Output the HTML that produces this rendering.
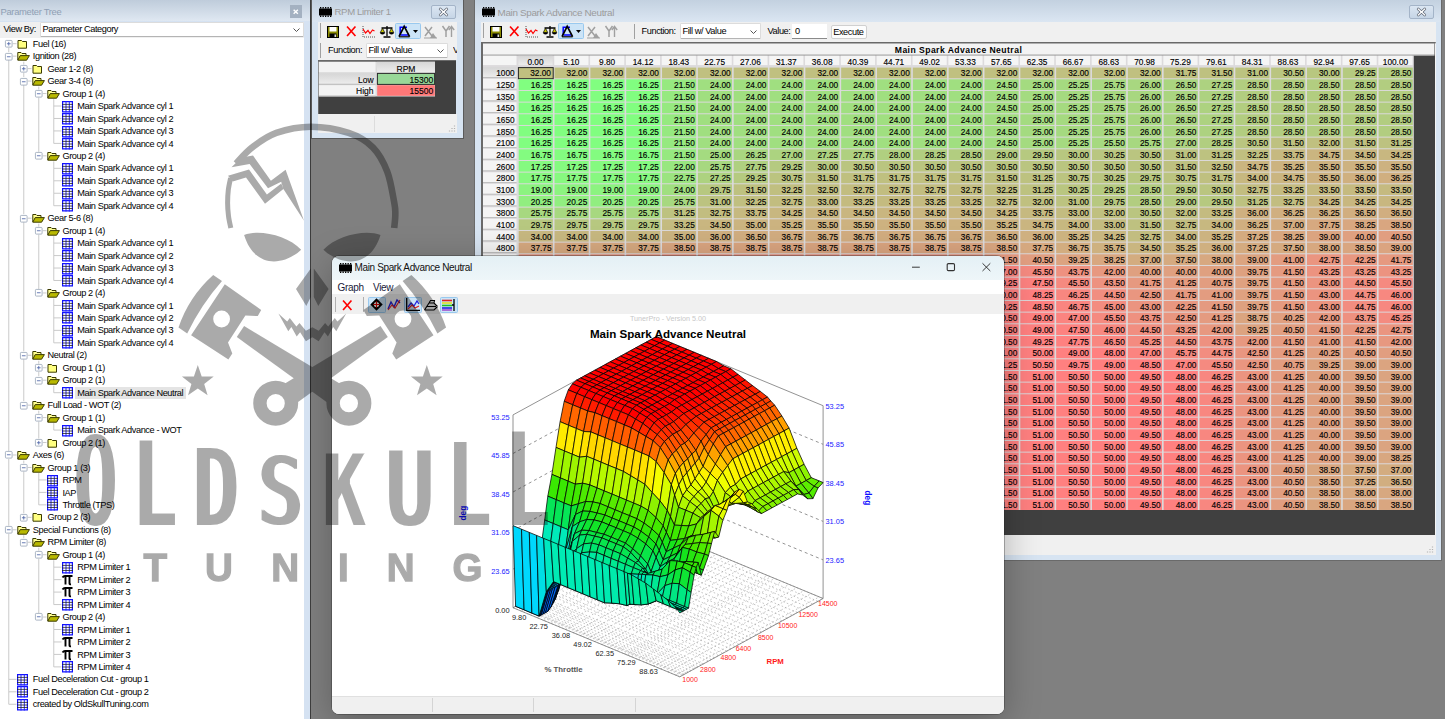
<!DOCTYPE html><html><head><meta charset="utf-8"><title>Main Spark Advance Neutral</title><style>
*{box-sizing:border-box;margin:0;padding:0}
html,body{width:1445px;height:719px;overflow:hidden}
body{position:relative;background:#808080;font-family:"Liberation Sans",sans-serif;font-size:9.2px;color:#000}
.abs,.abs *{position:absolute}
div{position:absolute;white-space:nowrap}
svg{position:absolute;overflow:visible}
.t{font-size:9.2px;letter-spacing:-0.4px;line-height:12.5px;height:12.5px;color:#000}
.g{font-size:8.4px;line-height:10px;text-align:right;color:#000}
.frame{background:#d7e4f2;border:1px solid #5a5a5a}
.tb{background:#f0f0f0}
</style></head><body>
<div id="left" style="left:0;top:0;width:310px;height:719px;background:#d5e2f2"></div>
<div style="left:310px;top:0;width:1px;height:719px;background:#3c3c3c"></div>
<div style="left:0;top:0;width:310px;height:21px;background:linear-gradient(#bfccdb,#dfe8f2)"></div>
<div class="t" style="left:0.5px;top:6px;color:#8f9fb4;font-size:9.4px;letter-spacing:-0.3px">Parameter Tree</div>
<div style="left:289.5px;top:5px;width:12.5px;height:13px;background:#a4b1c1"></div>
<svg style="left:293px;top:9px" width="5.5" height="5.5" viewBox="0 0 6 6"><path d="M0.7 0.7L5.3 5.3M5.3 0.7L0.7 5.3" stroke="#fff" stroke-width="1.5"/></svg>
<div style="left:0;top:21.5px;width:304px;height:16px;background:#f0f0f0"></div>
<div class="t" style="left:3.5px;top:23px">View By:</div>
<div style="left:40px;top:21.5px;width:263.5px;height:15px;background:#fff;border:1px solid #dcdcdc;border-bottom-color:#b4b4b4;border-radius:1.5px"></div><div class="t" style="left:42.5px;top:23.05px">Parameter Category</div><svg style="left:292.5px;top:27.5px" width="7" height="4" viewBox="0 0 7 4"><path d="M0.5 0.5L3.5 3.5L6.5 0.5" stroke="#555" stroke-width="1" fill="none"/></svg>
<div id="tree" style="left:0;top:37.5px;width:304px;height:682px;background:#fff"></div>
<svg style="left:0;top:0" width="304" height="719"><path d="M12.75 43.682H16.5M8.75 47.682V52.146M12.75 56.146H16.5M8.75 60.146V450.994M23.75 61.646V64.61M27.75 68.61H31.5M23.75 72.61V77.074M27.75 81.074H31.5M23.75 85.074V214.178M38.75 86.574V89.538M42.75 93.538H46.5M38.75 97.538V151.858M53.75 99.038V106.002M53.75 106.002H61.5M53.75 106.002V118.466M53.75 118.466H61.5M53.75 118.466V130.93M53.75 130.93H61.5M53.75 130.93V143.394M53.75 143.394H61.5M42.75 155.858H46.5M53.75 161.358V168.322M53.75 168.322H61.5M53.75 168.322V180.786M53.75 180.786H61.5M53.75 180.786V193.25M53.75 193.25H61.5M53.75 193.25V205.714M53.75 205.714H61.5M27.75 218.178H31.5M23.75 222.178V351.282M38.75 223.678V226.642M42.75 230.642H46.5M38.75 234.642V288.962M53.75 236.142V243.106M53.75 243.106H61.5M53.75 243.106V255.57M53.75 255.57H61.5M53.75 255.57V268.034M53.75 268.034H61.5M53.75 268.034V280.498M53.75 280.498H61.5M42.75 292.962H46.5M53.75 298.462V305.426M53.75 305.426H61.5M53.75 305.426V317.89M53.75 317.89H61.5M53.75 317.89V330.354M53.75 330.354H61.5M53.75 330.354V342.818M53.75 342.818H61.5M27.75 355.282H31.5M23.75 359.282V401.138M38.75 360.782V363.746M42.75 367.746H46.5M38.75 371.746V376.21M42.75 380.21H46.5M53.75 385.71V392.674M53.75 392.674H61.5M27.75 405.138H31.5M38.75 410.638V413.602M42.75 417.602H46.5M38.75 421.602V438.53M53.75 423.102V430.066M53.75 430.066H61.5M42.75 442.53H46.5M12.75 454.994H16.5M8.75 458.994V525.778M23.75 460.494V463.458M27.75 467.458H31.5M23.75 471.458V513.314M38.75 472.958V479.922M38.75 479.922H46.5M38.75 479.922V492.386M38.75 492.386H46.5M38.75 492.386V504.85M38.75 504.85H46.5M27.75 517.314H31.5M12.75 529.778H16.5M8.75 533.778V679.346M23.75 535.278V538.242M27.75 542.242H31.5M38.75 547.742V550.706M42.75 554.706H46.5M38.75 558.706V613.026M53.75 560.206V567.17M53.75 567.17H61.5M53.75 567.17V579.634M53.75 579.634H61.5M53.75 579.634V592.098M53.75 592.098H61.5M53.75 592.098V604.562M53.75 604.562H61.5M42.75 617.026H46.5M53.75 622.526V629.49M53.75 629.49H61.5M53.75 629.49V641.954M53.75 641.954H61.5M53.75 641.954V654.418M53.75 654.418H61.5M53.75 654.418V666.882M53.75 666.882H61.5M8.75 679.346H16.5M8.75 679.346V691.81M8.75 691.81H16.5M8.75 691.81V704.274M8.75 704.274H16.5" stroke="#c4c4c4" stroke-width="0.9" fill="none"/></svg>
<svg style="left:5px;top:40.132px" width="7.5" height="7.5" viewBox="0 0 9 9"><rect x="0.5" y="0.5" width="8" height="8" fill="#fff" stroke="#9aa7b8" rx="1"/><path d="M2.3 4.5H6.7M4.5 2.3V6.7" stroke="#4b63a7" stroke-width="1"/></svg>
<svg style="left:16.7px;top:38.782px" width="11" height="10" viewBox="0 0 11 10"><path d="M1 1.5H4.5L5.5 2.5H9.5V9.2H1z" fill="#ffff80" stroke="#3a3a00" stroke-width="1"/></svg>
<div class="t" style="left:32.8px;top:37.8px">Fuel (16)</div>
<svg style="left:5px;top:52.596px" width="7.5" height="7.5" viewBox="0 0 9 9"><rect x="0.5" y="0.5" width="8" height="8" fill="#fff" stroke="#9aa7b8" rx="1"/><path d="M2.3 4.5H6.7" stroke="#4b63a7" stroke-width="1"/></svg>
<svg style="left:16.7px;top:51.246px" width="13" height="10" viewBox="0 0 13 10"><path d="M0.8 9V1.5H4L5 2.5H9V4.5" fill="#ffff90" stroke="#3a3a00" stroke-width="1"/><path d="M0.8 9.2L3.2 4.6H12.4L9.6 9.2z" fill="#b8b800" stroke="#3a3a00" stroke-width="1"/></svg>
<div class="t" style="left:32.8px;top:50.264px">Ignition (28)</div>
<svg style="left:20px;top:65.06px" width="7.5" height="7.5" viewBox="0 0 9 9"><rect x="0.5" y="0.5" width="8" height="8" fill="#fff" stroke="#9aa7b8" rx="1"/><path d="M2.3 4.5H6.7M4.5 2.3V6.7" stroke="#4b63a7" stroke-width="1"/></svg>
<svg style="left:31.7px;top:63.71px" width="11" height="10" viewBox="0 0 11 10"><path d="M1 1.5H4.5L5.5 2.5H9.5V9.2H1z" fill="#ffff80" stroke="#3a3a00" stroke-width="1"/></svg>
<div class="t" style="left:47.6px;top:62.728px">Gear 1-2 (8)</div>
<svg style="left:20px;top:77.524px" width="7.5" height="7.5" viewBox="0 0 9 9"><rect x="0.5" y="0.5" width="8" height="8" fill="#fff" stroke="#9aa7b8" rx="1"/><path d="M2.3 4.5H6.7" stroke="#4b63a7" stroke-width="1"/></svg>
<svg style="left:31.7px;top:76.174px" width="13" height="10" viewBox="0 0 13 10"><path d="M0.8 9V1.5H4L5 2.5H9V4.5" fill="#ffff90" stroke="#3a3a00" stroke-width="1"/><path d="M0.8 9.2L3.2 4.6H12.4L9.6 9.2z" fill="#b8b800" stroke="#3a3a00" stroke-width="1"/></svg>
<div class="t" style="left:47.6px;top:75.192px">Gear 3-4 (8)</div>
<svg style="left:35px;top:89.988px" width="7.5" height="7.5" viewBox="0 0 9 9"><rect x="0.5" y="0.5" width="8" height="8" fill="#fff" stroke="#9aa7b8" rx="1"/><path d="M2.3 4.5H6.7" stroke="#4b63a7" stroke-width="1"/></svg>
<svg style="left:46.7px;top:88.638px" width="13" height="10" viewBox="0 0 13 10"><path d="M0.8 9V1.5H4L5 2.5H9V4.5" fill="#ffff90" stroke="#3a3a00" stroke-width="1"/><path d="M0.8 9.2L3.2 4.6H12.4L9.6 9.2z" fill="#b8b800" stroke="#3a3a00" stroke-width="1"/></svg>
<div class="t" style="left:62.4px;top:87.656px">Group 1 (4)</div>
<svg style="left:62.2px;top:100.602px" width="11" height="11.5" viewBox="0 0 11 11.5"><rect x="0" y="0" width="11" height="11.5" fill="#fff"/><path d="M0.6 0V11.5M10.4 0V11.5M0 0.6H11M0 10.9H11" stroke="#1010ff" stroke-width="1.2"/><path d="M4 0V11.5M7.3 0V11.5" stroke="#2020ff" stroke-width="1"/><path d="M0 3.4H11M0 6H11M0 8.5H11" stroke="#222" stroke-width="0.8"/></svg>
<div class="t" style="left:77.2px;top:100.12px">Main Spark Advance cyl 1</div>
<svg style="left:62.2px;top:113.066px" width="11" height="11.5" viewBox="0 0 11 11.5"><rect x="0" y="0" width="11" height="11.5" fill="#fff"/><path d="M0.6 0V11.5M10.4 0V11.5M0 0.6H11M0 10.9H11" stroke="#1010ff" stroke-width="1.2"/><path d="M4 0V11.5M7.3 0V11.5" stroke="#2020ff" stroke-width="1"/><path d="M0 3.4H11M0 6H11M0 8.5H11" stroke="#222" stroke-width="0.8"/></svg>
<div class="t" style="left:77.2px;top:112.584px">Main Spark Advance cyl 2</div>
<svg style="left:62.2px;top:125.53px" width="11" height="11.5" viewBox="0 0 11 11.5"><rect x="0" y="0" width="11" height="11.5" fill="#fff"/><path d="M0.6 0V11.5M10.4 0V11.5M0 0.6H11M0 10.9H11" stroke="#1010ff" stroke-width="1.2"/><path d="M4 0V11.5M7.3 0V11.5" stroke="#2020ff" stroke-width="1"/><path d="M0 3.4H11M0 6H11M0 8.5H11" stroke="#222" stroke-width="0.8"/></svg>
<div class="t" style="left:77.2px;top:125.048px">Main Spark Advance cyl 3</div>
<svg style="left:62.2px;top:137.994px" width="11" height="11.5" viewBox="0 0 11 11.5"><rect x="0" y="0" width="11" height="11.5" fill="#fff"/><path d="M0.6 0V11.5M10.4 0V11.5M0 0.6H11M0 10.9H11" stroke="#1010ff" stroke-width="1.2"/><path d="M4 0V11.5M7.3 0V11.5" stroke="#2020ff" stroke-width="1"/><path d="M0 3.4H11M0 6H11M0 8.5H11" stroke="#222" stroke-width="0.8"/></svg>
<div class="t" style="left:77.2px;top:137.512px">Main Spark Advance cyl 4</div>
<svg style="left:35px;top:152.308px" width="7.5" height="7.5" viewBox="0 0 9 9"><rect x="0.5" y="0.5" width="8" height="8" fill="#fff" stroke="#9aa7b8" rx="1"/><path d="M2.3 4.5H6.7" stroke="#4b63a7" stroke-width="1"/></svg>
<svg style="left:46.7px;top:150.958px" width="13" height="10" viewBox="0 0 13 10"><path d="M0.8 9V1.5H4L5 2.5H9V4.5" fill="#ffff90" stroke="#3a3a00" stroke-width="1"/><path d="M0.8 9.2L3.2 4.6H12.4L9.6 9.2z" fill="#b8b800" stroke="#3a3a00" stroke-width="1"/></svg>
<div class="t" style="left:62.4px;top:149.976px">Group 2 (4)</div>
<svg style="left:62.2px;top:162.922px" width="11" height="11.5" viewBox="0 0 11 11.5"><rect x="0" y="0" width="11" height="11.5" fill="#fff"/><path d="M0.6 0V11.5M10.4 0V11.5M0 0.6H11M0 10.9H11" stroke="#1010ff" stroke-width="1.2"/><path d="M4 0V11.5M7.3 0V11.5" stroke="#2020ff" stroke-width="1"/><path d="M0 3.4H11M0 6H11M0 8.5H11" stroke="#222" stroke-width="0.8"/></svg>
<div class="t" style="left:77.2px;top:162.44px">Main Spark Advance cyl 1</div>
<svg style="left:62.2px;top:175.386px" width="11" height="11.5" viewBox="0 0 11 11.5"><rect x="0" y="0" width="11" height="11.5" fill="#fff"/><path d="M0.6 0V11.5M10.4 0V11.5M0 0.6H11M0 10.9H11" stroke="#1010ff" stroke-width="1.2"/><path d="M4 0V11.5M7.3 0V11.5" stroke="#2020ff" stroke-width="1"/><path d="M0 3.4H11M0 6H11M0 8.5H11" stroke="#222" stroke-width="0.8"/></svg>
<div class="t" style="left:77.2px;top:174.904px">Main Spark Advance cyl 2</div>
<svg style="left:62.2px;top:187.85px" width="11" height="11.5" viewBox="0 0 11 11.5"><rect x="0" y="0" width="11" height="11.5" fill="#fff"/><path d="M0.6 0V11.5M10.4 0V11.5M0 0.6H11M0 10.9H11" stroke="#1010ff" stroke-width="1.2"/><path d="M4 0V11.5M7.3 0V11.5" stroke="#2020ff" stroke-width="1"/><path d="M0 3.4H11M0 6H11M0 8.5H11" stroke="#222" stroke-width="0.8"/></svg>
<div class="t" style="left:77.2px;top:187.368px">Main Spark Advance cyl 3</div>
<svg style="left:62.2px;top:200.314px" width="11" height="11.5" viewBox="0 0 11 11.5"><rect x="0" y="0" width="11" height="11.5" fill="#fff"/><path d="M0.6 0V11.5M10.4 0V11.5M0 0.6H11M0 10.9H11" stroke="#1010ff" stroke-width="1.2"/><path d="M4 0V11.5M7.3 0V11.5" stroke="#2020ff" stroke-width="1"/><path d="M0 3.4H11M0 6H11M0 8.5H11" stroke="#222" stroke-width="0.8"/></svg>
<div class="t" style="left:77.2px;top:199.832px">Main Spark Advance cyl 4</div>
<svg style="left:20px;top:214.628px" width="7.5" height="7.5" viewBox="0 0 9 9"><rect x="0.5" y="0.5" width="8" height="8" fill="#fff" stroke="#9aa7b8" rx="1"/><path d="M2.3 4.5H6.7" stroke="#4b63a7" stroke-width="1"/></svg>
<svg style="left:31.7px;top:213.278px" width="13" height="10" viewBox="0 0 13 10"><path d="M0.8 9V1.5H4L5 2.5H9V4.5" fill="#ffff90" stroke="#3a3a00" stroke-width="1"/><path d="M0.8 9.2L3.2 4.6H12.4L9.6 9.2z" fill="#b8b800" stroke="#3a3a00" stroke-width="1"/></svg>
<div class="t" style="left:47.6px;top:212.296px">Gear 5-6 (8)</div>
<svg style="left:35px;top:227.092px" width="7.5" height="7.5" viewBox="0 0 9 9"><rect x="0.5" y="0.5" width="8" height="8" fill="#fff" stroke="#9aa7b8" rx="1"/><path d="M2.3 4.5H6.7" stroke="#4b63a7" stroke-width="1"/></svg>
<svg style="left:46.7px;top:225.742px" width="13" height="10" viewBox="0 0 13 10"><path d="M0.8 9V1.5H4L5 2.5H9V4.5" fill="#ffff90" stroke="#3a3a00" stroke-width="1"/><path d="M0.8 9.2L3.2 4.6H12.4L9.6 9.2z" fill="#b8b800" stroke="#3a3a00" stroke-width="1"/></svg>
<div class="t" style="left:62.4px;top:224.76px">Group 1 (4)</div>
<svg style="left:62.2px;top:237.706px" width="11" height="11.5" viewBox="0 0 11 11.5"><rect x="0" y="0" width="11" height="11.5" fill="#fff"/><path d="M0.6 0V11.5M10.4 0V11.5M0 0.6H11M0 10.9H11" stroke="#1010ff" stroke-width="1.2"/><path d="M4 0V11.5M7.3 0V11.5" stroke="#2020ff" stroke-width="1"/><path d="M0 3.4H11M0 6H11M0 8.5H11" stroke="#222" stroke-width="0.8"/></svg>
<div class="t" style="left:77.2px;top:237.224px">Main Spark Advance cyl 1</div>
<svg style="left:62.2px;top:250.17px" width="11" height="11.5" viewBox="0 0 11 11.5"><rect x="0" y="0" width="11" height="11.5" fill="#fff"/><path d="M0.6 0V11.5M10.4 0V11.5M0 0.6H11M0 10.9H11" stroke="#1010ff" stroke-width="1.2"/><path d="M4 0V11.5M7.3 0V11.5" stroke="#2020ff" stroke-width="1"/><path d="M0 3.4H11M0 6H11M0 8.5H11" stroke="#222" stroke-width="0.8"/></svg>
<div class="t" style="left:77.2px;top:249.688px">Main Spark Advance cyl 2</div>
<svg style="left:62.2px;top:262.634px" width="11" height="11.5" viewBox="0 0 11 11.5"><rect x="0" y="0" width="11" height="11.5" fill="#fff"/><path d="M0.6 0V11.5M10.4 0V11.5M0 0.6H11M0 10.9H11" stroke="#1010ff" stroke-width="1.2"/><path d="M4 0V11.5M7.3 0V11.5" stroke="#2020ff" stroke-width="1"/><path d="M0 3.4H11M0 6H11M0 8.5H11" stroke="#222" stroke-width="0.8"/></svg>
<div class="t" style="left:77.2px;top:262.152px">Main Spark Advance cyl 3</div>
<svg style="left:62.2px;top:275.098px" width="11" height="11.5" viewBox="0 0 11 11.5"><rect x="0" y="0" width="11" height="11.5" fill="#fff"/><path d="M0.6 0V11.5M10.4 0V11.5M0 0.6H11M0 10.9H11" stroke="#1010ff" stroke-width="1.2"/><path d="M4 0V11.5M7.3 0V11.5" stroke="#2020ff" stroke-width="1"/><path d="M0 3.4H11M0 6H11M0 8.5H11" stroke="#222" stroke-width="0.8"/></svg>
<div class="t" style="left:77.2px;top:274.616px">Main Spark Advance cyl 4</div>
<svg style="left:35px;top:289.412px" width="7.5" height="7.5" viewBox="0 0 9 9"><rect x="0.5" y="0.5" width="8" height="8" fill="#fff" stroke="#9aa7b8" rx="1"/><path d="M2.3 4.5H6.7" stroke="#4b63a7" stroke-width="1"/></svg>
<svg style="left:46.7px;top:288.062px" width="13" height="10" viewBox="0 0 13 10"><path d="M0.8 9V1.5H4L5 2.5H9V4.5" fill="#ffff90" stroke="#3a3a00" stroke-width="1"/><path d="M0.8 9.2L3.2 4.6H12.4L9.6 9.2z" fill="#b8b800" stroke="#3a3a00" stroke-width="1"/></svg>
<div class="t" style="left:62.4px;top:287.08px">Group 2 (4)</div>
<svg style="left:62.2px;top:300.026px" width="11" height="11.5" viewBox="0 0 11 11.5"><rect x="0" y="0" width="11" height="11.5" fill="#fff"/><path d="M0.6 0V11.5M10.4 0V11.5M0 0.6H11M0 10.9H11" stroke="#1010ff" stroke-width="1.2"/><path d="M4 0V11.5M7.3 0V11.5" stroke="#2020ff" stroke-width="1"/><path d="M0 3.4H11M0 6H11M0 8.5H11" stroke="#222" stroke-width="0.8"/></svg>
<div class="t" style="left:77.2px;top:299.544px">Main Spark Advance cyl 1</div>
<svg style="left:62.2px;top:312.49px" width="11" height="11.5" viewBox="0 0 11 11.5"><rect x="0" y="0" width="11" height="11.5" fill="#fff"/><path d="M0.6 0V11.5M10.4 0V11.5M0 0.6H11M0 10.9H11" stroke="#1010ff" stroke-width="1.2"/><path d="M4 0V11.5M7.3 0V11.5" stroke="#2020ff" stroke-width="1"/><path d="M0 3.4H11M0 6H11M0 8.5H11" stroke="#222" stroke-width="0.8"/></svg>
<div class="t" style="left:77.2px;top:312.008px">Main Spark Advance cyl 2</div>
<svg style="left:62.2px;top:324.954px" width="11" height="11.5" viewBox="0 0 11 11.5"><rect x="0" y="0" width="11" height="11.5" fill="#fff"/><path d="M0.6 0V11.5M10.4 0V11.5M0 0.6H11M0 10.9H11" stroke="#1010ff" stroke-width="1.2"/><path d="M4 0V11.5M7.3 0V11.5" stroke="#2020ff" stroke-width="1"/><path d="M0 3.4H11M0 6H11M0 8.5H11" stroke="#222" stroke-width="0.8"/></svg>
<div class="t" style="left:77.2px;top:324.472px">Main Spark Advance cyl 3</div>
<svg style="left:62.2px;top:337.418px" width="11" height="11.5" viewBox="0 0 11 11.5"><rect x="0" y="0" width="11" height="11.5" fill="#fff"/><path d="M0.6 0V11.5M10.4 0V11.5M0 0.6H11M0 10.9H11" stroke="#1010ff" stroke-width="1.2"/><path d="M4 0V11.5M7.3 0V11.5" stroke="#2020ff" stroke-width="1"/><path d="M0 3.4H11M0 6H11M0 8.5H11" stroke="#222" stroke-width="0.8"/></svg>
<div class="t" style="left:77.2px;top:336.936px">Main Spark Advance cyl 4</div>
<svg style="left:20px;top:351.732px" width="7.5" height="7.5" viewBox="0 0 9 9"><rect x="0.5" y="0.5" width="8" height="8" fill="#fff" stroke="#9aa7b8" rx="1"/><path d="M2.3 4.5H6.7" stroke="#4b63a7" stroke-width="1"/></svg>
<svg style="left:31.7px;top:350.382px" width="13" height="10" viewBox="0 0 13 10"><path d="M0.8 9V1.5H4L5 2.5H9V4.5" fill="#ffff90" stroke="#3a3a00" stroke-width="1"/><path d="M0.8 9.2L3.2 4.6H12.4L9.6 9.2z" fill="#b8b800" stroke="#3a3a00" stroke-width="1"/></svg>
<div class="t" style="left:47.6px;top:349.4px">Neutral (2)</div>
<svg style="left:35px;top:364.196px" width="7.5" height="7.5" viewBox="0 0 9 9"><rect x="0.5" y="0.5" width="8" height="8" fill="#fff" stroke="#9aa7b8" rx="1"/><path d="M2.3 4.5H6.7M4.5 2.3V6.7" stroke="#4b63a7" stroke-width="1"/></svg>
<svg style="left:46.7px;top:362.846px" width="11" height="10" viewBox="0 0 11 10"><path d="M1 1.5H4.5L5.5 2.5H9.5V9.2H1z" fill="#ffff80" stroke="#3a3a00" stroke-width="1"/></svg>
<div class="t" style="left:62.4px;top:361.864px">Group 1 (1)</div>
<svg style="left:35px;top:376.66px" width="7.5" height="7.5" viewBox="0 0 9 9"><rect x="0.5" y="0.5" width="8" height="8" fill="#fff" stroke="#9aa7b8" rx="1"/><path d="M2.3 4.5H6.7" stroke="#4b63a7" stroke-width="1"/></svg>
<svg style="left:46.7px;top:375.31px" width="13" height="10" viewBox="0 0 13 10"><path d="M0.8 9V1.5H4L5 2.5H9V4.5" fill="#ffff90" stroke="#3a3a00" stroke-width="1"/><path d="M0.8 9.2L3.2 4.6H12.4L9.6 9.2z" fill="#b8b800" stroke="#3a3a00" stroke-width="1"/></svg>
<div class="t" style="left:62.4px;top:374.328px">Group 2 (1)</div>
<svg style="left:62.2px;top:387.274px" width="11" height="11.5" viewBox="0 0 11 11.5"><rect x="0" y="0" width="11" height="11.5" fill="#fff"/><path d="M0.6 0V11.5M10.4 0V11.5M0 0.6H11M0 10.9H11" stroke="#1010ff" stroke-width="1.2"/><path d="M4 0V11.5M7.3 0V11.5" stroke="#2020ff" stroke-width="1"/><path d="M0 3.4H11M0 6H11M0 8.5H11" stroke="#222" stroke-width="0.8"/></svg>
<div style="left:75.2px;top:386.742px;width:111px;height:12px;background:#e4e4e4"></div>
<div class="t" style="left:77.2px;top:386.792px">Main Spark Advance Neutral</div>
<svg style="left:20px;top:401.588px" width="7.5" height="7.5" viewBox="0 0 9 9"><rect x="0.5" y="0.5" width="8" height="8" fill="#fff" stroke="#9aa7b8" rx="1"/><path d="M2.3 4.5H6.7" stroke="#4b63a7" stroke-width="1"/></svg>
<svg style="left:31.7px;top:400.238px" width="13" height="10" viewBox="0 0 13 10"><path d="M0.8 9V1.5H4L5 2.5H9V4.5" fill="#ffff90" stroke="#3a3a00" stroke-width="1"/><path d="M0.8 9.2L3.2 4.6H12.4L9.6 9.2z" fill="#b8b800" stroke="#3a3a00" stroke-width="1"/></svg>
<div class="t" style="left:47.6px;top:399.256px">Full Load - WOT (2)</div>
<svg style="left:35px;top:414.052px" width="7.5" height="7.5" viewBox="0 0 9 9"><rect x="0.5" y="0.5" width="8" height="8" fill="#fff" stroke="#9aa7b8" rx="1"/><path d="M2.3 4.5H6.7" stroke="#4b63a7" stroke-width="1"/></svg>
<svg style="left:46.7px;top:412.702px" width="13" height="10" viewBox="0 0 13 10"><path d="M0.8 9V1.5H4L5 2.5H9V4.5" fill="#ffff90" stroke="#3a3a00" stroke-width="1"/><path d="M0.8 9.2L3.2 4.6H12.4L9.6 9.2z" fill="#b8b800" stroke="#3a3a00" stroke-width="1"/></svg>
<div class="t" style="left:62.4px;top:411.72px">Group 1 (1)</div>
<svg style="left:62.2px;top:424.666px" width="11" height="11.5" viewBox="0 0 11 11.5"><rect x="0" y="0" width="11" height="11.5" fill="#fff"/><path d="M0.6 0V11.5M10.4 0V11.5M0 0.6H11M0 10.9H11" stroke="#1010ff" stroke-width="1.2"/><path d="M4 0V11.5M7.3 0V11.5" stroke="#2020ff" stroke-width="1"/><path d="M0 3.4H11M0 6H11M0 8.5H11" stroke="#222" stroke-width="0.8"/></svg>
<div class="t" style="left:77.2px;top:424.184px">Main Spark Advance - WOT</div>
<svg style="left:35px;top:438.98px" width="7.5" height="7.5" viewBox="0 0 9 9"><rect x="0.5" y="0.5" width="8" height="8" fill="#fff" stroke="#9aa7b8" rx="1"/><path d="M2.3 4.5H6.7M4.5 2.3V6.7" stroke="#4b63a7" stroke-width="1"/></svg>
<svg style="left:46.7px;top:437.63px" width="11" height="10" viewBox="0 0 11 10"><path d="M1 1.5H4.5L5.5 2.5H9.5V9.2H1z" fill="#ffff80" stroke="#3a3a00" stroke-width="1"/></svg>
<div class="t" style="left:62.4px;top:436.648px">Group 2 (1)</div>
<svg style="left:5px;top:451.444px" width="7.5" height="7.5" viewBox="0 0 9 9"><rect x="0.5" y="0.5" width="8" height="8" fill="#fff" stroke="#9aa7b8" rx="1"/><path d="M2.3 4.5H6.7" stroke="#4b63a7" stroke-width="1"/></svg>
<svg style="left:16.7px;top:450.094px" width="13" height="10" viewBox="0 0 13 10"><path d="M0.8 9V1.5H4L5 2.5H9V4.5" fill="#ffff90" stroke="#3a3a00" stroke-width="1"/><path d="M0.8 9.2L3.2 4.6H12.4L9.6 9.2z" fill="#b8b800" stroke="#3a3a00" stroke-width="1"/></svg>
<div class="t" style="left:32.8px;top:449.112px">Axes (6)</div>
<svg style="left:20px;top:463.908px" width="7.5" height="7.5" viewBox="0 0 9 9"><rect x="0.5" y="0.5" width="8" height="8" fill="#fff" stroke="#9aa7b8" rx="1"/><path d="M2.3 4.5H6.7" stroke="#4b63a7" stroke-width="1"/></svg>
<svg style="left:31.7px;top:462.558px" width="13" height="10" viewBox="0 0 13 10"><path d="M0.8 9V1.5H4L5 2.5H9V4.5" fill="#ffff90" stroke="#3a3a00" stroke-width="1"/><path d="M0.8 9.2L3.2 4.6H12.4L9.6 9.2z" fill="#b8b800" stroke="#3a3a00" stroke-width="1"/></svg>
<div class="t" style="left:47.6px;top:461.576px">Group 1 (3)</div>
<svg style="left:47.2px;top:474.522px" width="11" height="11.5" viewBox="0 0 11 11.5"><rect x="0" y="0" width="11" height="11.5" fill="#fff"/><path d="M0.6 0V11.5M10.4 0V11.5M0 0.6H11M0 10.9H11" stroke="#1010ff" stroke-width="1.2"/><path d="M4 0V11.5M7.3 0V11.5" stroke="#2020ff" stroke-width="1"/><path d="M0 3.4H11M0 6H11M0 8.5H11" stroke="#222" stroke-width="0.8"/></svg>
<div class="t" style="left:62.4px;top:474.04px">RPM</div>
<svg style="left:47.2px;top:486.986px" width="11" height="11.5" viewBox="0 0 11 11.5"><rect x="0" y="0" width="11" height="11.5" fill="#fff"/><path d="M0.6 0V11.5M10.4 0V11.5M0 0.6H11M0 10.9H11" stroke="#1010ff" stroke-width="1.2"/><path d="M4 0V11.5M7.3 0V11.5" stroke="#2020ff" stroke-width="1"/><path d="M0 3.4H11M0 6H11M0 8.5H11" stroke="#222" stroke-width="0.8"/></svg>
<div class="t" style="left:62.4px;top:486.504px">IAP</div>
<svg style="left:47.2px;top:499.45px" width="11" height="11.5" viewBox="0 0 11 11.5"><rect x="0" y="0" width="11" height="11.5" fill="#fff"/><path d="M0.6 0V11.5M10.4 0V11.5M0 0.6H11M0 10.9H11" stroke="#1010ff" stroke-width="1.2"/><path d="M4 0V11.5M7.3 0V11.5" stroke="#2020ff" stroke-width="1"/><path d="M0 3.4H11M0 6H11M0 8.5H11" stroke="#222" stroke-width="0.8"/></svg>
<div class="t" style="left:62.4px;top:498.968px">Throttle (TPS)</div>
<svg style="left:20px;top:513.764px" width="7.5" height="7.5" viewBox="0 0 9 9"><rect x="0.5" y="0.5" width="8" height="8" fill="#fff" stroke="#9aa7b8" rx="1"/><path d="M2.3 4.5H6.7M4.5 2.3V6.7" stroke="#4b63a7" stroke-width="1"/></svg>
<svg style="left:31.7px;top:512.414px" width="11" height="10" viewBox="0 0 11 10"><path d="M1 1.5H4.5L5.5 2.5H9.5V9.2H1z" fill="#ffff80" stroke="#3a3a00" stroke-width="1"/></svg>
<div class="t" style="left:47.6px;top:511.432px">Group 2 (3)</div>
<svg style="left:5px;top:526.228px" width="7.5" height="7.5" viewBox="0 0 9 9"><rect x="0.5" y="0.5" width="8" height="8" fill="#fff" stroke="#9aa7b8" rx="1"/><path d="M2.3 4.5H6.7" stroke="#4b63a7" stroke-width="1"/></svg>
<svg style="left:16.7px;top:524.878px" width="13" height="10" viewBox="0 0 13 10"><path d="M0.8 9V1.5H4L5 2.5H9V4.5" fill="#ffff90" stroke="#3a3a00" stroke-width="1"/><path d="M0.8 9.2L3.2 4.6H12.4L9.6 9.2z" fill="#b8b800" stroke="#3a3a00" stroke-width="1"/></svg>
<div class="t" style="left:32.8px;top:523.896px">Special Functions (8)</div>
<svg style="left:20px;top:538.692px" width="7.5" height="7.5" viewBox="0 0 9 9"><rect x="0.5" y="0.5" width="8" height="8" fill="#fff" stroke="#9aa7b8" rx="1"/><path d="M2.3 4.5H6.7" stroke="#4b63a7" stroke-width="1"/></svg>
<svg style="left:31.7px;top:537.342px" width="13" height="10" viewBox="0 0 13 10"><path d="M0.8 9V1.5H4L5 2.5H9V4.5" fill="#ffff90" stroke="#3a3a00" stroke-width="1"/><path d="M0.8 9.2L3.2 4.6H12.4L9.6 9.2z" fill="#b8b800" stroke="#3a3a00" stroke-width="1"/></svg>
<div class="t" style="left:47.6px;top:536.36px">RPM Limiter (8)</div>
<svg style="left:35px;top:551.156px" width="7.5" height="7.5" viewBox="0 0 9 9"><rect x="0.5" y="0.5" width="8" height="8" fill="#fff" stroke="#9aa7b8" rx="1"/><path d="M2.3 4.5H6.7" stroke="#4b63a7" stroke-width="1"/></svg>
<svg style="left:46.7px;top:549.806px" width="13" height="10" viewBox="0 0 13 10"><path d="M0.8 9V1.5H4L5 2.5H9V4.5" fill="#ffff90" stroke="#3a3a00" stroke-width="1"/><path d="M0.8 9.2L3.2 4.6H12.4L9.6 9.2z" fill="#b8b800" stroke="#3a3a00" stroke-width="1"/></svg>
<div class="t" style="left:62.4px;top:548.824px">Group 1 (4)</div>
<svg style="left:62.2px;top:561.77px" width="11" height="11.5" viewBox="0 0 11 11.5"><rect x="0" y="0" width="11" height="11.5" fill="#fff"/><path d="M0.6 0V11.5M10.4 0V11.5M0 0.6H11M0 10.9H11" stroke="#1010ff" stroke-width="1.2"/><path d="M4 0V11.5M7.3 0V11.5" stroke="#2020ff" stroke-width="1"/><path d="M0 3.4H11M0 6H11M0 8.5H11" stroke="#222" stroke-width="0.8"/></svg>
<div class="t" style="left:77.2px;top:561.288px">RPM Limiter 1</div>
<svg style="left:62.2px;top:575.034px" width="11" height="10" viewBox="0 0 11 10"><path d="M0.5 2.5C1.5 1 2 1 3 1H10.5M3.5 1.2V9.5M7.5 1.2V8.5Q7.5 9.5 9 9.3" stroke="#000" stroke-width="1.9" fill="none"/></svg>
<div class="t" style="left:77.2px;top:573.752px">RPM Limiter 2</div>
<svg style="left:62.2px;top:587.498px" width="11" height="10" viewBox="0 0 11 10"><path d="M0.5 2.5C1.5 1 2 1 3 1H10.5M3.5 1.2V9.5M7.5 1.2V8.5Q7.5 9.5 9 9.3" stroke="#000" stroke-width="1.9" fill="none"/></svg>
<div class="t" style="left:77.2px;top:586.216px">RPM Limiter 3</div>
<svg style="left:62.2px;top:599.162px" width="11" height="11.5" viewBox="0 0 11 11.5"><rect x="0" y="0" width="11" height="11.5" fill="#fff"/><path d="M0.6 0V11.5M10.4 0V11.5M0 0.6H11M0 10.9H11" stroke="#1010ff" stroke-width="1.2"/><path d="M4 0V11.5M7.3 0V11.5" stroke="#2020ff" stroke-width="1"/><path d="M0 3.4H11M0 6H11M0 8.5H11" stroke="#222" stroke-width="0.8"/></svg>
<div class="t" style="left:77.2px;top:598.68px">RPM Limiter 4</div>
<svg style="left:35px;top:613.476px" width="7.5" height="7.5" viewBox="0 0 9 9"><rect x="0.5" y="0.5" width="8" height="8" fill="#fff" stroke="#9aa7b8" rx="1"/><path d="M2.3 4.5H6.7" stroke="#4b63a7" stroke-width="1"/></svg>
<svg style="left:46.7px;top:612.126px" width="13" height="10" viewBox="0 0 13 10"><path d="M0.8 9V1.5H4L5 2.5H9V4.5" fill="#ffff90" stroke="#3a3a00" stroke-width="1"/><path d="M0.8 9.2L3.2 4.6H12.4L9.6 9.2z" fill="#b8b800" stroke="#3a3a00" stroke-width="1"/></svg>
<div class="t" style="left:62.4px;top:611.144px">Group 2 (4)</div>
<svg style="left:62.2px;top:624.09px" width="11" height="11.5" viewBox="0 0 11 11.5"><rect x="0" y="0" width="11" height="11.5" fill="#fff"/><path d="M0.6 0V11.5M10.4 0V11.5M0 0.6H11M0 10.9H11" stroke="#1010ff" stroke-width="1.2"/><path d="M4 0V11.5M7.3 0V11.5" stroke="#2020ff" stroke-width="1"/><path d="M0 3.4H11M0 6H11M0 8.5H11" stroke="#222" stroke-width="0.8"/></svg>
<div class="t" style="left:77.2px;top:623.608px">RPM Limiter 1</div>
<svg style="left:62.2px;top:637.354px" width="11" height="10" viewBox="0 0 11 10"><path d="M0.5 2.5C1.5 1 2 1 3 1H10.5M3.5 1.2V9.5M7.5 1.2V8.5Q7.5 9.5 9 9.3" stroke="#000" stroke-width="1.9" fill="none"/></svg>
<div class="t" style="left:77.2px;top:636.072px">RPM Limiter 2</div>
<svg style="left:62.2px;top:649.818px" width="11" height="10" viewBox="0 0 11 10"><path d="M0.5 2.5C1.5 1 2 1 3 1H10.5M3.5 1.2V9.5M7.5 1.2V8.5Q7.5 9.5 9 9.3" stroke="#000" stroke-width="1.9" fill="none"/></svg>
<div class="t" style="left:77.2px;top:648.536px">RPM Limiter 3</div>
<svg style="left:62.2px;top:661.482px" width="11" height="11.5" viewBox="0 0 11 11.5"><rect x="0" y="0" width="11" height="11.5" fill="#fff"/><path d="M0.6 0V11.5M10.4 0V11.5M0 0.6H11M0 10.9H11" stroke="#1010ff" stroke-width="1.2"/><path d="M4 0V11.5M7.3 0V11.5" stroke="#2020ff" stroke-width="1"/><path d="M0 3.4H11M0 6H11M0 8.5H11" stroke="#222" stroke-width="0.8"/></svg>
<div class="t" style="left:77.2px;top:661px">RPM Limiter 4</div>
<svg style="left:17.2px;top:673.946px" width="11" height="11.5" viewBox="0 0 11 11.5"><rect x="0" y="0" width="11" height="11.5" fill="#fff"/><path d="M0.6 0V11.5M10.4 0V11.5M0 0.6H11M0 10.9H11" stroke="#1010ff" stroke-width="1.2"/><path d="M4 0V11.5M7.3 0V11.5" stroke="#2020ff" stroke-width="1"/><path d="M0 3.4H11M0 6H11M0 8.5H11" stroke="#222" stroke-width="0.8"/></svg>
<div class="t" style="left:32.8px;top:673.464px">Fuel Deceleration Cut - group 1</div>
<svg style="left:17.2px;top:686.41px" width="11" height="11.5" viewBox="0 0 11 11.5"><rect x="0" y="0" width="11" height="11.5" fill="#fff"/><path d="M0.6 0V11.5M10.4 0V11.5M0 0.6H11M0 10.9H11" stroke="#1010ff" stroke-width="1.2"/><path d="M4 0V11.5M7.3 0V11.5" stroke="#2020ff" stroke-width="1"/><path d="M0 3.4H11M0 6H11M0 8.5H11" stroke="#222" stroke-width="0.8"/></svg>
<div class="t" style="left:32.8px;top:685.928px">Fuel Deceleration Cut - group 2</div>
<svg style="left:17.2px;top:698.874px" width="11" height="11.5" viewBox="0 0 11 11.5"><rect x="0" y="0" width="11" height="11.5" fill="#fff"/><path d="M0.6 0V11.5M10.4 0V11.5M0 0.6H11M0 10.9H11" stroke="#1010ff" stroke-width="1.2"/><path d="M4 0V11.5M7.3 0V11.5" stroke="#2020ff" stroke-width="1"/><path d="M0 3.4H11M0 6H11M0 8.5H11" stroke="#222" stroke-width="0.8"/></svg>
<div class="t" style="left:32.8px;top:698.392px">created by OldSkullTuning.com</div>
<div class="frame" style="left:310.5px;top:-1px;width:153px;height:140px;background:#d7e4f2"></div>
<div style="left:311.5px;top:0;width:151px;height:21.5px;background:linear-gradient(#c3d1e0,#dbe6f2)"></div>
<svg style="left:318.5px;top:6.5px" width="13" height="10" viewBox="0 0 13 10"><rect x="0" y="1.5" width="13" height="7" fill="#000"/><rect x="1" y="0" width="1.3" height="1.5" fill="#000"/><rect x="1" y="8.5" width="1.3" height="1.5" fill="#000"/><rect x="3.5" y="0" width="1.3" height="1.5" fill="#000"/><rect x="3.5" y="8.5" width="1.3" height="1.5" fill="#000"/><rect x="6" y="0" width="1.3" height="1.5" fill="#000"/><rect x="6" y="8.5" width="1.3" height="1.5" fill="#000"/><rect x="8.5" y="0" width="1.3" height="1.5" fill="#000"/><rect x="8.5" y="8.5" width="1.3" height="1.5" fill="#000"/><rect x="11" y="0" width="1.3" height="1.5" fill="#000"/><rect x="11" y="8.5" width="1.3" height="1.5" fill="#000"/></svg>
<div class="t" style="left:334.5px;top:5.8px;color:#9b9b9b;font-size:9.6px;letter-spacing:-0.35px">RPM Limiter 1</div>
<div style="left:431px;top:4.7px;width:24.5px;height:14px;border:1px solid #a4b4c8;border-radius:2px;background:linear-gradient(#dbe6f2,#c6d5e6)"></div><svg style="left:438.8px;top:7.7px" width="9" height="8" viewBox="0 0 9 8"><path d="M1.2 1L7.8 7M7.8 1L1.2 7" stroke="#5a6270" stroke-width="2.6" stroke-linecap="round"/><path d="M1.2 1L7.8 7M7.8 1L1.2 7" stroke="#fff" stroke-width="1.3" stroke-linecap="round"/></svg>
<div class="tb" style="left:317.5px;top:21.5px;width:139.5px;height:38.5px"></div>
<div style="left:320px;top:23px;width:1px;height:15px;background:#a0a0a0"></div><svg style="left:327px;top:25.5px" width="12" height="12" viewBox="0 0 12 12"><rect x="0.5" y="0.5" width="11" height="11" fill="#8a8a00" stroke="#000"/><rect x="2.5" y="1" width="7" height="4.5" fill="#fff"/><rect x="2.5" y="7.5" width="7" height="4" fill="#000"/><rect x="7.5" y="8.5" width="1.5" height="2.5" fill="#ddd"/></svg><svg style="left:345.5px;top:26px" width="10.5" height="10.5" viewBox="0 0 10 10"><path d="M1 0.5L9 9.5M9 0.5L1 9.5" stroke="#f00" stroke-width="1.6" fill="none"/></svg><svg style="left:362px;top:25.5px" width="13" height="12" viewBox="0 0 13 12"><path d="M1 0V11H13" stroke="#555" stroke-width="1" fill="none" stroke-dasharray="1 1"/><path d="M1 3L3.5 7L6 4.5L8 7.5L10.5 4L12.5 5" stroke="#f00" stroke-width="1.2" fill="none"/></svg><svg style="left:380px;top:25px" width="14" height="13" viewBox="0 0 14 13"><path d="M7 1V11M3.5 12H10.5M1.5 3H12.5" stroke="#000" stroke-width="1.3" fill="none"/><path d="M0.3 7.5L2.5 3.2L4.7 7.5zM9.3 7.5L11.5 3.2L13.7 7.5z" fill="#c8c800" stroke="#000" stroke-width="0.7"/><path d="M0 7.5H5a2.5 2 0 0 1-5 0zM9 7.5H14a2.5 2 0 0 1-5 0z" fill="#000"/></svg><div style="left:395.2px;top:22.5px;width:25.5px;height:16.5px;background:#cce4f7;border:1px solid #99c9ef;border-radius:1.5px"></div><svg style="left:398px;top:25px" width="13" height="13" viewBox="0 0 13 13"><path d="M2.2 10V2.2H9M2.5 10H10" stroke="#0000ff" stroke-width="1.5" fill="none"/><path d="M1 11.6L6.2 1.3L11.6 11.6" stroke="#000" stroke-width="1.7" fill="none"/><path d="M1 11.8H11.6" stroke="#000" stroke-width="1.2"/></svg><svg style="left:413px;top:30px" width="5" height="3" viewBox="0 0 5 3"><path d="M0 0H5L2.5 3z" fill="#000"/></svg><svg style="left:424px;top:25.5px" width="13" height="13" viewBox="0 0 13 13"><path d="M1 1L8 10M8 1L1 10" stroke="#a0a0a0" stroke-width="1.5" fill="none"/><path d="M6 12L9 7L12.5 12z" fill="#a0a0a0"/><path d="M0 12H13" stroke="#a0a0a0"/></svg><svg style="left:442px;top:25px" width="13" height="13" viewBox="0 0 13 13"><path d="M0.5 1L4 6V12M7.5 1L4 6" stroke="#a0a0a0" stroke-width="1.5" fill="none"/><path d="M9.5 12V2M6.8 5L9.5 1.5L12.2 5" stroke="#a0a0a0" stroke-width="1.4" fill="none"/></svg>
<div style="left:320px;top:42.5px;width:1px;height:15px;background:#a0a0a0"></div>
<div class="t" style="left:328px;top:44.3px">Function:</div>
<div style="left:366px;top:43px;width:81.5px;height:14.8px;background:#fff;border:1px solid #dcdcdc;border-bottom-color:#b4b4b4;border-radius:1.5px"></div><div class="t" style="left:368.5px;top:44.45px">Fill w/ Value</div><svg style="left:436.5px;top:48.9px" width="7" height="4" viewBox="0 0 7 4"><path d="M0.5 0.5L3.5 3.5L6.5 0.5" stroke="#555" stroke-width="1" fill="none"/></svg>
<div class="t" style="left:453px;top:44.3px;width:4px;overflow:hidden">Value:</div>
<div style="left:317.5px;top:60px;width:138.6px;height:54px;background:#404040;border-top:1.5px solid #696969;border-left:1.2px solid #696969"></div>
<svg style="left:0;top:0" width="470" height="120" viewBox="0 0 470 120" font-family="'Liberation Sans',sans-serif" font-size="9.5"><rect x="318.7" y="61.6" width="116.3" height="34.9" fill="#dcdcdc"/><rect x="318.9" y="61.9" width="56.6" height="10.2" fill="#f3f3f3"/><rect x="377" y="61.9" width="57.8" height="10.2" fill="url(#hs2)"/><rect x="318.9" y="73.4" width="56.6" height="10.4" fill="url(#hs2)"/><rect x="318.9" y="85.2" width="56.6" height="10.4" fill="#f3f3f3"/><rect x="318.9" y="83.8" width="56.6" height="0.9" fill="#b8b8b8"/><rect x="318.9" y="95.6" width="56.6" height="0.9" fill="#b8b8b8"/><rect x="377.4" y="73.4" width="57.2" height="11" fill="#98d898" stroke="#2a2a2a" stroke-width="1"/><rect x="377.2" y="85.2" width="57.6" height="10.6" fill="#ff7878"/><defs><linearGradient id="hs2" x1="0" y1="0" x2="0" y2="1"><stop offset="0" stop-color="#d6d6d6"/><stop offset="1" stop-color="#ececec"/></linearGradient></defs><g transform="scale(0.9 1)" stroke="#000" stroke-width="0.12"><text x="451.1" y="72" text-anchor="middle">RPM</text><g text-anchor="end"><text x="415.1" y="82.7">Low</text><text x="415.1" y="94.3">High</text><text x="481.3" y="82.7">15300</text><text x="481.3" y="94.3">15500</text></g></g></svg>
<div style="left:317.5px;top:114.2px;width:139.5px;height:19px;background:#f0f0f0"></div>
<div style="left:374.3px;top:116px;width:1px;height:16px;background:#dcdcdc"></div>
<svg style="left:449px;top:125px" width="7" height="7" viewBox="0 0 7 7"><path d="M5.5 0.5v1M5.5 3v1M3 3v1M5.5 5.5v1M3 5.5v1M0.5 5.5v1" stroke="#b0b0b0" stroke-width="1.2"/></svg>
<div class="frame" style="left:474px;top:-1px;width:968px;height:561.5px;border-color:#6a6a6a"></div>
<div style="left:475px;top:0;width:966px;height:21.5px;background:linear-gradient(#c3d1e0,#dbe6f2)"></div>
<svg style="left:481.5px;top:6.5px" width="13" height="10" viewBox="0 0 13 10"><rect x="0" y="1.5" width="13" height="7" fill="#000"/><rect x="1" y="0" width="1.3" height="1.5" fill="#000"/><rect x="1" y="8.5" width="1.3" height="1.5" fill="#000"/><rect x="3.5" y="0" width="1.3" height="1.5" fill="#000"/><rect x="3.5" y="8.5" width="1.3" height="1.5" fill="#000"/><rect x="6" y="0" width="1.3" height="1.5" fill="#000"/><rect x="6" y="8.5" width="1.3" height="1.5" fill="#000"/><rect x="8.5" y="0" width="1.3" height="1.5" fill="#000"/><rect x="8.5" y="8.5" width="1.3" height="1.5" fill="#000"/><rect x="11" y="0" width="1.3" height="1.5" fill="#000"/><rect x="11" y="8.5" width="1.3" height="1.5" fill="#000"/></svg>
<div class="t" style="left:497.5px;top:6.5px;color:#9b9b9b;font-size:9.9px;letter-spacing:-0.33px">Main Spark Advance Neutral</div>
<div style="left:1409.3px;top:5.2px;width:24.5px;height:14px;border:1px solid #a4b4c8;border-radius:2px;background:linear-gradient(#dbe6f2,#c6d5e6)"></div><svg style="left:1417.1px;top:8.2px" width="9" height="8" viewBox="0 0 9 8"><path d="M1.2 1L7.8 7M7.8 1L1.2 7" stroke="#5a6270" stroke-width="2.6" stroke-linecap="round"/><path d="M1.2 1L7.8 7M7.8 1L1.2 7" stroke="#fff" stroke-width="1.3" stroke-linecap="round"/></svg>
<div class="tb" style="left:481px;top:21.5px;width:955px;height:21px"></div>
<div style="left:483px;top:23px;width:1px;height:15px;background:#a0a0a0"></div><svg style="left:490px;top:25.5px" width="12" height="12" viewBox="0 0 12 12"><rect x="0.5" y="0.5" width="11" height="11" fill="#8a8a00" stroke="#000"/><rect x="2.5" y="1" width="7" height="4.5" fill="#fff"/><rect x="2.5" y="7.5" width="7" height="4" fill="#000"/><rect x="7.5" y="8.5" width="1.5" height="2.5" fill="#ddd"/></svg><svg style="left:508.5px;top:26px" width="10.5" height="10.5" viewBox="0 0 10 10"><path d="M1 0.5L9 9.5M9 0.5L1 9.5" stroke="#f00" stroke-width="1.6" fill="none"/></svg><svg style="left:525px;top:25.5px" width="13" height="12" viewBox="0 0 13 12"><path d="M1 0V11H13" stroke="#555" stroke-width="1" fill="none" stroke-dasharray="1 1"/><path d="M1 3L3.5 7L6 4.5L8 7.5L10.5 4L12.5 5" stroke="#f00" stroke-width="1.2" fill="none"/></svg><svg style="left:543px;top:25px" width="14" height="13" viewBox="0 0 14 13"><path d="M7 1V11M3.5 12H10.5M1.5 3H12.5" stroke="#000" stroke-width="1.3" fill="none"/><path d="M0.3 7.5L2.5 3.2L4.7 7.5zM9.3 7.5L11.5 3.2L13.7 7.5z" fill="#c8c800" stroke="#000" stroke-width="0.7"/><path d="M0 7.5H5a2.5 2 0 0 1-5 0zM9 7.5H14a2.5 2 0 0 1-5 0z" fill="#000"/></svg><div style="left:558.2px;top:22.5px;width:25.5px;height:16.5px;background:#cce4f7;border:1px solid #99c9ef;border-radius:1.5px"></div><svg style="left:561px;top:25px" width="13" height="13" viewBox="0 0 13 13"><path d="M2.2 10V2.2H9M2.5 10H10" stroke="#0000ff" stroke-width="1.5" fill="none"/><path d="M1 11.6L6.2 1.3L11.6 11.6" stroke="#000" stroke-width="1.7" fill="none"/><path d="M1 11.8H11.6" stroke="#000" stroke-width="1.2"/></svg><svg style="left:576px;top:30px" width="5" height="3" viewBox="0 0 5 3"><path d="M0 0H5L2.5 3z" fill="#000"/></svg><svg style="left:587px;top:25.5px" width="13" height="13" viewBox="0 0 13 13"><path d="M1 1L8 10M8 1L1 10" stroke="#a0a0a0" stroke-width="1.5" fill="none"/><path d="M6 12L9 7L12.5 12z" fill="#a0a0a0"/><path d="M0 12H13" stroke="#a0a0a0"/></svg><svg style="left:605px;top:25px" width="13" height="13" viewBox="0 0 13 13"><path d="M0.5 1L4 6V12M7.5 1L4 6" stroke="#a0a0a0" stroke-width="1.5" fill="none"/><path d="M9.5 12V2M6.8 5L9.5 1.5L12.2 5" stroke="#a0a0a0" stroke-width="1.4" fill="none"/></svg>
<div style="left:633.5px;top:23.5px;width:1px;height:15px;background:#a0a0a0"></div>
<div class="t" style="left:641.5px;top:25.3px">Function:</div>
<div style="left:680px;top:23.4px;width:80.5px;height:16px;background:#fff;border:1px solid #dcdcdc;border-bottom-color:#b4b4b4;border-radius:1.5px"></div><div class="t" style="left:682.5px;top:25.45px">Fill w/ Value</div><svg style="left:749.5px;top:29.9px" width="7" height="4" viewBox="0 0 7 4"><path d="M0.5 0.5L3.5 3.5L6.5 0.5" stroke="#555" stroke-width="1" fill="none"/></svg>
<div class="t" style="left:767.5px;top:25.3px">Value:</div>
<div style="left:791.8px;top:23.8px;width:35.6px;height:15.4px;background:#fff;border-bottom:1px solid #8a8a8a"></div>
<div class="t" style="left:795px;top:25.3px">0</div>
<div style="left:830.5px;top:24.6px;width:36.5px;height:14.2px;background:#fdfdfd;border:1px solid #d0d0d0;border-radius:2px"></div>
<div class="t" style="left:833.2px;top:25.6px">Execute</div>
<div style="left:481px;top:41.5px;width:955px;height:493.5px;background:#404040;border-top:2px solid #696969;border-left:2px solid #696969;border-right:1.5px solid #f4f4f4"></div>
<svg style="left:0;top:0" width="1445" height="560" viewBox="0 0 1445 560" font-family="'Liberation Sans',sans-serif" font-size="9.3">
<rect x="483" y="43.5" width="951.5" height="10.6" fill="#f3f3f3"/>
<rect x="483" y="54.1" width="951.5" height="1.5" fill="#dadada"/>
<rect x="483" y="55.6" width="930.8" height="454.4" fill="#dcdadc"/>
<text x="958.5" y="52.6" font-weight="bold" font-size="8.6" letter-spacing="0.45" text-anchor="middle">Main Spark Advance Neutral</text>
<rect x="483" y="55.8" width="33.5" height="9.3" fill="#f5f5f5"/>
<rect x="518.40" y="55.8" width="34.2" height="9.3" fill="url(#hs)"/>
<rect x="554.23" y="55.8" width="34.2" height="9.3" fill="#f5f5f5"/>
<rect x="590.06" y="55.8" width="34.2" height="9.3" fill="#f5f5f5"/>
<rect x="625.89" y="55.8" width="34.2" height="9.3" fill="#f5f5f5"/>
<rect x="661.72" y="55.8" width="34.2" height="9.3" fill="#f5f5f5"/>
<rect x="697.55" y="55.8" width="34.2" height="9.3" fill="#f5f5f5"/>
<rect x="733.38" y="55.8" width="34.2" height="9.3" fill="#f5f5f5"/>
<rect x="769.21" y="55.8" width="34.2" height="9.3" fill="#f5f5f5"/>
<rect x="805.04" y="55.8" width="34.2" height="9.3" fill="#f5f5f5"/>
<rect x="840.87" y="55.8" width="34.2" height="9.3" fill="#f5f5f5"/>
<rect x="876.70" y="55.8" width="34.2" height="9.3" fill="#f5f5f5"/>
<rect x="912.53" y="55.8" width="34.2" height="9.3" fill="#f5f5f5"/>
<rect x="948.36" y="55.8" width="34.2" height="9.3" fill="#f5f5f5"/>
<rect x="984.19" y="55.8" width="34.2" height="9.3" fill="#f5f5f5"/>
<rect x="1020.02" y="55.8" width="34.2" height="9.3" fill="#f5f5f5"/>
<rect x="1055.85" y="55.8" width="34.2" height="9.3" fill="#f5f5f5"/>
<rect x="1091.68" y="55.8" width="34.2" height="9.3" fill="#f5f5f5"/>
<rect x="1127.51" y="55.8" width="34.2" height="9.3" fill="#f5f5f5"/>
<rect x="1163.34" y="55.8" width="34.2" height="9.3" fill="#f5f5f5"/>
<rect x="1199.17" y="55.8" width="34.2" height="9.3" fill="#f5f5f5"/>
<rect x="1235.00" y="55.8" width="34.2" height="9.3" fill="#f5f5f5"/>
<rect x="1270.83" y="55.8" width="34.2" height="9.3" fill="#f5f5f5"/>
<rect x="1306.66" y="55.8" width="34.2" height="9.3" fill="#f5f5f5"/>
<rect x="1342.49" y="55.8" width="34.2" height="9.3" fill="#f5f5f5"/>
<rect x="1378.32" y="55.8" width="34.2" height="9.3" fill="#f5f5f5"/>
<defs><linearGradient id="hs" x1="0" y1="0" x2="0" y2="1"><stop offset="0" stop-color="#d6d6d6"/><stop offset="1" stop-color="#ececec"/></linearGradient></defs>
<g text-anchor="middle" transform="scale(0.89 1)" stroke="#000" stroke-width="0.15">
<text x="601.7" y="64.9">0.00</text>
<text x="641.9" y="64.9">5.10</text>
<text x="682.2" y="64.9">9.80</text>
<text x="722.5" y="64.9">14.12</text>
<text x="762.7" y="64.9">18.43</text>
<text x="803.0" y="64.9">22.75</text>
<text x="843.2" y="64.9">27.06</text>
<text x="883.5" y="64.9">31.37</text>
<text x="923.8" y="64.9">36.08</text>
<text x="964.0" y="64.9">40.39</text>
<text x="1004.3" y="64.9">44.71</text>
<text x="1044.5" y="64.9">49.02</text>
<text x="1084.8" y="64.9">53.33</text>
<text x="1125.0" y="64.9">57.65</text>
<text x="1165.3" y="64.9">62.35</text>
<text x="1205.6" y="64.9">66.67</text>
<text x="1245.8" y="64.9">68.63</text>
<text x="1286.1" y="64.9">70.98</text>
<text x="1326.3" y="64.9">75.29</text>
<text x="1366.6" y="64.9">79.61</text>
<text x="1406.9" y="64.9">84.31</text>
<text x="1447.1" y="64.9">88.63</text>
<text x="1487.4" y="64.9">92.94</text>
<text x="1527.6" y="64.9">97.65</text>
<text x="1567.9" y="64.9">100.00</text>
</g>
<rect x="483" y="67.30" width="33.5" height="9.8" fill="url(#hs)"/>
<rect x="483" y="77.10" width="33.5" height="0.9" fill="#bcbcbc"/>
<rect x="483" y="78.97" width="33.5" height="9.8" fill="#f4f4f4"/>
<rect x="483" y="88.77" width="33.5" height="0.9" fill="#bcbcbc"/>
<rect x="483" y="90.63" width="33.5" height="9.8" fill="#f4f4f4"/>
<rect x="483" y="100.43" width="33.5" height="0.9" fill="#bcbcbc"/>
<rect x="483" y="102.30" width="33.5" height="9.8" fill="#f4f4f4"/>
<rect x="483" y="112.10" width="33.5" height="0.9" fill="#bcbcbc"/>
<rect x="483" y="113.97" width="33.5" height="9.8" fill="#f4f4f4"/>
<rect x="483" y="123.77" width="33.5" height="0.9" fill="#bcbcbc"/>
<rect x="483" y="125.63" width="33.5" height="9.8" fill="#f4f4f4"/>
<rect x="483" y="135.43" width="33.5" height="0.9" fill="#bcbcbc"/>
<rect x="483" y="137.30" width="33.5" height="9.8" fill="#f4f4f4"/>
<rect x="483" y="147.10" width="33.5" height="0.9" fill="#bcbcbc"/>
<rect x="483" y="148.97" width="33.5" height="9.8" fill="#f4f4f4"/>
<rect x="483" y="158.77" width="33.5" height="0.9" fill="#bcbcbc"/>
<rect x="483" y="160.64" width="33.5" height="9.8" fill="#f4f4f4"/>
<rect x="483" y="170.44" width="33.5" height="0.9" fill="#bcbcbc"/>
<rect x="483" y="172.30" width="33.5" height="9.8" fill="#f4f4f4"/>
<rect x="483" y="182.10" width="33.5" height="0.9" fill="#bcbcbc"/>
<rect x="483" y="183.97" width="33.5" height="9.8" fill="#f4f4f4"/>
<rect x="483" y="193.77" width="33.5" height="0.9" fill="#bcbcbc"/>
<rect x="483" y="195.64" width="33.5" height="9.8" fill="#f4f4f4"/>
<rect x="483" y="205.44" width="33.5" height="0.9" fill="#bcbcbc"/>
<rect x="483" y="207.30" width="33.5" height="9.8" fill="#f4f4f4"/>
<rect x="483" y="217.10" width="33.5" height="0.9" fill="#bcbcbc"/>
<rect x="483" y="218.97" width="33.5" height="9.8" fill="#f4f4f4"/>
<rect x="483" y="228.77" width="33.5" height="0.9" fill="#bcbcbc"/>
<rect x="483" y="230.64" width="33.5" height="9.8" fill="#f4f4f4"/>
<rect x="483" y="240.44" width="33.5" height="0.9" fill="#bcbcbc"/>
<rect x="483" y="242.31" width="33.5" height="9.8" fill="#f4f4f4"/>
<rect x="483" y="252.10" width="33.5" height="0.9" fill="#bcbcbc"/>
<rect x="483" y="253.97" width="33.5" height="9.8" fill="#f4f4f4"/>
<rect x="483" y="263.77" width="33.5" height="0.9" fill="#bcbcbc"/>
<rect x="483" y="265.64" width="33.5" height="9.8" fill="#f4f4f4"/>
<rect x="483" y="275.44" width="33.5" height="0.9" fill="#bcbcbc"/>
<rect x="483" y="277.31" width="33.5" height="9.8" fill="#f4f4f4"/>
<rect x="483" y="287.11" width="33.5" height="0.9" fill="#bcbcbc"/>
<rect x="483" y="288.97" width="33.5" height="9.8" fill="#f4f4f4"/>
<rect x="483" y="298.77" width="33.5" height="0.9" fill="#bcbcbc"/>
<rect x="483" y="300.64" width="33.5" height="9.8" fill="#f4f4f4"/>
<rect x="483" y="310.44" width="33.5" height="0.9" fill="#bcbcbc"/>
<rect x="483" y="312.31" width="33.5" height="9.8" fill="#f4f4f4"/>
<rect x="483" y="322.11" width="33.5" height="0.9" fill="#bcbcbc"/>
<rect x="483" y="323.97" width="33.5" height="9.8" fill="#f4f4f4"/>
<rect x="483" y="333.77" width="33.5" height="0.9" fill="#bcbcbc"/>
<rect x="483" y="335.64" width="33.5" height="9.8" fill="#f4f4f4"/>
<rect x="483" y="345.44" width="33.5" height="0.9" fill="#bcbcbc"/>
<rect x="483" y="347.31" width="33.5" height="9.8" fill="#f4f4f4"/>
<rect x="483" y="357.11" width="33.5" height="0.9" fill="#bcbcbc"/>
<rect x="483" y="358.98" width="33.5" height="9.8" fill="#f4f4f4"/>
<rect x="483" y="368.78" width="33.5" height="0.9" fill="#bcbcbc"/>
<rect x="483" y="370.64" width="33.5" height="9.8" fill="#f4f4f4"/>
<rect x="483" y="380.44" width="33.5" height="0.9" fill="#bcbcbc"/>
<rect x="483" y="382.31" width="33.5" height="9.8" fill="#f4f4f4"/>
<rect x="483" y="392.11" width="33.5" height="0.9" fill="#bcbcbc"/>
<rect x="483" y="393.98" width="33.5" height="9.8" fill="#f4f4f4"/>
<rect x="483" y="403.78" width="33.5" height="0.9" fill="#bcbcbc"/>
<rect x="483" y="405.64" width="33.5" height="9.8" fill="#f4f4f4"/>
<rect x="483" y="415.44" width="33.5" height="0.9" fill="#bcbcbc"/>
<rect x="483" y="417.31" width="33.5" height="9.8" fill="#f4f4f4"/>
<rect x="483" y="427.11" width="33.5" height="0.9" fill="#bcbcbc"/>
<rect x="483" y="428.98" width="33.5" height="9.8" fill="#f4f4f4"/>
<rect x="483" y="438.78" width="33.5" height="0.9" fill="#bcbcbc"/>
<rect x="483" y="440.64" width="33.5" height="9.8" fill="#f4f4f4"/>
<rect x="483" y="450.44" width="33.5" height="0.9" fill="#bcbcbc"/>
<rect x="483" y="452.31" width="33.5" height="9.8" fill="#f4f4f4"/>
<rect x="483" y="462.11" width="33.5" height="0.9" fill="#bcbcbc"/>
<rect x="483" y="463.98" width="33.5" height="9.8" fill="#f4f4f4"/>
<rect x="483" y="473.78" width="33.5" height="0.9" fill="#bcbcbc"/>
<rect x="483" y="475.64" width="33.5" height="9.8" fill="#f4f4f4"/>
<rect x="483" y="485.44" width="33.5" height="0.9" fill="#bcbcbc"/>
<rect x="483" y="487.31" width="33.5" height="9.8" fill="#f4f4f4"/>
<rect x="483" y="497.11" width="33.5" height="0.9" fill="#bcbcbc"/>
<rect x="483" y="498.98" width="33.5" height="9.8" fill="#f4f4f4"/>
<rect x="483" y="508.78" width="33.5" height="0.9" fill="#bcbcbc"/>
<g text-anchor="end" transform="scale(0.89 1)" stroke="#000" stroke-width="0.15">
<text x="578.2" y="76.30">1000</text>
<text x="578.2" y="87.97">1250</text>
<text x="578.2" y="99.63">1350</text>
<text x="578.2" y="111.30">1450</text>
<text x="578.2" y="122.97">1650</text>
<text x="578.2" y="134.63">1850</text>
<text x="578.2" y="146.30">2100</text>
<text x="578.2" y="157.97">2400</text>
<text x="578.2" y="169.64">2600</text>
<text x="578.2" y="181.30">2800</text>
<text x="578.2" y="192.97">3100</text>
<text x="578.2" y="204.64">3300</text>
<text x="578.2" y="216.30">3800</text>
<text x="578.2" y="227.97">4100</text>
<text x="578.2" y="239.64">4400</text>
<text x="578.2" y="251.31">4800</text>
<text x="578.2" y="262.97">5200</text>
<text x="578.2" y="274.64">5600</text>
<text x="578.2" y="286.31">6000</text>
<text x="578.2" y="297.97">6400</text>
<text x="578.2" y="309.64">6800</text>
<text x="578.2" y="321.31">7200</text>
<text x="578.2" y="332.97">7600</text>
<text x="578.2" y="344.64">8000</text>
<text x="578.2" y="356.31">8500</text>
<text x="578.2" y="367.98">9000</text>
<text x="578.2" y="379.64">9500</text>
<text x="578.2" y="391.31">10000</text>
<text x="578.2" y="402.98">10500</text>
<text x="578.2" y="414.64">11000</text>
<text x="578.2" y="426.31">11500</text>
<text x="578.2" y="437.98">12000</text>
<text x="578.2" y="449.64">12500</text>
<text x="578.2" y="461.31">13000</text>
<text x="578.2" y="472.98">13500</text>
<text x="578.2" y="484.64">14000</text>
<text x="578.2" y="496.31">14500</text>
<text x="578.2" y="507.98">15000</text>
</g>
<rect x="518.40" y="67.60" width="34.8" height="11.1" fill="#c0c080" stroke="#262626" stroke-width="1"/><rect x="554.53" y="67.60" width="34.2" height="10.7" fill="#c0c080"/><rect x="590.36" y="67.60" width="34.2" height="10.7" fill="#c0c080"/><rect x="626.19" y="67.60" width="34.2" height="10.7" fill="#c0c080"/><rect x="662.02" y="67.60" width="34.2" height="10.7" fill="#c0c080"/><rect x="697.85" y="67.60" width="34.2" height="10.7" fill="#c0c080"/><rect x="733.68" y="67.60" width="34.2" height="10.7" fill="#c0c080"/><rect x="769.51" y="67.60" width="34.2" height="10.7" fill="#c0c080"/><rect x="805.34" y="67.60" width="34.2" height="10.7" fill="#c0c080"/><rect x="841.17" y="67.60" width="34.2" height="10.7" fill="#c0c080"/><rect x="877.00" y="67.60" width="34.2" height="10.7" fill="#c0c080"/><rect x="912.83" y="67.60" width="34.2" height="10.7" fill="#c0c080"/><rect x="948.66" y="67.60" width="34.2" height="10.7" fill="#c0c080"/><rect x="984.49" y="67.60" width="34.2" height="10.7" fill="#c0c080"/><rect x="1020.32" y="67.60" width="34.2" height="10.7" fill="#c0c080"/><rect x="1056.15" y="67.60" width="34.2" height="10.7" fill="#c0c080"/><rect x="1091.98" y="67.60" width="34.2" height="10.7" fill="#c0c080"/><rect x="1127.81" y="67.60" width="34.2" height="10.7" fill="#c0c080"/><rect x="1163.64" y="67.60" width="34.2" height="10.7" fill="#bfc080"/><rect x="1199.47" y="67.60" width="34.2" height="10.7" fill="#bec180"/><rect x="1235.30" y="67.60" width="34.2" height="10.7" fill="#bcc380"/><rect x="1271.13" y="67.60" width="34.2" height="10.7" fill="#bac580"/><rect x="1306.96" y="67.60" width="34.2" height="10.7" fill="#b8c780"/><rect x="1342.79" y="67.60" width="34.2" height="10.7" fill="#b5ca80"/><rect x="1378.62" y="67.60" width="34.2" height="10.7" fill="#b2cd80"/>
<rect x="518.70" y="79.27" width="34.2" height="10.7" fill="#81fe80"/><rect x="554.53" y="79.27" width="34.2" height="10.7" fill="#81fe80"/><rect x="590.36" y="79.27" width="34.2" height="10.7" fill="#81fe80"/><rect x="626.19" y="79.27" width="34.2" height="10.7" fill="#81fe80"/><rect x="662.02" y="79.27" width="34.2" height="10.7" fill="#96e980"/><rect x="697.85" y="79.27" width="34.2" height="10.7" fill="#a0df80"/><rect x="733.68" y="79.27" width="34.2" height="10.7" fill="#a0df80"/><rect x="769.51" y="79.27" width="34.2" height="10.7" fill="#a0df80"/><rect x="805.34" y="79.27" width="34.2" height="10.7" fill="#a0df80"/><rect x="841.17" y="79.27" width="34.2" height="10.7" fill="#a0df80"/><rect x="877.00" y="79.27" width="34.2" height="10.7" fill="#a0df80"/><rect x="912.83" y="79.27" width="34.2" height="10.7" fill="#a0df80"/><rect x="948.66" y="79.27" width="34.2" height="10.7" fill="#a0df80"/><rect x="984.49" y="79.27" width="34.2" height="10.7" fill="#a2dd80"/><rect x="1020.32" y="79.27" width="34.2" height="10.7" fill="#a4db80"/><rect x="1056.15" y="79.27" width="34.2" height="10.7" fill="#a5da80"/><rect x="1091.98" y="79.27" width="34.2" height="10.7" fill="#a7d880"/><rect x="1127.81" y="79.27" width="34.2" height="10.7" fill="#a8d780"/><rect x="1163.64" y="79.27" width="34.2" height="10.7" fill="#aad580"/><rect x="1199.47" y="79.27" width="34.2" height="10.7" fill="#add280"/><rect x="1235.30" y="79.27" width="34.2" height="10.7" fill="#b2cd80"/><rect x="1271.13" y="79.27" width="34.2" height="10.7" fill="#b2cd80"/><rect x="1306.96" y="79.27" width="34.2" height="10.7" fill="#b2cd80"/><rect x="1342.79" y="79.27" width="34.2" height="10.7" fill="#b2cd80"/><rect x="1378.62" y="79.27" width="34.2" height="10.7" fill="#b2cd80"/>
<rect x="518.70" y="90.93" width="34.2" height="10.7" fill="#81fe80"/><rect x="554.53" y="90.93" width="34.2" height="10.7" fill="#81fe80"/><rect x="590.36" y="90.93" width="34.2" height="10.7" fill="#81fe80"/><rect x="626.19" y="90.93" width="34.2" height="10.7" fill="#81fe80"/><rect x="662.02" y="90.93" width="34.2" height="10.7" fill="#96e980"/><rect x="697.85" y="90.93" width="34.2" height="10.7" fill="#a0df80"/><rect x="733.68" y="90.93" width="34.2" height="10.7" fill="#a0df80"/><rect x="769.51" y="90.93" width="34.2" height="10.7" fill="#a0df80"/><rect x="805.34" y="90.93" width="34.2" height="10.7" fill="#a0df80"/><rect x="841.17" y="90.93" width="34.2" height="10.7" fill="#a0df80"/><rect x="877.00" y="90.93" width="34.2" height="10.7" fill="#a0df80"/><rect x="912.83" y="90.93" width="34.2" height="10.7" fill="#a0df80"/><rect x="948.66" y="90.93" width="34.2" height="10.7" fill="#a0df80"/><rect x="984.49" y="90.93" width="34.2" height="10.7" fill="#a2dd80"/><rect x="1020.32" y="90.93" width="34.2" height="10.7" fill="#a4db80"/><rect x="1056.15" y="90.93" width="34.2" height="10.7" fill="#a5da80"/><rect x="1091.98" y="90.93" width="34.2" height="10.7" fill="#a7d880"/><rect x="1127.81" y="90.93" width="34.2" height="10.7" fill="#a8d780"/><rect x="1163.64" y="90.93" width="34.2" height="10.7" fill="#aad580"/><rect x="1199.47" y="90.93" width="34.2" height="10.7" fill="#add280"/><rect x="1235.30" y="90.93" width="34.2" height="10.7" fill="#b2cd80"/><rect x="1271.13" y="90.93" width="34.2" height="10.7" fill="#b2cd80"/><rect x="1306.96" y="90.93" width="34.2" height="10.7" fill="#b2cd80"/><rect x="1342.79" y="90.93" width="34.2" height="10.7" fill="#b2cd80"/><rect x="1378.62" y="90.93" width="34.2" height="10.7" fill="#b2cd80"/>
<rect x="518.70" y="102.60" width="34.2" height="10.7" fill="#81fe80"/><rect x="554.53" y="102.60" width="34.2" height="10.7" fill="#81fe80"/><rect x="590.36" y="102.60" width="34.2" height="10.7" fill="#81fe80"/><rect x="626.19" y="102.60" width="34.2" height="10.7" fill="#81fe80"/><rect x="662.02" y="102.60" width="34.2" height="10.7" fill="#96e980"/><rect x="697.85" y="102.60" width="34.2" height="10.7" fill="#a0df80"/><rect x="733.68" y="102.60" width="34.2" height="10.7" fill="#a0df80"/><rect x="769.51" y="102.60" width="34.2" height="10.7" fill="#a0df80"/><rect x="805.34" y="102.60" width="34.2" height="10.7" fill="#a0df80"/><rect x="841.17" y="102.60" width="34.2" height="10.7" fill="#a0df80"/><rect x="877.00" y="102.60" width="34.2" height="10.7" fill="#a0df80"/><rect x="912.83" y="102.60" width="34.2" height="10.7" fill="#a0df80"/><rect x="948.66" y="102.60" width="34.2" height="10.7" fill="#a0df80"/><rect x="984.49" y="102.60" width="34.2" height="10.7" fill="#a2dd80"/><rect x="1020.32" y="102.60" width="34.2" height="10.7" fill="#a4db80"/><rect x="1056.15" y="102.60" width="34.2" height="10.7" fill="#a5da80"/><rect x="1091.98" y="102.60" width="34.2" height="10.7" fill="#a7d880"/><rect x="1127.81" y="102.60" width="34.2" height="10.7" fill="#a8d780"/><rect x="1163.64" y="102.60" width="34.2" height="10.7" fill="#aad580"/><rect x="1199.47" y="102.60" width="34.2" height="10.7" fill="#add280"/><rect x="1235.30" y="102.60" width="34.2" height="10.7" fill="#b2cd80"/><rect x="1271.13" y="102.60" width="34.2" height="10.7" fill="#b2cd80"/><rect x="1306.96" y="102.60" width="34.2" height="10.7" fill="#b2cd80"/><rect x="1342.79" y="102.60" width="34.2" height="10.7" fill="#b2cd80"/><rect x="1378.62" y="102.60" width="34.2" height="10.7" fill="#b2cd80"/>
<rect x="518.70" y="114.27" width="34.2" height="10.7" fill="#81fe80"/><rect x="554.53" y="114.27" width="34.2" height="10.7" fill="#81fe80"/><rect x="590.36" y="114.27" width="34.2" height="10.7" fill="#81fe80"/><rect x="626.19" y="114.27" width="34.2" height="10.7" fill="#81fe80"/><rect x="662.02" y="114.27" width="34.2" height="10.7" fill="#96e980"/><rect x="697.85" y="114.27" width="34.2" height="10.7" fill="#a0df80"/><rect x="733.68" y="114.27" width="34.2" height="10.7" fill="#a0df80"/><rect x="769.51" y="114.27" width="34.2" height="10.7" fill="#a0df80"/><rect x="805.34" y="114.27" width="34.2" height="10.7" fill="#a0df80"/><rect x="841.17" y="114.27" width="34.2" height="10.7" fill="#a0df80"/><rect x="877.00" y="114.27" width="34.2" height="10.7" fill="#a0df80"/><rect x="912.83" y="114.27" width="34.2" height="10.7" fill="#a0df80"/><rect x="948.66" y="114.27" width="34.2" height="10.7" fill="#a0df80"/><rect x="984.49" y="114.27" width="34.2" height="10.7" fill="#a2dd80"/><rect x="1020.32" y="114.27" width="34.2" height="10.7" fill="#a4db80"/><rect x="1056.15" y="114.27" width="34.2" height="10.7" fill="#a5da80"/><rect x="1091.98" y="114.27" width="34.2" height="10.7" fill="#a7d880"/><rect x="1127.81" y="114.27" width="34.2" height="10.7" fill="#a8d780"/><rect x="1163.64" y="114.27" width="34.2" height="10.7" fill="#aad580"/><rect x="1199.47" y="114.27" width="34.2" height="10.7" fill="#add280"/><rect x="1235.30" y="114.27" width="34.2" height="10.7" fill="#b2cd80"/><rect x="1271.13" y="114.27" width="34.2" height="10.7" fill="#b2cd80"/><rect x="1306.96" y="114.27" width="34.2" height="10.7" fill="#b2cd80"/><rect x="1342.79" y="114.27" width="34.2" height="10.7" fill="#b2cd80"/><rect x="1378.62" y="114.27" width="34.2" height="10.7" fill="#b2cd80"/>
<rect x="518.70" y="125.93" width="34.2" height="10.7" fill="#81fe80"/><rect x="554.53" y="125.93" width="34.2" height="10.7" fill="#81fe80"/><rect x="590.36" y="125.93" width="34.2" height="10.7" fill="#81fe80"/><rect x="626.19" y="125.93" width="34.2" height="10.7" fill="#81fe80"/><rect x="662.02" y="125.93" width="34.2" height="10.7" fill="#96e980"/><rect x="697.85" y="125.93" width="34.2" height="10.7" fill="#a0df80"/><rect x="733.68" y="125.93" width="34.2" height="10.7" fill="#a0df80"/><rect x="769.51" y="125.93" width="34.2" height="10.7" fill="#a0df80"/><rect x="805.34" y="125.93" width="34.2" height="10.7" fill="#a0df80"/><rect x="841.17" y="125.93" width="34.2" height="10.7" fill="#a0df80"/><rect x="877.00" y="125.93" width="34.2" height="10.7" fill="#a0df80"/><rect x="912.83" y="125.93" width="34.2" height="10.7" fill="#a0df80"/><rect x="948.66" y="125.93" width="34.2" height="10.7" fill="#a0df80"/><rect x="984.49" y="125.93" width="34.2" height="10.7" fill="#a2dd80"/><rect x="1020.32" y="125.93" width="34.2" height="10.7" fill="#a4db80"/><rect x="1056.15" y="125.93" width="34.2" height="10.7" fill="#a5da80"/><rect x="1091.98" y="125.93" width="34.2" height="10.7" fill="#a7d880"/><rect x="1127.81" y="125.93" width="34.2" height="10.7" fill="#a8d780"/><rect x="1163.64" y="125.93" width="34.2" height="10.7" fill="#aad580"/><rect x="1199.47" y="125.93" width="34.2" height="10.7" fill="#add280"/><rect x="1235.30" y="125.93" width="34.2" height="10.7" fill="#b2cd80"/><rect x="1271.13" y="125.93" width="34.2" height="10.7" fill="#b2cd80"/><rect x="1306.96" y="125.93" width="34.2" height="10.7" fill="#b2cd80"/><rect x="1342.79" y="125.93" width="34.2" height="10.7" fill="#b2cd80"/><rect x="1378.62" y="125.93" width="34.2" height="10.7" fill="#b2cd80"/>
<rect x="518.70" y="137.60" width="34.2" height="10.7" fill="#81fe80"/><rect x="554.53" y="137.60" width="34.2" height="10.7" fill="#81fe80"/><rect x="590.36" y="137.60" width="34.2" height="10.7" fill="#81fe80"/><rect x="626.19" y="137.60" width="34.2" height="10.7" fill="#81fe80"/><rect x="662.02" y="137.60" width="34.2" height="10.7" fill="#96e980"/><rect x="697.85" y="137.60" width="34.2" height="10.7" fill="#a0df80"/><rect x="733.68" y="137.60" width="34.2" height="10.7" fill="#a0df80"/><rect x="769.51" y="137.60" width="34.2" height="10.7" fill="#a0df80"/><rect x="805.34" y="137.60" width="34.2" height="10.7" fill="#a0df80"/><rect x="841.17" y="137.60" width="34.2" height="10.7" fill="#a0df80"/><rect x="877.00" y="137.60" width="34.2" height="10.7" fill="#a0df80"/><rect x="912.83" y="137.60" width="34.2" height="10.7" fill="#a0df80"/><rect x="948.66" y="137.60" width="34.2" height="10.7" fill="#a0df80"/><rect x="984.49" y="137.60" width="34.2" height="10.7" fill="#a2dd80"/><rect x="1020.32" y="137.60" width="34.2" height="10.7" fill="#a4db80"/><rect x="1056.15" y="137.60" width="34.2" height="10.7" fill="#a5da80"/><rect x="1091.98" y="137.60" width="34.2" height="10.7" fill="#a6d980"/><rect x="1127.81" y="137.60" width="34.2" height="10.7" fill="#a7d880"/><rect x="1163.64" y="137.60" width="34.2" height="10.7" fill="#acd380"/><rect x="1199.47" y="137.60" width="34.2" height="10.7" fill="#b1ce80"/><rect x="1235.30" y="137.60" width="34.2" height="10.7" fill="#bac580"/><rect x="1271.13" y="137.60" width="34.2" height="10.7" fill="#bec180"/><rect x="1306.96" y="137.60" width="34.2" height="10.7" fill="#c0c080"/><rect x="1342.79" y="137.60" width="34.2" height="10.7" fill="#bec180"/><rect x="1378.62" y="137.60" width="34.2" height="10.7" fill="#bdc280"/>
<rect x="518.70" y="149.27" width="34.2" height="10.7" fill="#83fc80"/><rect x="554.53" y="149.27" width="34.2" height="10.7" fill="#83fc80"/><rect x="590.36" y="149.27" width="34.2" height="10.7" fill="#83fc80"/><rect x="626.19" y="149.27" width="34.2" height="10.7" fill="#83fc80"/><rect x="662.02" y="149.27" width="34.2" height="10.7" fill="#96e980"/><rect x="697.85" y="149.27" width="34.2" height="10.7" fill="#a4db80"/><rect x="733.68" y="149.27" width="34.2" height="10.7" fill="#a9d680"/><rect x="769.51" y="149.27" width="34.2" height="10.7" fill="#acd380"/><rect x="805.34" y="149.27" width="34.2" height="10.7" fill="#add280"/><rect x="841.17" y="149.27" width="34.2" height="10.7" fill="#afd080"/><rect x="877.00" y="149.27" width="34.2" height="10.7" fill="#b0cf80"/><rect x="912.83" y="149.27" width="34.2" height="10.7" fill="#b1ce80"/><rect x="948.66" y="149.27" width="34.2" height="10.7" fill="#b2cd80"/><rect x="984.49" y="149.27" width="34.2" height="10.7" fill="#b4cb80"/><rect x="1020.32" y="149.27" width="34.2" height="10.7" fill="#b6c980"/><rect x="1056.15" y="149.27" width="34.2" height="10.7" fill="#b8c780"/><rect x="1091.98" y="149.27" width="34.2" height="10.7" fill="#b9c680"/><rect x="1127.81" y="149.27" width="34.2" height="10.7" fill="#bac580"/><rect x="1163.64" y="149.27" width="34.2" height="10.7" fill="#bcc380"/><rect x="1199.47" y="149.27" width="34.2" height="10.7" fill="#bdc280"/><rect x="1235.30" y="149.27" width="34.2" height="10.7" fill="#c0bf80"/><rect x="1271.13" y="149.27" width="34.2" height="10.7" fill="#c6b980"/><rect x="1306.96" y="149.27" width="34.2" height="10.7" fill="#cab580"/><rect x="1342.79" y="149.27" width="34.2" height="10.7" fill="#c9b680"/><rect x="1378.62" y="149.27" width="34.2" height="10.7" fill="#c8b780"/>
<rect x="518.70" y="160.94" width="34.2" height="10.7" fill="#85fa80"/><rect x="554.53" y="160.94" width="34.2" height="10.7" fill="#85fa80"/><rect x="590.36" y="160.94" width="34.2" height="10.7" fill="#85fa80"/><rect x="626.19" y="160.94" width="34.2" height="10.7" fill="#85fa80"/><rect x="662.02" y="160.94" width="34.2" height="10.7" fill="#98e780"/><rect x="697.85" y="160.94" width="34.2" height="10.7" fill="#a7d880"/><rect x="733.68" y="160.94" width="34.2" height="10.7" fill="#afd080"/><rect x="769.51" y="160.94" width="34.2" height="10.7" fill="#b5ca80"/><rect x="805.34" y="160.94" width="34.2" height="10.7" fill="#b8c780"/><rect x="841.17" y="160.94" width="34.2" height="10.7" fill="#bac580"/><rect x="877.00" y="160.94" width="34.2" height="10.7" fill="#bac580"/><rect x="912.83" y="160.94" width="34.2" height="10.7" fill="#bac580"/><rect x="948.66" y="160.94" width="34.2" height="10.7" fill="#bac580"/><rect x="984.49" y="160.94" width="34.2" height="10.7" fill="#bac580"/><rect x="1020.32" y="160.94" width="34.2" height="10.7" fill="#bac580"/><rect x="1056.15" y="160.94" width="34.2" height="10.7" fill="#bac580"/><rect x="1091.98" y="160.94" width="34.2" height="10.7" fill="#bac580"/><rect x="1127.81" y="160.94" width="34.2" height="10.7" fill="#bac580"/><rect x="1163.64" y="160.94" width="34.2" height="10.7" fill="#bec180"/><rect x="1199.47" y="160.94" width="34.2" height="10.7" fill="#c1be80"/><rect x="1235.30" y="160.94" width="34.2" height="10.7" fill="#cab580"/><rect x="1271.13" y="160.94" width="34.2" height="10.7" fill="#ccb380"/><rect x="1306.96" y="160.94" width="34.2" height="10.7" fill="#cdb280"/><rect x="1342.79" y="160.94" width="34.2" height="10.7" fill="#cdb280"/><rect x="1378.62" y="160.94" width="34.2" height="10.7" fill="#cdb280"/>
<rect x="518.70" y="172.60" width="34.2" height="10.7" fill="#87f880"/><rect x="554.53" y="172.60" width="34.2" height="10.7" fill="#87f880"/><rect x="590.36" y="172.60" width="34.2" height="10.7" fill="#87f880"/><rect x="626.19" y="172.60" width="34.2" height="10.7" fill="#87f880"/><rect x="662.02" y="172.60" width="34.2" height="10.7" fill="#9be480"/><rect x="697.85" y="172.60" width="34.2" height="10.7" fill="#add280"/><rect x="733.68" y="172.60" width="34.2" height="10.7" fill="#b5ca80"/><rect x="769.51" y="172.60" width="34.2" height="10.7" fill="#bbc480"/><rect x="805.34" y="172.60" width="34.2" height="10.7" fill="#bec180"/><rect x="841.17" y="172.60" width="34.2" height="10.7" fill="#bfc080"/><rect x="877.00" y="172.60" width="34.2" height="10.7" fill="#bfc080"/><rect x="912.83" y="172.60" width="34.2" height="10.7" fill="#bfc080"/><rect x="948.66" y="172.60" width="34.2" height="10.7" fill="#bfc080"/><rect x="984.49" y="172.60" width="34.2" height="10.7" fill="#bec180"/><rect x="1020.32" y="172.60" width="34.2" height="10.7" fill="#bdc280"/><rect x="1056.15" y="172.60" width="34.2" height="10.7" fill="#bbc480"/><rect x="1091.98" y="172.60" width="34.2" height="10.7" fill="#b9c680"/><rect x="1127.81" y="172.60" width="34.2" height="10.7" fill="#b7c880"/><rect x="1163.64" y="172.60" width="34.2" height="10.7" fill="#bbc480"/><rect x="1199.47" y="172.60" width="34.2" height="10.7" fill="#bfc080"/><rect x="1235.30" y="172.60" width="34.2" height="10.7" fill="#c7b880"/><rect x="1271.13" y="172.60" width="34.2" height="10.7" fill="#cab580"/><rect x="1306.96" y="172.60" width="34.2" height="10.7" fill="#cdb280"/><rect x="1342.79" y="172.60" width="34.2" height="10.7" fill="#cfb080"/><rect x="1378.62" y="172.60" width="34.2" height="10.7" fill="#d0af80"/>
<rect x="518.70" y="184.27" width="34.2" height="10.7" fill="#8cf380"/><rect x="554.53" y="184.27" width="34.2" height="10.7" fill="#8cf380"/><rect x="590.36" y="184.27" width="34.2" height="10.7" fill="#8cf380"/><rect x="626.19" y="184.27" width="34.2" height="10.7" fill="#8cf380"/><rect x="662.02" y="184.27" width="34.2" height="10.7" fill="#a0df80"/><rect x="697.85" y="184.27" width="34.2" height="10.7" fill="#b7c880"/><rect x="733.68" y="184.27" width="34.2" height="10.7" fill="#bec180"/><rect x="769.51" y="184.27" width="34.2" height="10.7" fill="#c0bf80"/><rect x="805.34" y="184.27" width="34.2" height="10.7" fill="#c1be80"/><rect x="841.17" y="184.27" width="34.2" height="10.7" fill="#c2bd80"/><rect x="877.00" y="184.27" width="34.2" height="10.7" fill="#c2bd80"/><rect x="912.83" y="184.27" width="34.2" height="10.7" fill="#c2bd80"/><rect x="948.66" y="184.27" width="34.2" height="10.7" fill="#c2bd80"/><rect x="984.49" y="184.27" width="34.2" height="10.7" fill="#c0bf80"/><rect x="1020.32" y="184.27" width="34.2" height="10.7" fill="#bdc280"/><rect x="1056.15" y="184.27" width="34.2" height="10.7" fill="#b9c680"/><rect x="1091.98" y="184.27" width="34.2" height="10.7" fill="#b5ca80"/><rect x="1127.81" y="184.27" width="34.2" height="10.7" fill="#b2cd80"/><rect x="1163.64" y="184.27" width="34.2" height="10.7" fill="#b6c980"/><rect x="1199.47" y="184.27" width="34.2" height="10.7" fill="#bac580"/><rect x="1235.30" y="184.27" width="34.2" height="10.7" fill="#c2bd80"/><rect x="1271.13" y="184.27" width="34.2" height="10.7" fill="#c4bb80"/><rect x="1306.96" y="184.27" width="34.2" height="10.7" fill="#c5ba80"/><rect x="1342.79" y="184.27" width="34.2" height="10.7" fill="#c5ba80"/><rect x="1378.62" y="184.27" width="34.2" height="10.7" fill="#c5ba80"/>
<rect x="518.70" y="195.94" width="34.2" height="10.7" fill="#91ee80"/><rect x="554.53" y="195.94" width="34.2" height="10.7" fill="#91ee80"/><rect x="590.36" y="195.94" width="34.2" height="10.7" fill="#91ee80"/><rect x="626.19" y="195.94" width="34.2" height="10.7" fill="#91ee80"/><rect x="662.02" y="195.94" width="34.2" height="10.7" fill="#a7d880"/><rect x="697.85" y="195.94" width="34.2" height="10.7" fill="#bcc380"/><rect x="733.68" y="195.94" width="34.2" height="10.7" fill="#c0bf80"/><rect x="769.51" y="195.94" width="34.2" height="10.7" fill="#c2bd80"/><rect x="805.34" y="195.94" width="34.2" height="10.7" fill="#c3bc80"/><rect x="841.17" y="195.94" width="34.2" height="10.7" fill="#c4bb80"/><rect x="877.00" y="195.94" width="34.2" height="10.7" fill="#c4bb80"/><rect x="912.83" y="195.94" width="34.2" height="10.7" fill="#c4bb80"/><rect x="948.66" y="195.94" width="34.2" height="10.7" fill="#c4bb80"/><rect x="984.49" y="195.94" width="34.2" height="10.7" fill="#c2bd80"/><rect x="1020.32" y="195.94" width="34.2" height="10.7" fill="#c0c080"/><rect x="1056.15" y="195.94" width="34.2" height="10.7" fill="#bcc380"/><rect x="1091.98" y="195.94" width="34.2" height="10.7" fill="#b7c880"/><rect x="1127.81" y="195.94" width="34.2" height="10.7" fill="#b2cd80"/><rect x="1163.64" y="195.94" width="34.2" height="10.7" fill="#b4cb80"/><rect x="1199.47" y="195.94" width="34.2" height="10.7" fill="#b6c980"/><rect x="1235.30" y="195.94" width="34.2" height="10.7" fill="#bdc280"/><rect x="1271.13" y="195.94" width="34.2" height="10.7" fill="#c2bd80"/><rect x="1306.96" y="195.94" width="34.2" height="10.7" fill="#c8b780"/><rect x="1342.79" y="195.94" width="34.2" height="10.7" fill="#c8b780"/><rect x="1378.62" y="195.94" width="34.2" height="10.7" fill="#c8b780"/>
<rect x="518.70" y="207.60" width="34.2" height="10.7" fill="#a7d880"/><rect x="554.53" y="207.60" width="34.2" height="10.7" fill="#a7d880"/><rect x="590.36" y="207.60" width="34.2" height="10.7" fill="#a7d880"/><rect x="626.19" y="207.60" width="34.2" height="10.7" fill="#a7d880"/><rect x="662.02" y="207.60" width="34.2" height="10.7" fill="#bdc280"/><rect x="697.85" y="207.60" width="34.2" height="10.7" fill="#c2bd80"/><rect x="733.68" y="207.60" width="34.2" height="10.7" fill="#c6b980"/><rect x="769.51" y="207.60" width="34.2" height="10.7" fill="#c8b780"/><rect x="805.34" y="207.60" width="34.2" height="10.7" fill="#c9b680"/><rect x="841.17" y="207.60" width="34.2" height="10.7" fill="#c9b680"/><rect x="877.00" y="207.60" width="34.2" height="10.7" fill="#c9b680"/><rect x="912.83" y="207.60" width="34.2" height="10.7" fill="#c9b680"/><rect x="948.66" y="207.60" width="34.2" height="10.7" fill="#c9b680"/><rect x="984.49" y="207.60" width="34.2" height="10.7" fill="#c8b780"/><rect x="1020.32" y="207.60" width="34.2" height="10.7" fill="#c6b980"/><rect x="1056.15" y="207.60" width="34.2" height="10.7" fill="#c3bc80"/><rect x="1091.98" y="207.60" width="34.2" height="10.7" fill="#c0c080"/><rect x="1127.81" y="207.60" width="34.2" height="10.7" fill="#bac580"/><rect x="1163.64" y="207.60" width="34.2" height="10.7" fill="#c0c080"/><rect x="1199.47" y="207.60" width="34.2" height="10.7" fill="#c4bb80"/><rect x="1235.30" y="207.60" width="34.2" height="10.7" fill="#cfb080"/><rect x="1271.13" y="207.60" width="34.2" height="10.7" fill="#d0af80"/><rect x="1306.96" y="207.60" width="34.2" height="10.7" fill="#d0af80"/><rect x="1342.79" y="207.60" width="34.2" height="10.7" fill="#d1ae80"/><rect x="1378.62" y="207.60" width="34.2" height="10.7" fill="#d1ae80"/>
<rect x="518.70" y="219.27" width="34.2" height="10.7" fill="#b7c880"/><rect x="554.53" y="219.27" width="34.2" height="10.7" fill="#b7c880"/><rect x="590.36" y="219.27" width="34.2" height="10.7" fill="#b7c880"/><rect x="626.19" y="219.27" width="34.2" height="10.7" fill="#b7c880"/><rect x="662.02" y="219.27" width="34.2" height="10.7" fill="#c4bb80"/><rect x="697.85" y="219.27" width="34.2" height="10.7" fill="#c9b680"/><rect x="733.68" y="219.27" width="34.2" height="10.7" fill="#cbb480"/><rect x="769.51" y="219.27" width="34.2" height="10.7" fill="#ccb380"/><rect x="805.34" y="219.27" width="34.2" height="10.7" fill="#cdb280"/><rect x="841.17" y="219.27" width="34.2" height="10.7" fill="#cdb280"/><rect x="877.00" y="219.27" width="34.2" height="10.7" fill="#cdb280"/><rect x="912.83" y="219.27" width="34.2" height="10.7" fill="#cdb280"/><rect x="948.66" y="219.27" width="34.2" height="10.7" fill="#cdb280"/><rect x="984.49" y="219.27" width="34.2" height="10.7" fill="#ccb380"/><rect x="1020.32" y="219.27" width="34.2" height="10.7" fill="#cab580"/><rect x="1056.15" y="219.27" width="34.2" height="10.7" fill="#c7b880"/><rect x="1091.98" y="219.27" width="34.2" height="10.7" fill="#c3bc80"/><rect x="1127.81" y="219.27" width="34.2" height="10.7" fill="#bec180"/><rect x="1163.64" y="219.27" width="34.2" height="10.7" fill="#c2bd80"/><rect x="1199.47" y="219.27" width="34.2" height="10.7" fill="#c7b880"/><rect x="1235.30" y="219.27" width="34.2" height="10.7" fill="#d0af80"/><rect x="1271.13" y="219.27" width="34.2" height="10.7" fill="#d3ac80"/><rect x="1306.96" y="219.27" width="34.2" height="10.7" fill="#d6a980"/><rect x="1342.79" y="219.27" width="34.2" height="10.7" fill="#d8a780"/><rect x="1378.62" y="219.27" width="34.2" height="10.7" fill="#d9a680"/>
<rect x="518.70" y="230.94" width="34.2" height="10.7" fill="#c7b880"/><rect x="554.53" y="230.94" width="34.2" height="10.7" fill="#c7b880"/><rect x="590.36" y="230.94" width="34.2" height="10.7" fill="#c7b880"/><rect x="626.19" y="230.94" width="34.2" height="10.7" fill="#c7b880"/><rect x="662.02" y="230.94" width="34.2" height="10.7" fill="#cbb480"/><rect x="697.85" y="230.94" width="34.2" height="10.7" fill="#cfb080"/><rect x="733.68" y="230.94" width="34.2" height="10.7" fill="#d1ae80"/><rect x="769.51" y="230.94" width="34.2" height="10.7" fill="#d2ad80"/><rect x="805.34" y="230.94" width="34.2" height="10.7" fill="#d2ad80"/><rect x="841.17" y="230.94" width="34.2" height="10.7" fill="#d2ad80"/><rect x="877.00" y="230.94" width="34.2" height="10.7" fill="#d2ad80"/><rect x="912.83" y="230.94" width="34.2" height="10.7" fill="#d2ad80"/><rect x="948.66" y="230.94" width="34.2" height="10.7" fill="#d2ad80"/><rect x="984.49" y="230.94" width="34.2" height="10.7" fill="#d1ae80"/><rect x="1020.32" y="230.94" width="34.2" height="10.7" fill="#cfb080"/><rect x="1056.15" y="230.94" width="34.2" height="10.7" fill="#ccb380"/><rect x="1091.98" y="230.94" width="34.2" height="10.7" fill="#c8b780"/><rect x="1127.81" y="230.94" width="34.2" height="10.7" fill="#c2bd80"/><rect x="1163.64" y="230.94" width="34.2" height="10.7" fill="#c7b880"/><rect x="1199.47" y="230.94" width="34.2" height="10.7" fill="#ccb380"/><rect x="1235.30" y="230.94" width="34.2" height="10.7" fill="#d4ab80"/><rect x="1271.13" y="230.94" width="34.2" height="10.7" fill="#d8a780"/><rect x="1306.96" y="230.94" width="34.2" height="10.7" fill="#dba480"/><rect x="1342.79" y="230.94" width="34.2" height="10.7" fill="#dfa080"/><rect x="1378.62" y="230.94" width="34.2" height="10.7" fill="#e19e80"/>
<rect x="518.70" y="242.61" width="34.2" height="10.7" fill="#d6a980"/><rect x="554.53" y="242.61" width="34.2" height="10.7" fill="#d6a980"/><rect x="590.36" y="242.61" width="34.2" height="10.7" fill="#d6a980"/><rect x="626.19" y="242.61" width="34.2" height="10.7" fill="#d6a980"/><rect x="662.02" y="242.61" width="34.2" height="10.7" fill="#d9a680"/><rect x="697.85" y="242.61" width="34.2" height="10.7" fill="#daa580"/><rect x="733.68" y="242.61" width="34.2" height="10.7" fill="#daa580"/><rect x="769.51" y="242.61" width="34.2" height="10.7" fill="#daa580"/><rect x="805.34" y="242.61" width="34.2" height="10.7" fill="#daa580"/><rect x="841.17" y="242.61" width="34.2" height="10.7" fill="#daa580"/><rect x="877.00" y="242.61" width="34.2" height="10.7" fill="#daa580"/><rect x="912.83" y="242.61" width="34.2" height="10.7" fill="#daa580"/><rect x="948.66" y="242.61" width="34.2" height="10.7" fill="#daa580"/><rect x="984.49" y="242.61" width="34.2" height="10.7" fill="#d9a680"/><rect x="1020.32" y="242.61" width="34.2" height="10.7" fill="#d6a980"/><rect x="1056.15" y="242.61" width="34.2" height="10.7" fill="#d2ad80"/><rect x="1091.98" y="242.61" width="34.2" height="10.7" fill="#ceb180"/><rect x="1127.81" y="242.61" width="34.2" height="10.7" fill="#c9b680"/><rect x="1163.64" y="242.61" width="34.2" height="10.7" fill="#ccb380"/><rect x="1199.47" y="242.61" width="34.2" height="10.7" fill="#cfb080"/><rect x="1235.30" y="242.61" width="34.2" height="10.7" fill="#d4ab80"/><rect x="1271.13" y="242.61" width="34.2" height="10.7" fill="#d5aa80"/><rect x="1306.96" y="242.61" width="34.2" height="10.7" fill="#d7a880"/><rect x="1342.79" y="242.61" width="34.2" height="10.7" fill="#d9a680"/><rect x="1378.62" y="242.61" width="34.2" height="10.7" fill="#dba480"/>
<rect x="518.70" y="254.27" width="34.2" height="10.7" fill="#e99680"/><rect x="554.53" y="254.27" width="34.2" height="10.7" fill="#e99680"/><rect x="590.36" y="254.27" width="34.2" height="10.7" fill="#e99680"/><rect x="626.19" y="254.27" width="34.2" height="10.7" fill="#e99680"/><rect x="662.02" y="254.27" width="34.2" height="10.7" fill="#ec9380"/><rect x="697.85" y="254.27" width="34.2" height="10.7" fill="#ec9380"/><rect x="733.68" y="254.27" width="34.2" height="10.7" fill="#ec9380"/><rect x="769.51" y="254.27" width="34.2" height="10.7" fill="#ec9380"/><rect x="805.34" y="254.27" width="34.2" height="10.7" fill="#ec9380"/><rect x="841.17" y="254.27" width="34.2" height="10.7" fill="#ec9380"/><rect x="877.00" y="254.27" width="34.2" height="10.7" fill="#eb9480"/><rect x="912.83" y="254.27" width="34.2" height="10.7" fill="#ea9580"/><rect x="948.66" y="254.27" width="34.2" height="10.7" fill="#e99680"/><rect x="984.49" y="254.27" width="34.2" height="10.7" fill="#e59a80"/><rect x="1020.32" y="254.27" width="34.2" height="10.7" fill="#e19e80"/><rect x="1056.15" y="254.27" width="34.2" height="10.7" fill="#dca380"/><rect x="1091.98" y="254.27" width="34.2" height="10.7" fill="#d8a780"/><rect x="1127.81" y="254.27" width="34.2" height="10.7" fill="#d3ac80"/><rect x="1163.64" y="254.27" width="34.2" height="10.7" fill="#d5aa80"/><rect x="1199.47" y="254.27" width="34.2" height="10.7" fill="#d7a880"/><rect x="1235.30" y="254.27" width="34.2" height="10.7" fill="#dba480"/><rect x="1271.13" y="254.27" width="34.2" height="10.7" fill="#e39c80"/><rect x="1306.96" y="254.27" width="34.2" height="10.7" fill="#ea9580"/><rect x="1342.79" y="254.27" width="34.2" height="10.7" fill="#e89780"/><rect x="1378.62" y="254.27" width="34.2" height="10.7" fill="#e69980"/>
<rect x="518.70" y="265.94" width="34.2" height="10.7" fill="#fb8480"/><rect x="554.53" y="265.94" width="34.2" height="10.7" fill="#fb8480"/><rect x="590.36" y="265.94" width="34.2" height="10.7" fill="#fb8480"/><rect x="626.19" y="265.94" width="34.2" height="10.7" fill="#fb8480"/><rect x="662.02" y="265.94" width="34.2" height="10.7" fill="#fd8280"/><rect x="697.85" y="265.94" width="34.2" height="10.7" fill="#fd8280"/><rect x="733.68" y="265.94" width="34.2" height="10.7" fill="#fd8280"/><rect x="769.51" y="265.94" width="34.2" height="10.7" fill="#fd8280"/><rect x="805.34" y="265.94" width="34.2" height="10.7" fill="#fd8280"/><rect x="841.17" y="265.94" width="34.2" height="10.7" fill="#fd8280"/><rect x="877.00" y="265.94" width="34.2" height="10.7" fill="#fd8280"/><rect x="912.83" y="265.94" width="34.2" height="10.7" fill="#fd8280"/><rect x="948.66" y="265.94" width="34.2" height="10.7" fill="#fd8280"/><rect x="984.49" y="265.94" width="34.2" height="10.7" fill="#fb8480"/><rect x="1020.32" y="265.94" width="34.2" height="10.7" fill="#f58a80"/><rect x="1056.15" y="265.94" width="34.2" height="10.7" fill="#ee9180"/><rect x="1091.98" y="265.94" width="34.2" height="10.7" fill="#e79880"/><rect x="1127.81" y="265.94" width="34.2" height="10.7" fill="#dfa080"/><rect x="1163.64" y="265.94" width="34.2" height="10.7" fill="#dfa080"/><rect x="1199.47" y="265.94" width="34.2" height="10.7" fill="#dfa080"/><rect x="1235.30" y="265.94" width="34.2" height="10.7" fill="#dea180"/><rect x="1271.13" y="265.94" width="34.2" height="10.7" fill="#e59a80"/><rect x="1306.96" y="265.94" width="34.2" height="10.7" fill="#ec9380"/><rect x="1342.79" y="265.94" width="34.2" height="10.7" fill="#ec9380"/><rect x="1378.62" y="265.94" width="34.2" height="10.7" fill="#ec9380"/>
<rect x="518.70" y="277.61" width="34.2" height="10.7" fill="#ff8080"/><rect x="554.53" y="277.61" width="34.2" height="10.7" fill="#ff8080"/><rect x="590.36" y="277.61" width="34.2" height="10.7" fill="#ff8080"/><rect x="626.19" y="277.61" width="34.2" height="10.7" fill="#ff8080"/><rect x="662.02" y="277.61" width="34.2" height="10.7" fill="#ff8080"/><rect x="697.85" y="277.61" width="34.2" height="10.7" fill="#ff8080"/><rect x="733.68" y="277.61" width="34.2" height="10.7" fill="#ff8080"/><rect x="769.51" y="277.61" width="34.2" height="10.7" fill="#ff8080"/><rect x="805.34" y="277.61" width="34.2" height="10.7" fill="#ff8080"/><rect x="841.17" y="277.61" width="34.2" height="10.7" fill="#ff8080"/><rect x="877.00" y="277.61" width="34.2" height="10.7" fill="#ff8080"/><rect x="912.83" y="277.61" width="34.2" height="10.7" fill="#ff8080"/><rect x="948.66" y="277.61" width="34.2" height="10.7" fill="#ff8080"/><rect x="984.49" y="277.61" width="34.2" height="10.7" fill="#ff8080"/><rect x="1020.32" y="277.61" width="34.2" height="10.7" fill="#fd8280"/><rect x="1056.15" y="277.61" width="34.2" height="10.7" fill="#f58a80"/><rect x="1091.98" y="277.61" width="34.2" height="10.7" fill="#ed9280"/><rect x="1127.81" y="277.61" width="34.2" height="10.7" fill="#e69980"/><rect x="1163.64" y="277.61" width="34.2" height="10.7" fill="#e49b80"/><rect x="1199.47" y="277.61" width="34.2" height="10.7" fill="#e29d80"/><rect x="1235.30" y="277.61" width="34.2" height="10.7" fill="#dea180"/><rect x="1271.13" y="277.61" width="34.2" height="10.7" fill="#e59a80"/><rect x="1306.96" y="277.61" width="34.2" height="10.7" fill="#eb9480"/><rect x="1342.79" y="277.61" width="34.2" height="10.7" fill="#f18e80"/><rect x="1378.62" y="277.61" width="34.2" height="10.7" fill="#f58a80"/>
<rect x="518.70" y="289.27" width="34.2" height="10.7" fill="#ff8080"/><rect x="554.53" y="289.27" width="34.2" height="10.7" fill="#ff8080"/><rect x="590.36" y="289.27" width="34.2" height="10.7" fill="#ff8080"/><rect x="626.19" y="289.27" width="34.2" height="10.7" fill="#ff8080"/><rect x="662.02" y="289.27" width="34.2" height="10.7" fill="#ff8080"/><rect x="697.85" y="289.27" width="34.2" height="10.7" fill="#ff8080"/><rect x="733.68" y="289.27" width="34.2" height="10.7" fill="#ff8080"/><rect x="769.51" y="289.27" width="34.2" height="10.7" fill="#ff8080"/><rect x="805.34" y="289.27" width="34.2" height="10.7" fill="#ff8080"/><rect x="841.17" y="289.27" width="34.2" height="10.7" fill="#ff8080"/><rect x="877.00" y="289.27" width="34.2" height="10.7" fill="#ff8080"/><rect x="912.83" y="289.27" width="34.2" height="10.7" fill="#ff8080"/><rect x="948.66" y="289.27" width="34.2" height="10.7" fill="#ff8080"/><rect x="984.49" y="289.27" width="34.2" height="10.7" fill="#ff8080"/><rect x="1020.32" y="289.27" width="34.2" height="10.7" fill="#ff8080"/><rect x="1056.15" y="289.27" width="34.2" height="10.7" fill="#f88780"/><rect x="1091.98" y="289.27" width="34.2" height="10.7" fill="#f18e80"/><rect x="1127.81" y="289.27" width="34.2" height="10.7" fill="#e99680"/><rect x="1163.64" y="289.27" width="34.2" height="10.7" fill="#e69980"/><rect x="1199.47" y="289.27" width="34.2" height="10.7" fill="#e39c80"/><rect x="1235.30" y="289.27" width="34.2" height="10.7" fill="#dea180"/><rect x="1271.13" y="289.27" width="34.2" height="10.7" fill="#e59a80"/><rect x="1306.96" y="289.27" width="34.2" height="10.7" fill="#eb9480"/><rect x="1342.79" y="289.27" width="34.2" height="10.7" fill="#f28d80"/><rect x="1378.62" y="289.27" width="34.2" height="10.7" fill="#f78880"/>
<rect x="518.70" y="300.94" width="34.2" height="10.7" fill="#ff8080"/><rect x="554.53" y="300.94" width="34.2" height="10.7" fill="#ff8080"/><rect x="590.36" y="300.94" width="34.2" height="10.7" fill="#ff8080"/><rect x="626.19" y="300.94" width="34.2" height="10.7" fill="#ff8080"/><rect x="662.02" y="300.94" width="34.2" height="10.7" fill="#ff8080"/><rect x="697.85" y="300.94" width="34.2" height="10.7" fill="#ff8080"/><rect x="733.68" y="300.94" width="34.2" height="10.7" fill="#ff8080"/><rect x="769.51" y="300.94" width="34.2" height="10.7" fill="#ff8080"/><rect x="805.34" y="300.94" width="34.2" height="10.7" fill="#ff8080"/><rect x="841.17" y="300.94" width="34.2" height="10.7" fill="#ff8080"/><rect x="877.00" y="300.94" width="34.2" height="10.7" fill="#ff8080"/><rect x="912.83" y="300.94" width="34.2" height="10.7" fill="#ff8080"/><rect x="948.66" y="300.94" width="34.2" height="10.7" fill="#ff8080"/><rect x="984.49" y="300.94" width="34.2" height="10.7" fill="#ff8080"/><rect x="1020.32" y="300.94" width="34.2" height="10.7" fill="#ff8080"/><rect x="1056.15" y="300.94" width="34.2" height="10.7" fill="#fa8580"/><rect x="1091.98" y="300.94" width="34.2" height="10.7" fill="#f38c80"/><rect x="1127.81" y="300.94" width="34.2" height="10.7" fill="#eb9480"/><rect x="1163.64" y="300.94" width="34.2" height="10.7" fill="#e89780"/><rect x="1199.47" y="300.94" width="34.2" height="10.7" fill="#e59a80"/><rect x="1235.30" y="300.94" width="34.2" height="10.7" fill="#dea180"/><rect x="1271.13" y="300.94" width="34.2" height="10.7" fill="#e59a80"/><rect x="1306.96" y="300.94" width="34.2" height="10.7" fill="#eb9480"/><rect x="1342.79" y="300.94" width="34.2" height="10.7" fill="#f28d80"/><rect x="1378.62" y="300.94" width="34.2" height="10.7" fill="#f78880"/>
<rect x="518.70" y="312.61" width="34.2" height="10.7" fill="#ff8080"/><rect x="554.53" y="312.61" width="34.2" height="10.7" fill="#ff8080"/><rect x="590.36" y="312.61" width="34.2" height="10.7" fill="#ff8080"/><rect x="626.19" y="312.61" width="34.2" height="10.7" fill="#ff8080"/><rect x="662.02" y="312.61" width="34.2" height="10.7" fill="#ff8080"/><rect x="697.85" y="312.61" width="34.2" height="10.7" fill="#ff8080"/><rect x="733.68" y="312.61" width="34.2" height="10.7" fill="#ff8080"/><rect x="769.51" y="312.61" width="34.2" height="10.7" fill="#ff8080"/><rect x="805.34" y="312.61" width="34.2" height="10.7" fill="#ff8080"/><rect x="841.17" y="312.61" width="34.2" height="10.7" fill="#ff8080"/><rect x="877.00" y="312.61" width="34.2" height="10.7" fill="#ff8080"/><rect x="912.83" y="312.61" width="34.2" height="10.7" fill="#ff8080"/><rect x="948.66" y="312.61" width="34.2" height="10.7" fill="#ff8080"/><rect x="984.49" y="312.61" width="34.2" height="10.7" fill="#ff8080"/><rect x="1020.32" y="312.61" width="34.2" height="10.7" fill="#ff8080"/><rect x="1056.15" y="312.61" width="34.2" height="10.7" fill="#fb8480"/><rect x="1091.98" y="312.61" width="34.2" height="10.7" fill="#f58a80"/><rect x="1127.81" y="312.61" width="34.2" height="10.7" fill="#ee9180"/><rect x="1163.64" y="312.61" width="34.2" height="10.7" fill="#e99680"/><rect x="1199.47" y="312.61" width="34.2" height="10.7" fill="#e49b80"/><rect x="1235.30" y="312.61" width="34.2" height="10.7" fill="#daa580"/><rect x="1271.13" y="312.61" width="34.2" height="10.7" fill="#e09f80"/><rect x="1306.96" y="312.61" width="34.2" height="10.7" fill="#e79880"/><rect x="1342.79" y="312.61" width="34.2" height="10.7" fill="#ee9180"/><rect x="1378.62" y="312.61" width="34.2" height="10.7" fill="#f48b80"/>
<rect x="518.70" y="324.27" width="34.2" height="10.7" fill="#ff8080"/><rect x="554.53" y="324.27" width="34.2" height="10.7" fill="#ff8080"/><rect x="590.36" y="324.27" width="34.2" height="10.7" fill="#ff8080"/><rect x="626.19" y="324.27" width="34.2" height="10.7" fill="#ff8080"/><rect x="662.02" y="324.27" width="34.2" height="10.7" fill="#ff8080"/><rect x="697.85" y="324.27" width="34.2" height="10.7" fill="#ff8080"/><rect x="733.68" y="324.27" width="34.2" height="10.7" fill="#ff8080"/><rect x="769.51" y="324.27" width="34.2" height="10.7" fill="#ff8080"/><rect x="805.34" y="324.27" width="34.2" height="10.7" fill="#ff8080"/><rect x="841.17" y="324.27" width="34.2" height="10.7" fill="#ff8080"/><rect x="877.00" y="324.27" width="34.2" height="10.7" fill="#ff8080"/><rect x="912.83" y="324.27" width="34.2" height="10.7" fill="#ff8080"/><rect x="948.66" y="324.27" width="34.2" height="10.7" fill="#ff8080"/><rect x="984.49" y="324.27" width="34.2" height="10.7" fill="#ff8080"/><rect x="1020.32" y="324.27" width="34.2" height="10.7" fill="#ff8080"/><rect x="1056.15" y="324.27" width="34.2" height="10.7" fill="#fd8280"/><rect x="1091.98" y="324.27" width="34.2" height="10.7" fill="#f78880"/><rect x="1127.81" y="324.27" width="34.2" height="10.7" fill="#f18e80"/><rect x="1163.64" y="324.27" width="34.2" height="10.7" fill="#ec9380"/><rect x="1199.47" y="324.27" width="34.2" height="10.7" fill="#e79880"/><rect x="1235.30" y="324.27" width="34.2" height="10.7" fill="#dca380"/><rect x="1271.13" y="324.27" width="34.2" height="10.7" fill="#e19e80"/><rect x="1306.96" y="324.27" width="34.2" height="10.7" fill="#e59a80"/><rect x="1342.79" y="324.27" width="34.2" height="10.7" fill="#e89780"/><rect x="1378.62" y="324.27" width="34.2" height="10.7" fill="#ea9580"/>
<rect x="518.70" y="335.94" width="34.2" height="10.7" fill="#ff8080"/><rect x="554.53" y="335.94" width="34.2" height="10.7" fill="#ff8080"/><rect x="590.36" y="335.94" width="34.2" height="10.7" fill="#ff8080"/><rect x="626.19" y="335.94" width="34.2" height="10.7" fill="#ff8080"/><rect x="662.02" y="335.94" width="34.2" height="10.7" fill="#ff8080"/><rect x="697.85" y="335.94" width="34.2" height="10.7" fill="#ff8080"/><rect x="733.68" y="335.94" width="34.2" height="10.7" fill="#ff8080"/><rect x="769.51" y="335.94" width="34.2" height="10.7" fill="#ff8080"/><rect x="805.34" y="335.94" width="34.2" height="10.7" fill="#ff8080"/><rect x="841.17" y="335.94" width="34.2" height="10.7" fill="#ff8080"/><rect x="877.00" y="335.94" width="34.2" height="10.7" fill="#ff8080"/><rect x="912.83" y="335.94" width="34.2" height="10.7" fill="#ff8080"/><rect x="948.66" y="335.94" width="34.2" height="10.7" fill="#ff8080"/><rect x="984.49" y="335.94" width="34.2" height="10.7" fill="#ff8080"/><rect x="1020.32" y="335.94" width="34.2" height="10.7" fill="#ff8080"/><rect x="1056.15" y="335.94" width="34.2" height="10.7" fill="#fe8180"/><rect x="1091.98" y="335.94" width="34.2" height="10.7" fill="#f98680"/><rect x="1127.81" y="335.94" width="34.2" height="10.7" fill="#f48b80"/><rect x="1163.64" y="335.94" width="34.2" height="10.7" fill="#f18e80"/><rect x="1199.47" y="335.94" width="34.2" height="10.7" fill="#ee9180"/><rect x="1235.30" y="335.94" width="34.2" height="10.7" fill="#e79880"/><rect x="1271.13" y="335.94" width="34.2" height="10.7" fill="#e59a80"/><rect x="1306.96" y="335.94" width="34.2" height="10.7" fill="#e39c80"/><rect x="1342.79" y="335.94" width="34.2" height="10.7" fill="#e59a80"/><rect x="1378.62" y="335.94" width="34.2" height="10.7" fill="#e79880"/>
<rect x="518.70" y="347.61" width="34.2" height="10.7" fill="#ff8080"/><rect x="554.53" y="347.61" width="34.2" height="10.7" fill="#ff8080"/><rect x="590.36" y="347.61" width="34.2" height="10.7" fill="#ff8080"/><rect x="626.19" y="347.61" width="34.2" height="10.7" fill="#ff8080"/><rect x="662.02" y="347.61" width="34.2" height="10.7" fill="#ff8080"/><rect x="697.85" y="347.61" width="34.2" height="10.7" fill="#ff8080"/><rect x="733.68" y="347.61" width="34.2" height="10.7" fill="#ff8080"/><rect x="769.51" y="347.61" width="34.2" height="10.7" fill="#ff8080"/><rect x="805.34" y="347.61" width="34.2" height="10.7" fill="#ff8080"/><rect x="841.17" y="347.61" width="34.2" height="10.7" fill="#ff8080"/><rect x="877.00" y="347.61" width="34.2" height="10.7" fill="#ff8080"/><rect x="912.83" y="347.61" width="34.2" height="10.7" fill="#ff8080"/><rect x="948.66" y="347.61" width="34.2" height="10.7" fill="#ff8080"/><rect x="984.49" y="347.61" width="34.2" height="10.7" fill="#ff8080"/><rect x="1020.32" y="347.61" width="34.2" height="10.7" fill="#ff8080"/><rect x="1056.15" y="347.61" width="34.2" height="10.7" fill="#ff8080"/><rect x="1091.98" y="347.61" width="34.2" height="10.7" fill="#ff8080"/><rect x="1127.81" y="347.61" width="34.2" height="10.7" fill="#fb8480"/><rect x="1163.64" y="347.61" width="34.2" height="10.7" fill="#f68980"/><rect x="1199.47" y="347.61" width="34.2" height="10.7" fill="#f28d80"/><rect x="1235.30" y="347.61" width="34.2" height="10.7" fill="#e99680"/><rect x="1271.13" y="347.61" width="34.2" height="10.7" fill="#e49b80"/><rect x="1306.96" y="347.61" width="34.2" height="10.7" fill="#e09f80"/><rect x="1342.79" y="347.61" width="34.2" height="10.7" fill="#e19e80"/><rect x="1378.62" y="347.61" width="34.2" height="10.7" fill="#e19e80"/>
<rect x="518.70" y="359.28" width="34.2" height="10.7" fill="#ff8080"/><rect x="554.53" y="359.28" width="34.2" height="10.7" fill="#ff8080"/><rect x="590.36" y="359.28" width="34.2" height="10.7" fill="#ff8080"/><rect x="626.19" y="359.28" width="34.2" height="10.7" fill="#ff8080"/><rect x="662.02" y="359.28" width="34.2" height="10.7" fill="#ff8080"/><rect x="697.85" y="359.28" width="34.2" height="10.7" fill="#ff8080"/><rect x="733.68" y="359.28" width="34.2" height="10.7" fill="#ff8080"/><rect x="769.51" y="359.28" width="34.2" height="10.7" fill="#ff8080"/><rect x="805.34" y="359.28" width="34.2" height="10.7" fill="#ff8080"/><rect x="841.17" y="359.28" width="34.2" height="10.7" fill="#ff8080"/><rect x="877.00" y="359.28" width="34.2" height="10.7" fill="#ff8080"/><rect x="912.83" y="359.28" width="34.2" height="10.7" fill="#ff8080"/><rect x="948.66" y="359.28" width="34.2" height="10.7" fill="#ff8080"/><rect x="984.49" y="359.28" width="34.2" height="10.7" fill="#ff8080"/><rect x="1020.32" y="359.28" width="34.2" height="10.7" fill="#ff8080"/><rect x="1056.15" y="359.28" width="34.2" height="10.7" fill="#ff8080"/><rect x="1091.98" y="359.28" width="34.2" height="10.7" fill="#ff8080"/><rect x="1127.81" y="359.28" width="34.2" height="10.7" fill="#ff8080"/><rect x="1163.64" y="359.28" width="34.2" height="10.7" fill="#fb8480"/><rect x="1199.47" y="359.28" width="34.2" height="10.7" fill="#f58a80"/><rect x="1235.30" y="359.28" width="34.2" height="10.7" fill="#e99680"/><rect x="1271.13" y="359.28" width="34.2" height="10.7" fill="#e29d80"/><rect x="1306.96" y="359.28" width="34.2" height="10.7" fill="#dca380"/><rect x="1342.79" y="359.28" width="34.2" height="10.7" fill="#dba480"/><rect x="1378.62" y="359.28" width="34.2" height="10.7" fill="#dba480"/>
<rect x="518.70" y="370.94" width="34.2" height="10.7" fill="#ff8080"/><rect x="554.53" y="370.94" width="34.2" height="10.7" fill="#ff8080"/><rect x="590.36" y="370.94" width="34.2" height="10.7" fill="#ff8080"/><rect x="626.19" y="370.94" width="34.2" height="10.7" fill="#ff8080"/><rect x="662.02" y="370.94" width="34.2" height="10.7" fill="#ff8080"/><rect x="697.85" y="370.94" width="34.2" height="10.7" fill="#ff8080"/><rect x="733.68" y="370.94" width="34.2" height="10.7" fill="#ff8080"/><rect x="769.51" y="370.94" width="34.2" height="10.7" fill="#ff8080"/><rect x="805.34" y="370.94" width="34.2" height="10.7" fill="#ff8080"/><rect x="841.17" y="370.94" width="34.2" height="10.7" fill="#ff8080"/><rect x="877.00" y="370.94" width="34.2" height="10.7" fill="#ff8080"/><rect x="912.83" y="370.94" width="34.2" height="10.7" fill="#ff8080"/><rect x="948.66" y="370.94" width="34.2" height="10.7" fill="#ff8080"/><rect x="984.49" y="370.94" width="34.2" height="10.7" fill="#ff8080"/><rect x="1020.32" y="370.94" width="34.2" height="10.7" fill="#ff8080"/><rect x="1056.15" y="370.94" width="34.2" height="10.7" fill="#ff8080"/><rect x="1091.98" y="370.94" width="34.2" height="10.7" fill="#ff8080"/><rect x="1127.81" y="370.94" width="34.2" height="10.7" fill="#ff8080"/><rect x="1163.64" y="370.94" width="34.2" height="10.7" fill="#ff8080"/><rect x="1199.47" y="370.94" width="34.2" height="10.7" fill="#f88780"/><rect x="1235.30" y="370.94" width="34.2" height="10.7" fill="#eb9480"/><rect x="1271.13" y="370.94" width="34.2" height="10.7" fill="#e49b80"/><rect x="1306.96" y="370.94" width="34.2" height="10.7" fill="#dfa080"/><rect x="1342.79" y="370.94" width="34.2" height="10.7" fill="#dda280"/><rect x="1378.62" y="370.94" width="34.2" height="10.7" fill="#dba480"/>
<rect x="518.70" y="382.61" width="34.2" height="10.7" fill="#ff8080"/><rect x="554.53" y="382.61" width="34.2" height="10.7" fill="#ff8080"/><rect x="590.36" y="382.61" width="34.2" height="10.7" fill="#ff8080"/><rect x="626.19" y="382.61" width="34.2" height="10.7" fill="#ff8080"/><rect x="662.02" y="382.61" width="34.2" height="10.7" fill="#ff8080"/><rect x="697.85" y="382.61" width="34.2" height="10.7" fill="#ff8080"/><rect x="733.68" y="382.61" width="34.2" height="10.7" fill="#ff8080"/><rect x="769.51" y="382.61" width="34.2" height="10.7" fill="#ff8080"/><rect x="805.34" y="382.61" width="34.2" height="10.7" fill="#ff8080"/><rect x="841.17" y="382.61" width="34.2" height="10.7" fill="#ff8080"/><rect x="877.00" y="382.61" width="34.2" height="10.7" fill="#ff8080"/><rect x="912.83" y="382.61" width="34.2" height="10.7" fill="#ff8080"/><rect x="948.66" y="382.61" width="34.2" height="10.7" fill="#ff8080"/><rect x="984.49" y="382.61" width="34.2" height="10.7" fill="#ff8080"/><rect x="1020.32" y="382.61" width="34.2" height="10.7" fill="#ff8080"/><rect x="1056.15" y="382.61" width="34.2" height="10.7" fill="#ff8080"/><rect x="1091.98" y="382.61" width="34.2" height="10.7" fill="#ff8080"/><rect x="1127.81" y="382.61" width="34.2" height="10.7" fill="#ff8080"/><rect x="1163.64" y="382.61" width="34.2" height="10.7" fill="#ff8080"/><rect x="1199.47" y="382.61" width="34.2" height="10.7" fill="#f88780"/><rect x="1235.30" y="382.61" width="34.2" height="10.7" fill="#eb9480"/><rect x="1271.13" y="382.61" width="34.2" height="10.7" fill="#e49b80"/><rect x="1306.96" y="382.61" width="34.2" height="10.7" fill="#dfa080"/><rect x="1342.79" y="382.61" width="34.2" height="10.7" fill="#dda280"/><rect x="1378.62" y="382.61" width="34.2" height="10.7" fill="#dba480"/>
<rect x="518.70" y="394.28" width="34.2" height="10.7" fill="#ff8080"/><rect x="554.53" y="394.28" width="34.2" height="10.7" fill="#ff8080"/><rect x="590.36" y="394.28" width="34.2" height="10.7" fill="#ff8080"/><rect x="626.19" y="394.28" width="34.2" height="10.7" fill="#ff8080"/><rect x="662.02" y="394.28" width="34.2" height="10.7" fill="#ff8080"/><rect x="697.85" y="394.28" width="34.2" height="10.7" fill="#ff8080"/><rect x="733.68" y="394.28" width="34.2" height="10.7" fill="#ff8080"/><rect x="769.51" y="394.28" width="34.2" height="10.7" fill="#ff8080"/><rect x="805.34" y="394.28" width="34.2" height="10.7" fill="#ff8080"/><rect x="841.17" y="394.28" width="34.2" height="10.7" fill="#ff8080"/><rect x="877.00" y="394.28" width="34.2" height="10.7" fill="#ff8080"/><rect x="912.83" y="394.28" width="34.2" height="10.7" fill="#ff8080"/><rect x="948.66" y="394.28" width="34.2" height="10.7" fill="#ff8080"/><rect x="984.49" y="394.28" width="34.2" height="10.7" fill="#ff8080"/><rect x="1020.32" y="394.28" width="34.2" height="10.7" fill="#ff8080"/><rect x="1056.15" y="394.28" width="34.2" height="10.7" fill="#ff8080"/><rect x="1091.98" y="394.28" width="34.2" height="10.7" fill="#ff8080"/><rect x="1127.81" y="394.28" width="34.2" height="10.7" fill="#ff8080"/><rect x="1163.64" y="394.28" width="34.2" height="10.7" fill="#ff8080"/><rect x="1199.47" y="394.28" width="34.2" height="10.7" fill="#f88780"/><rect x="1235.30" y="394.28" width="34.2" height="10.7" fill="#eb9480"/><rect x="1271.13" y="394.28" width="34.2" height="10.7" fill="#e49b80"/><rect x="1306.96" y="394.28" width="34.2" height="10.7" fill="#dfa080"/><rect x="1342.79" y="394.28" width="34.2" height="10.7" fill="#dda280"/><rect x="1378.62" y="394.28" width="34.2" height="10.7" fill="#dba480"/>
<rect x="518.70" y="405.94" width="34.2" height="10.7" fill="#ff8080"/><rect x="554.53" y="405.94" width="34.2" height="10.7" fill="#ff8080"/><rect x="590.36" y="405.94" width="34.2" height="10.7" fill="#ff8080"/><rect x="626.19" y="405.94" width="34.2" height="10.7" fill="#ff8080"/><rect x="662.02" y="405.94" width="34.2" height="10.7" fill="#ff8080"/><rect x="697.85" y="405.94" width="34.2" height="10.7" fill="#ff8080"/><rect x="733.68" y="405.94" width="34.2" height="10.7" fill="#ff8080"/><rect x="769.51" y="405.94" width="34.2" height="10.7" fill="#ff8080"/><rect x="805.34" y="405.94" width="34.2" height="10.7" fill="#ff8080"/><rect x="841.17" y="405.94" width="34.2" height="10.7" fill="#ff8080"/><rect x="877.00" y="405.94" width="34.2" height="10.7" fill="#ff8080"/><rect x="912.83" y="405.94" width="34.2" height="10.7" fill="#ff8080"/><rect x="948.66" y="405.94" width="34.2" height="10.7" fill="#ff8080"/><rect x="984.49" y="405.94" width="34.2" height="10.7" fill="#ff8080"/><rect x="1020.32" y="405.94" width="34.2" height="10.7" fill="#ff8080"/><rect x="1056.15" y="405.94" width="34.2" height="10.7" fill="#ff8080"/><rect x="1091.98" y="405.94" width="34.2" height="10.7" fill="#ff8080"/><rect x="1127.81" y="405.94" width="34.2" height="10.7" fill="#ff8080"/><rect x="1163.64" y="405.94" width="34.2" height="10.7" fill="#ff8080"/><rect x="1199.47" y="405.94" width="34.2" height="10.7" fill="#f88780"/><rect x="1235.30" y="405.94" width="34.2" height="10.7" fill="#eb9480"/><rect x="1271.13" y="405.94" width="34.2" height="10.7" fill="#e49b80"/><rect x="1306.96" y="405.94" width="34.2" height="10.7" fill="#dfa080"/><rect x="1342.79" y="405.94" width="34.2" height="10.7" fill="#dda280"/><rect x="1378.62" y="405.94" width="34.2" height="10.7" fill="#dba480"/>
<rect x="518.70" y="417.61" width="34.2" height="10.7" fill="#ff8080"/><rect x="554.53" y="417.61" width="34.2" height="10.7" fill="#ff8080"/><rect x="590.36" y="417.61" width="34.2" height="10.7" fill="#ff8080"/><rect x="626.19" y="417.61" width="34.2" height="10.7" fill="#ff8080"/><rect x="662.02" y="417.61" width="34.2" height="10.7" fill="#ff8080"/><rect x="697.85" y="417.61" width="34.2" height="10.7" fill="#ff8080"/><rect x="733.68" y="417.61" width="34.2" height="10.7" fill="#ff8080"/><rect x="769.51" y="417.61" width="34.2" height="10.7" fill="#ff8080"/><rect x="805.34" y="417.61" width="34.2" height="10.7" fill="#ff8080"/><rect x="841.17" y="417.61" width="34.2" height="10.7" fill="#ff8080"/><rect x="877.00" y="417.61" width="34.2" height="10.7" fill="#ff8080"/><rect x="912.83" y="417.61" width="34.2" height="10.7" fill="#ff8080"/><rect x="948.66" y="417.61" width="34.2" height="10.7" fill="#ff8080"/><rect x="984.49" y="417.61" width="34.2" height="10.7" fill="#ff8080"/><rect x="1020.32" y="417.61" width="34.2" height="10.7" fill="#ff8080"/><rect x="1056.15" y="417.61" width="34.2" height="10.7" fill="#ff8080"/><rect x="1091.98" y="417.61" width="34.2" height="10.7" fill="#ff8080"/><rect x="1127.81" y="417.61" width="34.2" height="10.7" fill="#ff8080"/><rect x="1163.64" y="417.61" width="34.2" height="10.7" fill="#ff8080"/><rect x="1199.47" y="417.61" width="34.2" height="10.7" fill="#f88780"/><rect x="1235.30" y="417.61" width="34.2" height="10.7" fill="#eb9480"/><rect x="1271.13" y="417.61" width="34.2" height="10.7" fill="#e49b80"/><rect x="1306.96" y="417.61" width="34.2" height="10.7" fill="#dfa080"/><rect x="1342.79" y="417.61" width="34.2" height="10.7" fill="#dda280"/><rect x="1378.62" y="417.61" width="34.2" height="10.7" fill="#dba480"/>
<rect x="518.70" y="429.28" width="34.2" height="10.7" fill="#ff8080"/><rect x="554.53" y="429.28" width="34.2" height="10.7" fill="#ff8080"/><rect x="590.36" y="429.28" width="34.2" height="10.7" fill="#ff8080"/><rect x="626.19" y="429.28" width="34.2" height="10.7" fill="#ff8080"/><rect x="662.02" y="429.28" width="34.2" height="10.7" fill="#ff8080"/><rect x="697.85" y="429.28" width="34.2" height="10.7" fill="#ff8080"/><rect x="733.68" y="429.28" width="34.2" height="10.7" fill="#ff8080"/><rect x="769.51" y="429.28" width="34.2" height="10.7" fill="#ff8080"/><rect x="805.34" y="429.28" width="34.2" height="10.7" fill="#ff8080"/><rect x="841.17" y="429.28" width="34.2" height="10.7" fill="#ff8080"/><rect x="877.00" y="429.28" width="34.2" height="10.7" fill="#ff8080"/><rect x="912.83" y="429.28" width="34.2" height="10.7" fill="#ff8080"/><rect x="948.66" y="429.28" width="34.2" height="10.7" fill="#ff8080"/><rect x="984.49" y="429.28" width="34.2" height="10.7" fill="#ff8080"/><rect x="1020.32" y="429.28" width="34.2" height="10.7" fill="#ff8080"/><rect x="1056.15" y="429.28" width="34.2" height="10.7" fill="#ff8080"/><rect x="1091.98" y="429.28" width="34.2" height="10.7" fill="#ff8080"/><rect x="1127.81" y="429.28" width="34.2" height="10.7" fill="#ff8080"/><rect x="1163.64" y="429.28" width="34.2" height="10.7" fill="#ff8080"/><rect x="1199.47" y="429.28" width="34.2" height="10.7" fill="#f88780"/><rect x="1235.30" y="429.28" width="34.2" height="10.7" fill="#eb9480"/><rect x="1271.13" y="429.28" width="34.2" height="10.7" fill="#e49b80"/><rect x="1306.96" y="429.28" width="34.2" height="10.7" fill="#dfa080"/><rect x="1342.79" y="429.28" width="34.2" height="10.7" fill="#dda280"/><rect x="1378.62" y="429.28" width="34.2" height="10.7" fill="#dba480"/>
<rect x="518.70" y="440.94" width="34.2" height="10.7" fill="#ff8080"/><rect x="554.53" y="440.94" width="34.2" height="10.7" fill="#ff8080"/><rect x="590.36" y="440.94" width="34.2" height="10.7" fill="#ff8080"/><rect x="626.19" y="440.94" width="34.2" height="10.7" fill="#ff8080"/><rect x="662.02" y="440.94" width="34.2" height="10.7" fill="#ff8080"/><rect x="697.85" y="440.94" width="34.2" height="10.7" fill="#ff8080"/><rect x="733.68" y="440.94" width="34.2" height="10.7" fill="#ff8080"/><rect x="769.51" y="440.94" width="34.2" height="10.7" fill="#ff8080"/><rect x="805.34" y="440.94" width="34.2" height="10.7" fill="#ff8080"/><rect x="841.17" y="440.94" width="34.2" height="10.7" fill="#ff8080"/><rect x="877.00" y="440.94" width="34.2" height="10.7" fill="#ff8080"/><rect x="912.83" y="440.94" width="34.2" height="10.7" fill="#ff8080"/><rect x="948.66" y="440.94" width="34.2" height="10.7" fill="#ff8080"/><rect x="984.49" y="440.94" width="34.2" height="10.7" fill="#ff8080"/><rect x="1020.32" y="440.94" width="34.2" height="10.7" fill="#ff8080"/><rect x="1056.15" y="440.94" width="34.2" height="10.7" fill="#ff8080"/><rect x="1091.98" y="440.94" width="34.2" height="10.7" fill="#ff8080"/><rect x="1127.81" y="440.94" width="34.2" height="10.7" fill="#ff8080"/><rect x="1163.64" y="440.94" width="34.2" height="10.7" fill="#ff8080"/><rect x="1199.47" y="440.94" width="34.2" height="10.7" fill="#f88780"/><rect x="1235.30" y="440.94" width="34.2" height="10.7" fill="#eb9480"/><rect x="1271.13" y="440.94" width="34.2" height="10.7" fill="#e49b80"/><rect x="1306.96" y="440.94" width="34.2" height="10.7" fill="#dfa080"/><rect x="1342.79" y="440.94" width="34.2" height="10.7" fill="#dda280"/><rect x="1378.62" y="440.94" width="34.2" height="10.7" fill="#dba480"/>
<rect x="518.70" y="452.61" width="34.2" height="10.7" fill="#ff8080"/><rect x="554.53" y="452.61" width="34.2" height="10.7" fill="#ff8080"/><rect x="590.36" y="452.61" width="34.2" height="10.7" fill="#ff8080"/><rect x="626.19" y="452.61" width="34.2" height="10.7" fill="#ff8080"/><rect x="662.02" y="452.61" width="34.2" height="10.7" fill="#ff8080"/><rect x="697.85" y="452.61" width="34.2" height="10.7" fill="#ff8080"/><rect x="733.68" y="452.61" width="34.2" height="10.7" fill="#ff8080"/><rect x="769.51" y="452.61" width="34.2" height="10.7" fill="#ff8080"/><rect x="805.34" y="452.61" width="34.2" height="10.7" fill="#ff8080"/><rect x="841.17" y="452.61" width="34.2" height="10.7" fill="#ff8080"/><rect x="877.00" y="452.61" width="34.2" height="10.7" fill="#ff8080"/><rect x="912.83" y="452.61" width="34.2" height="10.7" fill="#ff8080"/><rect x="948.66" y="452.61" width="34.2" height="10.7" fill="#ff8080"/><rect x="984.49" y="452.61" width="34.2" height="10.7" fill="#ff8080"/><rect x="1020.32" y="452.61" width="34.2" height="10.7" fill="#ff8080"/><rect x="1056.15" y="452.61" width="34.2" height="10.7" fill="#ff8080"/><rect x="1091.98" y="452.61" width="34.2" height="10.7" fill="#ff8080"/><rect x="1127.81" y="452.61" width="34.2" height="10.7" fill="#ff8080"/><rect x="1163.64" y="452.61" width="34.2" height="10.7" fill="#ff8080"/><rect x="1199.47" y="452.61" width="34.2" height="10.7" fill="#f88780"/><rect x="1235.30" y="452.61" width="34.2" height="10.7" fill="#eb9480"/><rect x="1271.13" y="452.61" width="34.2" height="10.7" fill="#e49b80"/><rect x="1306.96" y="452.61" width="34.2" height="10.7" fill="#dfa080"/><rect x="1342.79" y="452.61" width="34.2" height="10.7" fill="#dba480"/><rect x="1378.62" y="452.61" width="34.2" height="10.7" fill="#d8a780"/>
<rect x="518.70" y="464.28" width="34.2" height="10.7" fill="#ff8080"/><rect x="554.53" y="464.28" width="34.2" height="10.7" fill="#ff8080"/><rect x="590.36" y="464.28" width="34.2" height="10.7" fill="#ff8080"/><rect x="626.19" y="464.28" width="34.2" height="10.7" fill="#ff8080"/><rect x="662.02" y="464.28" width="34.2" height="10.7" fill="#ff8080"/><rect x="697.85" y="464.28" width="34.2" height="10.7" fill="#ff8080"/><rect x="733.68" y="464.28" width="34.2" height="10.7" fill="#ff8080"/><rect x="769.51" y="464.28" width="34.2" height="10.7" fill="#ff8080"/><rect x="805.34" y="464.28" width="34.2" height="10.7" fill="#ff8080"/><rect x="841.17" y="464.28" width="34.2" height="10.7" fill="#ff8080"/><rect x="877.00" y="464.28" width="34.2" height="10.7" fill="#ff8080"/><rect x="912.83" y="464.28" width="34.2" height="10.7" fill="#ff8080"/><rect x="948.66" y="464.28" width="34.2" height="10.7" fill="#ff8080"/><rect x="984.49" y="464.28" width="34.2" height="10.7" fill="#ff8080"/><rect x="1020.32" y="464.28" width="34.2" height="10.7" fill="#ff8080"/><rect x="1056.15" y="464.28" width="34.2" height="10.7" fill="#ff8080"/><rect x="1091.98" y="464.28" width="34.2" height="10.7" fill="#ff8080"/><rect x="1127.81" y="464.28" width="34.2" height="10.7" fill="#ff8080"/><rect x="1163.64" y="464.28" width="34.2" height="10.7" fill="#ff8080"/><rect x="1199.47" y="464.28" width="34.2" height="10.7" fill="#f88780"/><rect x="1235.30" y="464.28" width="34.2" height="10.7" fill="#eb9480"/><rect x="1271.13" y="464.28" width="34.2" height="10.7" fill="#e19e80"/><rect x="1306.96" y="464.28" width="34.2" height="10.7" fill="#d9a680"/><rect x="1342.79" y="464.28" width="34.2" height="10.7" fill="#d5aa80"/><rect x="1378.62" y="464.28" width="34.2" height="10.7" fill="#d3ac80"/>
<rect x="518.70" y="475.94" width="34.2" height="10.7" fill="#ff8080"/><rect x="554.53" y="475.94" width="34.2" height="10.7" fill="#ff8080"/><rect x="590.36" y="475.94" width="34.2" height="10.7" fill="#ff8080"/><rect x="626.19" y="475.94" width="34.2" height="10.7" fill="#ff8080"/><rect x="662.02" y="475.94" width="34.2" height="10.7" fill="#ff8080"/><rect x="697.85" y="475.94" width="34.2" height="10.7" fill="#ff8080"/><rect x="733.68" y="475.94" width="34.2" height="10.7" fill="#ff8080"/><rect x="769.51" y="475.94" width="34.2" height="10.7" fill="#ff8080"/><rect x="805.34" y="475.94" width="34.2" height="10.7" fill="#ff8080"/><rect x="841.17" y="475.94" width="34.2" height="10.7" fill="#ff8080"/><rect x="877.00" y="475.94" width="34.2" height="10.7" fill="#ff8080"/><rect x="912.83" y="475.94" width="34.2" height="10.7" fill="#ff8080"/><rect x="948.66" y="475.94" width="34.2" height="10.7" fill="#ff8080"/><rect x="984.49" y="475.94" width="34.2" height="10.7" fill="#ff8080"/><rect x="1020.32" y="475.94" width="34.2" height="10.7" fill="#ff8080"/><rect x="1056.15" y="475.94" width="34.2" height="10.7" fill="#ff8080"/><rect x="1091.98" y="475.94" width="34.2" height="10.7" fill="#ff8080"/><rect x="1127.81" y="475.94" width="34.2" height="10.7" fill="#ff8080"/><rect x="1163.64" y="475.94" width="34.2" height="10.7" fill="#ff8080"/><rect x="1199.47" y="475.94" width="34.2" height="10.7" fill="#f88780"/><rect x="1235.30" y="475.94" width="34.2" height="10.7" fill="#eb9480"/><rect x="1271.13" y="475.94" width="34.2" height="10.7" fill="#e19e80"/><rect x="1306.96" y="475.94" width="34.2" height="10.7" fill="#d9a680"/><rect x="1342.79" y="475.94" width="34.2" height="10.7" fill="#d4ab80"/><rect x="1378.62" y="475.94" width="34.2" height="10.7" fill="#d1ae80"/>
<rect x="518.70" y="487.61" width="34.2" height="10.7" fill="#ff8080"/><rect x="554.53" y="487.61" width="34.2" height="10.7" fill="#ff8080"/><rect x="590.36" y="487.61" width="34.2" height="10.7" fill="#ff8080"/><rect x="626.19" y="487.61" width="34.2" height="10.7" fill="#ff8080"/><rect x="662.02" y="487.61" width="34.2" height="10.7" fill="#ff8080"/><rect x="697.85" y="487.61" width="34.2" height="10.7" fill="#ff8080"/><rect x="733.68" y="487.61" width="34.2" height="10.7" fill="#ff8080"/><rect x="769.51" y="487.61" width="34.2" height="10.7" fill="#ff8080"/><rect x="805.34" y="487.61" width="34.2" height="10.7" fill="#ff8080"/><rect x="841.17" y="487.61" width="34.2" height="10.7" fill="#ff8080"/><rect x="877.00" y="487.61" width="34.2" height="10.7" fill="#ff8080"/><rect x="912.83" y="487.61" width="34.2" height="10.7" fill="#ff8080"/><rect x="948.66" y="487.61" width="34.2" height="10.7" fill="#ff8080"/><rect x="984.49" y="487.61" width="34.2" height="10.7" fill="#ff8080"/><rect x="1020.32" y="487.61" width="34.2" height="10.7" fill="#ff8080"/><rect x="1056.15" y="487.61" width="34.2" height="10.7" fill="#ff8080"/><rect x="1091.98" y="487.61" width="34.2" height="10.7" fill="#ff8080"/><rect x="1127.81" y="487.61" width="34.2" height="10.7" fill="#ff8080"/><rect x="1163.64" y="487.61" width="34.2" height="10.7" fill="#ff8080"/><rect x="1199.47" y="487.61" width="34.2" height="10.7" fill="#f88780"/><rect x="1235.30" y="487.61" width="34.2" height="10.7" fill="#eb9480"/><rect x="1271.13" y="487.61" width="34.2" height="10.7" fill="#e19e80"/><rect x="1306.96" y="487.61" width="34.2" height="10.7" fill="#d9a680"/><rect x="1342.79" y="487.61" width="34.2" height="10.7" fill="#d7a880"/><rect x="1378.62" y="487.61" width="34.2" height="10.7" fill="#d7a880"/>
<rect x="518.70" y="499.28" width="34.2" height="10.7" fill="#ff8080"/><rect x="554.53" y="499.28" width="34.2" height="10.7" fill="#ff8080"/><rect x="590.36" y="499.28" width="34.2" height="10.7" fill="#ff8080"/><rect x="626.19" y="499.28" width="34.2" height="10.7" fill="#ff8080"/><rect x="662.02" y="499.28" width="34.2" height="10.7" fill="#ff8080"/><rect x="697.85" y="499.28" width="34.2" height="10.7" fill="#ff8080"/><rect x="733.68" y="499.28" width="34.2" height="10.7" fill="#ff8080"/><rect x="769.51" y="499.28" width="34.2" height="10.7" fill="#ff8080"/><rect x="805.34" y="499.28" width="34.2" height="10.7" fill="#ff8080"/><rect x="841.17" y="499.28" width="34.2" height="10.7" fill="#ff8080"/><rect x="877.00" y="499.28" width="34.2" height="10.7" fill="#ff8080"/><rect x="912.83" y="499.28" width="34.2" height="10.7" fill="#ff8080"/><rect x="948.66" y="499.28" width="34.2" height="10.7" fill="#ff8080"/><rect x="984.49" y="499.28" width="34.2" height="10.7" fill="#ff8080"/><rect x="1020.32" y="499.28" width="34.2" height="10.7" fill="#ff8080"/><rect x="1056.15" y="499.28" width="34.2" height="10.7" fill="#ff8080"/><rect x="1091.98" y="499.28" width="34.2" height="10.7" fill="#ff8080"/><rect x="1127.81" y="499.28" width="34.2" height="10.7" fill="#ff8080"/><rect x="1163.64" y="499.28" width="34.2" height="10.7" fill="#ff8080"/><rect x="1199.47" y="499.28" width="34.2" height="10.7" fill="#f88780"/><rect x="1235.30" y="499.28" width="34.2" height="10.7" fill="#eb9480"/><rect x="1271.13" y="499.28" width="34.2" height="10.7" fill="#e19e80"/><rect x="1306.96" y="499.28" width="34.2" height="10.7" fill="#d9a680"/><rect x="1342.79" y="499.28" width="34.2" height="10.7" fill="#d9a680"/><rect x="1378.62" y="499.28" width="34.2" height="10.7" fill="#d9a680"/>
<g text-anchor="end" transform="scale(0.89 1)" stroke="#000" stroke-width="0.15">
<text x="619.0" y="76.30">32.00</text><text x="659.9" y="76.30">32.00</text><text x="700.2" y="76.30">32.00</text><text x="740.4" y="76.30">32.00</text><text x="780.7" y="76.30">32.00</text><text x="821.0" y="76.30">32.00</text><text x="861.2" y="76.30">32.00</text><text x="901.5" y="76.30">32.00</text><text x="941.7" y="76.30">32.00</text><text x="982.0" y="76.30">32.00</text><text x="1022.2" y="76.30">32.00</text><text x="1062.5" y="76.30">32.00</text><text x="1102.8" y="76.30">32.00</text><text x="1143.0" y="76.30">32.00</text><text x="1183.3" y="76.30">32.00</text><text x="1223.5" y="76.30">32.00</text><text x="1263.8" y="76.30">32.00</text><text x="1304.1" y="76.30">32.00</text><text x="1344.3" y="76.30">31.75</text><text x="1384.6" y="76.30">31.50</text><text x="1424.8" y="76.30">31.00</text><text x="1465.1" y="76.30">30.50</text><text x="1505.3" y="76.30">30.00</text><text x="1545.6" y="76.30">29.25</text><text x="1585.9" y="76.30">28.50</text>
<text x="619.7" y="87.97">16.25</text><text x="659.9" y="87.97">16.25</text><text x="700.2" y="87.97">16.25</text><text x="740.4" y="87.97">16.25</text><text x="780.7" y="87.97">21.50</text><text x="821.0" y="87.97">24.00</text><text x="861.2" y="87.97">24.00</text><text x="901.5" y="87.97">24.00</text><text x="941.7" y="87.97">24.00</text><text x="982.0" y="87.97">24.00</text><text x="1022.2" y="87.97">24.00</text><text x="1062.5" y="87.97">24.00</text><text x="1102.8" y="87.97">24.00</text><text x="1143.0" y="87.97">24.50</text><text x="1183.3" y="87.97">25.00</text><text x="1223.5" y="87.97">25.25</text><text x="1263.8" y="87.97">25.75</text><text x="1304.1" y="87.97">26.00</text><text x="1344.3" y="87.97">26.50</text><text x="1384.6" y="87.97">27.25</text><text x="1424.8" y="87.97">28.50</text><text x="1465.1" y="87.97">28.50</text><text x="1505.3" y="87.97">28.50</text><text x="1545.6" y="87.97">28.50</text><text x="1585.9" y="87.97">28.50</text>
<text x="619.7" y="99.63">16.25</text><text x="659.9" y="99.63">16.25</text><text x="700.2" y="99.63">16.25</text><text x="740.4" y="99.63">16.25</text><text x="780.7" y="99.63">21.50</text><text x="821.0" y="99.63">24.00</text><text x="861.2" y="99.63">24.00</text><text x="901.5" y="99.63">24.00</text><text x="941.7" y="99.63">24.00</text><text x="982.0" y="99.63">24.00</text><text x="1022.2" y="99.63">24.00</text><text x="1062.5" y="99.63">24.00</text><text x="1102.8" y="99.63">24.00</text><text x="1143.0" y="99.63">24.50</text><text x="1183.3" y="99.63">25.00</text><text x="1223.5" y="99.63">25.25</text><text x="1263.8" y="99.63">25.75</text><text x="1304.1" y="99.63">26.00</text><text x="1344.3" y="99.63">26.50</text><text x="1384.6" y="99.63">27.25</text><text x="1424.8" y="99.63">28.50</text><text x="1465.1" y="99.63">28.50</text><text x="1505.3" y="99.63">28.50</text><text x="1545.6" y="99.63">28.50</text><text x="1585.9" y="99.63">28.50</text>
<text x="619.7" y="111.30">16.25</text><text x="659.9" y="111.30">16.25</text><text x="700.2" y="111.30">16.25</text><text x="740.4" y="111.30">16.25</text><text x="780.7" y="111.30">21.50</text><text x="821.0" y="111.30">24.00</text><text x="861.2" y="111.30">24.00</text><text x="901.5" y="111.30">24.00</text><text x="941.7" y="111.30">24.00</text><text x="982.0" y="111.30">24.00</text><text x="1022.2" y="111.30">24.00</text><text x="1062.5" y="111.30">24.00</text><text x="1102.8" y="111.30">24.00</text><text x="1143.0" y="111.30">24.50</text><text x="1183.3" y="111.30">25.00</text><text x="1223.5" y="111.30">25.25</text><text x="1263.8" y="111.30">25.75</text><text x="1304.1" y="111.30">26.00</text><text x="1344.3" y="111.30">26.50</text><text x="1384.6" y="111.30">27.25</text><text x="1424.8" y="111.30">28.50</text><text x="1465.1" y="111.30">28.50</text><text x="1505.3" y="111.30">28.50</text><text x="1545.6" y="111.30">28.50</text><text x="1585.9" y="111.30">28.50</text>
<text x="619.7" y="122.97">16.25</text><text x="659.9" y="122.97">16.25</text><text x="700.2" y="122.97">16.25</text><text x="740.4" y="122.97">16.25</text><text x="780.7" y="122.97">21.50</text><text x="821.0" y="122.97">24.00</text><text x="861.2" y="122.97">24.00</text><text x="901.5" y="122.97">24.00</text><text x="941.7" y="122.97">24.00</text><text x="982.0" y="122.97">24.00</text><text x="1022.2" y="122.97">24.00</text><text x="1062.5" y="122.97">24.00</text><text x="1102.8" y="122.97">24.00</text><text x="1143.0" y="122.97">24.50</text><text x="1183.3" y="122.97">25.00</text><text x="1223.5" y="122.97">25.25</text><text x="1263.8" y="122.97">25.75</text><text x="1304.1" y="122.97">26.00</text><text x="1344.3" y="122.97">26.50</text><text x="1384.6" y="122.97">27.25</text><text x="1424.8" y="122.97">28.50</text><text x="1465.1" y="122.97">28.50</text><text x="1505.3" y="122.97">28.50</text><text x="1545.6" y="122.97">28.50</text><text x="1585.9" y="122.97">28.50</text>
<text x="619.7" y="134.63">16.25</text><text x="659.9" y="134.63">16.25</text><text x="700.2" y="134.63">16.25</text><text x="740.4" y="134.63">16.25</text><text x="780.7" y="134.63">21.50</text><text x="821.0" y="134.63">24.00</text><text x="861.2" y="134.63">24.00</text><text x="901.5" y="134.63">24.00</text><text x="941.7" y="134.63">24.00</text><text x="982.0" y="134.63">24.00</text><text x="1022.2" y="134.63">24.00</text><text x="1062.5" y="134.63">24.00</text><text x="1102.8" y="134.63">24.00</text><text x="1143.0" y="134.63">24.50</text><text x="1183.3" y="134.63">25.00</text><text x="1223.5" y="134.63">25.25</text><text x="1263.8" y="134.63">25.75</text><text x="1304.1" y="134.63">26.00</text><text x="1344.3" y="134.63">26.50</text><text x="1384.6" y="134.63">27.25</text><text x="1424.8" y="134.63">28.50</text><text x="1465.1" y="134.63">28.50</text><text x="1505.3" y="134.63">28.50</text><text x="1545.6" y="134.63">28.50</text><text x="1585.9" y="134.63">28.50</text>
<text x="619.7" y="146.30">16.25</text><text x="659.9" y="146.30">16.25</text><text x="700.2" y="146.30">16.25</text><text x="740.4" y="146.30">16.25</text><text x="780.7" y="146.30">21.50</text><text x="821.0" y="146.30">24.00</text><text x="861.2" y="146.30">24.00</text><text x="901.5" y="146.30">24.00</text><text x="941.7" y="146.30">24.00</text><text x="982.0" y="146.30">24.00</text><text x="1022.2" y="146.30">24.00</text><text x="1062.5" y="146.30">24.00</text><text x="1102.8" y="146.30">24.00</text><text x="1143.0" y="146.30">24.50</text><text x="1183.3" y="146.30">25.00</text><text x="1223.5" y="146.30">25.25</text><text x="1263.8" y="146.30">25.50</text><text x="1304.1" y="146.30">25.75</text><text x="1344.3" y="146.30">27.00</text><text x="1384.6" y="146.30">28.25</text><text x="1424.8" y="146.30">30.50</text><text x="1465.1" y="146.30">31.50</text><text x="1505.3" y="146.30">32.00</text><text x="1545.6" y="146.30">31.50</text><text x="1585.9" y="146.30">31.25</text>
<text x="619.7" y="157.97">16.75</text><text x="659.9" y="157.97">16.75</text><text x="700.2" y="157.97">16.75</text><text x="740.4" y="157.97">16.75</text><text x="780.7" y="157.97">21.50</text><text x="821.0" y="157.97">25.00</text><text x="861.2" y="157.97">26.25</text><text x="901.5" y="157.97">27.00</text><text x="941.7" y="157.97">27.25</text><text x="982.0" y="157.97">27.75</text><text x="1022.2" y="157.97">28.00</text><text x="1062.5" y="157.97">28.25</text><text x="1102.8" y="157.97">28.50</text><text x="1143.0" y="157.97">29.00</text><text x="1183.3" y="157.97">29.50</text><text x="1223.5" y="157.97">30.00</text><text x="1263.8" y="157.97">30.25</text><text x="1304.1" y="157.97">30.50</text><text x="1344.3" y="157.97">31.00</text><text x="1384.6" y="157.97">31.25</text><text x="1424.8" y="157.97">32.25</text><text x="1465.1" y="157.97">33.75</text><text x="1505.3" y="157.97">34.75</text><text x="1545.6" y="157.97">34.50</text><text x="1585.9" y="157.97">34.25</text>
<text x="619.7" y="169.64">17.25</text><text x="659.9" y="169.64">17.25</text><text x="700.2" y="169.64">17.25</text><text x="740.4" y="169.64">17.25</text><text x="780.7" y="169.64">22.00</text><text x="821.0" y="169.64">25.75</text><text x="861.2" y="169.64">27.75</text><text x="901.5" y="169.64">29.25</text><text x="941.7" y="169.64">30.00</text><text x="982.0" y="169.64">30.50</text><text x="1022.2" y="169.64">30.50</text><text x="1062.5" y="169.64">30.50</text><text x="1102.8" y="169.64">30.50</text><text x="1143.0" y="169.64">30.50</text><text x="1183.3" y="169.64">30.50</text><text x="1223.5" y="169.64">30.50</text><text x="1263.8" y="169.64">30.50</text><text x="1304.1" y="169.64">30.50</text><text x="1344.3" y="169.64">31.50</text><text x="1384.6" y="169.64">32.50</text><text x="1424.8" y="169.64">34.75</text><text x="1465.1" y="169.64">35.25</text><text x="1505.3" y="169.64">35.50</text><text x="1545.6" y="169.64">35.50</text><text x="1585.9" y="169.64">35.50</text>
<text x="619.7" y="181.30">17.75</text><text x="659.9" y="181.30">17.75</text><text x="700.2" y="181.30">17.75</text><text x="740.4" y="181.30">17.75</text><text x="780.7" y="181.30">22.75</text><text x="821.0" y="181.30">27.25</text><text x="861.2" y="181.30">29.25</text><text x="901.5" y="181.30">30.75</text><text x="941.7" y="181.30">31.50</text><text x="982.0" y="181.30">31.75</text><text x="1022.2" y="181.30">31.75</text><text x="1062.5" y="181.30">31.75</text><text x="1102.8" y="181.30">31.75</text><text x="1143.0" y="181.30">31.50</text><text x="1183.3" y="181.30">31.25</text><text x="1223.5" y="181.30">30.75</text><text x="1263.8" y="181.30">30.25</text><text x="1304.1" y="181.30">29.75</text><text x="1344.3" y="181.30">30.75</text><text x="1384.6" y="181.30">31.75</text><text x="1424.8" y="181.30">34.00</text><text x="1465.1" y="181.30">34.75</text><text x="1505.3" y="181.30">35.50</text><text x="1545.6" y="181.30">36.00</text><text x="1585.9" y="181.30">36.25</text>
<text x="619.7" y="192.97">19.00</text><text x="659.9" y="192.97">19.00</text><text x="700.2" y="192.97">19.00</text><text x="740.4" y="192.97">19.00</text><text x="780.7" y="192.97">24.00</text><text x="821.0" y="192.97">29.75</text><text x="861.2" y="192.97">31.50</text><text x="901.5" y="192.97">32.25</text><text x="941.7" y="192.97">32.50</text><text x="982.0" y="192.97">32.75</text><text x="1022.2" y="192.97">32.75</text><text x="1062.5" y="192.97">32.75</text><text x="1102.8" y="192.97">32.75</text><text x="1143.0" y="192.97">32.25</text><text x="1183.3" y="192.97">31.25</text><text x="1223.5" y="192.97">30.25</text><text x="1263.8" y="192.97">29.25</text><text x="1304.1" y="192.97">28.50</text><text x="1344.3" y="192.97">29.50</text><text x="1384.6" y="192.97">30.50</text><text x="1424.8" y="192.97">32.75</text><text x="1465.1" y="192.97">33.25</text><text x="1505.3" y="192.97">33.50</text><text x="1545.6" y="192.97">33.50</text><text x="1585.9" y="192.97">33.50</text>
<text x="619.7" y="204.64">20.25</text><text x="659.9" y="204.64">20.25</text><text x="700.2" y="204.64">20.25</text><text x="740.4" y="204.64">20.25</text><text x="780.7" y="204.64">25.75</text><text x="821.0" y="204.64">31.00</text><text x="861.2" y="204.64">32.25</text><text x="901.5" y="204.64">32.75</text><text x="941.7" y="204.64">33.00</text><text x="982.0" y="204.64">33.25</text><text x="1022.2" y="204.64">33.25</text><text x="1062.5" y="204.64">33.25</text><text x="1102.8" y="204.64">33.25</text><text x="1143.0" y="204.64">32.75</text><text x="1183.3" y="204.64">32.00</text><text x="1223.5" y="204.64">31.00</text><text x="1263.8" y="204.64">29.75</text><text x="1304.1" y="204.64">28.50</text><text x="1344.3" y="204.64">29.00</text><text x="1384.6" y="204.64">29.50</text><text x="1424.8" y="204.64">31.25</text><text x="1465.1" y="204.64">32.75</text><text x="1505.3" y="204.64">34.25</text><text x="1545.6" y="204.64">34.25</text><text x="1585.9" y="204.64">34.25</text>
<text x="619.7" y="216.30">25.75</text><text x="659.9" y="216.30">25.75</text><text x="700.2" y="216.30">25.75</text><text x="740.4" y="216.30">25.75</text><text x="780.7" y="216.30">31.25</text><text x="821.0" y="216.30">32.75</text><text x="861.2" y="216.30">33.75</text><text x="901.5" y="216.30">34.25</text><text x="941.7" y="216.30">34.50</text><text x="982.0" y="216.30">34.50</text><text x="1022.2" y="216.30">34.50</text><text x="1062.5" y="216.30">34.50</text><text x="1102.8" y="216.30">34.50</text><text x="1143.0" y="216.30">34.25</text><text x="1183.3" y="216.30">33.75</text><text x="1223.5" y="216.30">33.00</text><text x="1263.8" y="216.30">32.00</text><text x="1304.1" y="216.30">30.50</text><text x="1344.3" y="216.30">32.00</text><text x="1384.6" y="216.30">33.25</text><text x="1424.8" y="216.30">36.00</text><text x="1465.1" y="216.30">36.25</text><text x="1505.3" y="216.30">36.25</text><text x="1545.6" y="216.30">36.50</text><text x="1585.9" y="216.30">36.50</text>
<text x="619.7" y="227.97">29.75</text><text x="659.9" y="227.97">29.75</text><text x="700.2" y="227.97">29.75</text><text x="740.4" y="227.97">29.75</text><text x="780.7" y="227.97">33.25</text><text x="821.0" y="227.97">34.50</text><text x="861.2" y="227.97">35.00</text><text x="901.5" y="227.97">35.25</text><text x="941.7" y="227.97">35.50</text><text x="982.0" y="227.97">35.50</text><text x="1022.2" y="227.97">35.50</text><text x="1062.5" y="227.97">35.50</text><text x="1102.8" y="227.97">35.50</text><text x="1143.0" y="227.97">35.25</text><text x="1183.3" y="227.97">34.75</text><text x="1223.5" y="227.97">34.00</text><text x="1263.8" y="227.97">33.00</text><text x="1304.1" y="227.97">31.50</text><text x="1344.3" y="227.97">32.75</text><text x="1384.6" y="227.97">34.00</text><text x="1424.8" y="227.97">36.25</text><text x="1465.1" y="227.97">37.00</text><text x="1505.3" y="227.97">37.75</text><text x="1545.6" y="227.97">38.25</text><text x="1585.9" y="227.97">38.50</text>
<text x="619.7" y="239.64">34.00</text><text x="659.9" y="239.64">34.00</text><text x="700.2" y="239.64">34.00</text><text x="740.4" y="239.64">34.00</text><text x="780.7" y="239.64">35.00</text><text x="821.0" y="239.64">36.00</text><text x="861.2" y="239.64">36.50</text><text x="901.5" y="239.64">36.75</text><text x="941.7" y="239.64">36.75</text><text x="982.0" y="239.64">36.75</text><text x="1022.2" y="239.64">36.75</text><text x="1062.5" y="239.64">36.75</text><text x="1102.8" y="239.64">36.75</text><text x="1143.0" y="239.64">36.50</text><text x="1183.3" y="239.64">36.00</text><text x="1223.5" y="239.64">35.25</text><text x="1263.8" y="239.64">34.25</text><text x="1304.1" y="239.64">32.75</text><text x="1344.3" y="239.64">34.00</text><text x="1384.6" y="239.64">35.25</text><text x="1424.8" y="239.64">37.25</text><text x="1465.1" y="239.64">38.25</text><text x="1505.3" y="239.64">39.00</text><text x="1545.6" y="239.64">40.00</text><text x="1585.9" y="239.64">40.50</text>
<text x="619.7" y="251.31">37.75</text><text x="659.9" y="251.31">37.75</text><text x="700.2" y="251.31">37.75</text><text x="740.4" y="251.31">37.75</text><text x="780.7" y="251.31">38.50</text><text x="821.0" y="251.31">38.75</text><text x="861.2" y="251.31">38.75</text><text x="901.5" y="251.31">38.75</text><text x="941.7" y="251.31">38.75</text><text x="982.0" y="251.31">38.75</text><text x="1022.2" y="251.31">38.75</text><text x="1062.5" y="251.31">38.75</text><text x="1102.8" y="251.31">38.75</text><text x="1143.0" y="251.31">38.50</text><text x="1183.3" y="251.31">37.75</text><text x="1223.5" y="251.31">36.75</text><text x="1263.8" y="251.31">35.75</text><text x="1304.1" y="251.31">34.50</text><text x="1344.3" y="251.31">35.25</text><text x="1384.6" y="251.31">36.00</text><text x="1424.8" y="251.31">37.25</text><text x="1465.1" y="251.31">37.50</text><text x="1505.3" y="251.31">38.00</text><text x="1545.6" y="251.31">38.50</text><text x="1585.9" y="251.31">39.00</text>
<text x="619.7" y="262.97">42.50</text><text x="659.9" y="262.97">42.50</text><text x="700.2" y="262.97">42.50</text><text x="740.4" y="262.97">42.50</text><text x="780.7" y="262.97">43.25</text><text x="821.0" y="262.97">43.25</text><text x="861.2" y="262.97">43.25</text><text x="901.5" y="262.97">43.25</text><text x="941.7" y="262.97">43.25</text><text x="982.0" y="262.97">43.25</text><text x="1022.2" y="262.97">43.00</text><text x="1062.5" y="262.97">42.75</text><text x="1102.8" y="262.97">42.50</text><text x="1143.0" y="262.97">41.50</text><text x="1183.3" y="262.97">40.50</text><text x="1223.5" y="262.97">39.25</text><text x="1263.8" y="262.97">38.25</text><text x="1304.1" y="262.97">37.00</text><text x="1344.3" y="262.97">37.50</text><text x="1384.6" y="262.97">38.00</text><text x="1424.8" y="262.97">39.00</text><text x="1465.1" y="262.97">41.00</text><text x="1505.3" y="262.97">42.75</text><text x="1545.6" y="262.97">42.25</text><text x="1585.9" y="262.97">41.75</text>
<text x="619.7" y="274.64">47.00</text><text x="659.9" y="274.64">47.00</text><text x="700.2" y="274.64">47.00</text><text x="740.4" y="274.64">47.00</text><text x="780.7" y="274.64">47.50</text><text x="821.0" y="274.64">47.50</text><text x="861.2" y="274.64">47.50</text><text x="901.5" y="274.64">47.50</text><text x="941.7" y="274.64">47.50</text><text x="982.0" y="274.64">47.50</text><text x="1022.2" y="274.64">47.50</text><text x="1062.5" y="274.64">47.50</text><text x="1102.8" y="274.64">47.50</text><text x="1143.0" y="274.64">47.00</text><text x="1183.3" y="274.64">45.50</text><text x="1223.5" y="274.64">43.75</text><text x="1263.8" y="274.64">42.00</text><text x="1304.1" y="274.64">40.00</text><text x="1344.3" y="274.64">40.00</text><text x="1384.6" y="274.64">40.00</text><text x="1424.8" y="274.64">39.75</text><text x="1465.1" y="274.64">41.50</text><text x="1505.3" y="274.64">43.25</text><text x="1545.6" y="274.64">43.25</text><text x="1585.9" y="274.64">43.25</text>
<text x="619.7" y="286.31">50.50</text><text x="659.9" y="286.31">50.50</text><text x="700.2" y="286.31">50.50</text><text x="740.4" y="286.31">50.50</text><text x="780.7" y="286.31">50.75</text><text x="821.0" y="286.31">50.75</text><text x="861.2" y="286.31">50.75</text><text x="901.5" y="286.31">50.75</text><text x="941.7" y="286.31">50.75</text><text x="982.0" y="286.31">50.75</text><text x="1022.2" y="286.31">50.50</text><text x="1062.5" y="286.31">50.25</text><text x="1102.8" y="286.31">50.00</text><text x="1143.0" y="286.31">49.25</text><text x="1183.3" y="286.31">47.50</text><text x="1223.5" y="286.31">45.50</text><text x="1263.8" y="286.31">43.50</text><text x="1304.1" y="286.31">41.75</text><text x="1344.3" y="286.31">41.25</text><text x="1384.6" y="286.31">40.75</text><text x="1424.8" y="286.31">39.75</text><text x="1465.1" y="286.31">41.50</text><text x="1505.3" y="286.31">43.00</text><text x="1545.6" y="286.31">44.50</text><text x="1585.9" y="286.31">45.50</text>
<text x="619.7" y="297.97">52.25</text><text x="659.9" y="297.97">52.25</text><text x="700.2" y="297.97">52.25</text><text x="740.4" y="297.97">52.25</text><text x="780.7" y="297.97">52.25</text><text x="821.0" y="297.97">52.25</text><text x="861.2" y="297.97">52.25</text><text x="901.5" y="297.97">52.25</text><text x="941.7" y="297.97">52.25</text><text x="982.0" y="297.97">52.00</text><text x="1022.2" y="297.97">51.75</text><text x="1062.5" y="297.97">51.25</text><text x="1102.8" y="297.97">50.75</text><text x="1143.0" y="297.97">50.00</text><text x="1183.3" y="297.97">48.25</text><text x="1223.5" y="297.97">46.25</text><text x="1263.8" y="297.97">44.50</text><text x="1304.1" y="297.97">42.50</text><text x="1344.3" y="297.97">41.75</text><text x="1384.6" y="297.97">41.00</text><text x="1424.8" y="297.97">39.75</text><text x="1465.1" y="297.97">41.50</text><text x="1505.3" y="297.97">43.00</text><text x="1545.6" y="297.97">44.75</text><text x="1585.9" y="297.97">46.00</text>
<text x="619.7" y="309.64">53.00</text><text x="659.9" y="309.64">53.00</text><text x="700.2" y="309.64">53.00</text><text x="740.4" y="309.64">53.00</text><text x="780.7" y="309.64">53.00</text><text x="821.0" y="309.64">53.00</text><text x="861.2" y="309.64">53.00</text><text x="901.5" y="309.64">53.00</text><text x="941.7" y="309.64">53.00</text><text x="982.0" y="309.64">52.75</text><text x="1022.2" y="309.64">52.50</text><text x="1062.5" y="309.64">52.00</text><text x="1102.8" y="309.64">51.25</text><text x="1143.0" y="309.64">50.25</text><text x="1183.3" y="309.64">48.50</text><text x="1223.5" y="309.64">46.75</text><text x="1263.8" y="309.64">45.00</text><text x="1304.1" y="309.64">43.00</text><text x="1344.3" y="309.64">42.25</text><text x="1384.6" y="309.64">41.50</text><text x="1424.8" y="309.64">39.75</text><text x="1465.1" y="309.64">41.50</text><text x="1505.3" y="309.64">43.00</text><text x="1545.6" y="309.64">44.75</text><text x="1585.9" y="309.64">46.00</text>
<text x="619.7" y="321.31">53.25</text><text x="659.9" y="321.31">53.25</text><text x="700.2" y="321.31">53.25</text><text x="740.4" y="321.31">53.25</text><text x="780.7" y="321.31">53.25</text><text x="821.0" y="321.31">53.25</text><text x="861.2" y="321.31">53.25</text><text x="901.5" y="321.31">53.25</text><text x="941.7" y="321.31">53.25</text><text x="982.0" y="321.31">53.00</text><text x="1022.2" y="321.31">52.75</text><text x="1062.5" y="321.31">52.25</text><text x="1102.8" y="321.31">51.50</text><text x="1143.0" y="321.31">50.50</text><text x="1183.3" y="321.31">49.00</text><text x="1223.5" y="321.31">47.00</text><text x="1263.8" y="321.31">45.50</text><text x="1304.1" y="321.31">43.75</text><text x="1344.3" y="321.31">42.50</text><text x="1384.6" y="321.31">41.25</text><text x="1424.8" y="321.31">38.75</text><text x="1465.1" y="321.31">40.25</text><text x="1505.3" y="321.31">42.00</text><text x="1545.6" y="321.31">43.75</text><text x="1585.9" y="321.31">45.25</text>
<text x="619.7" y="332.97">53.25</text><text x="659.9" y="332.97">53.25</text><text x="700.2" y="332.97">53.25</text><text x="740.4" y="332.97">53.25</text><text x="780.7" y="332.97">53.25</text><text x="821.0" y="332.97">53.25</text><text x="861.2" y="332.97">53.25</text><text x="901.5" y="332.97">53.25</text><text x="941.7" y="332.97">53.25</text><text x="982.0" y="332.97">53.00</text><text x="1022.2" y="332.97">52.75</text><text x="1062.5" y="332.97">52.25</text><text x="1102.8" y="332.97">51.50</text><text x="1143.0" y="332.97">50.50</text><text x="1183.3" y="332.97">49.00</text><text x="1223.5" y="332.97">47.50</text><text x="1263.8" y="332.97">46.00</text><text x="1304.1" y="332.97">44.50</text><text x="1344.3" y="332.97">43.25</text><text x="1384.6" y="332.97">42.00</text><text x="1424.8" y="332.97">39.25</text><text x="1465.1" y="332.97">40.50</text><text x="1505.3" y="332.97">41.50</text><text x="1545.6" y="332.97">42.25</text><text x="1585.9" y="332.97">42.75</text>
<text x="619.7" y="344.64">53.25</text><text x="659.9" y="344.64">53.25</text><text x="700.2" y="344.64">53.25</text><text x="740.4" y="344.64">53.25</text><text x="780.7" y="344.64">53.25</text><text x="821.0" y="344.64">53.25</text><text x="861.2" y="344.64">53.25</text><text x="901.5" y="344.64">53.25</text><text x="941.7" y="344.64">53.25</text><text x="982.0" y="344.64">53.00</text><text x="1022.2" y="344.64">52.75</text><text x="1062.5" y="344.64">52.25</text><text x="1102.8" y="344.64">51.50</text><text x="1143.0" y="344.64">50.50</text><text x="1183.3" y="344.64">49.25</text><text x="1223.5" y="344.64">47.75</text><text x="1263.8" y="344.64">46.50</text><text x="1304.1" y="344.64">45.25</text><text x="1344.3" y="344.64">44.50</text><text x="1384.6" y="344.64">43.75</text><text x="1424.8" y="344.64">42.00</text><text x="1465.1" y="344.64">41.50</text><text x="1505.3" y="344.64">41.00</text><text x="1545.6" y="344.64">41.50</text><text x="1585.9" y="344.64">42.00</text>
<text x="619.7" y="356.31">53.25</text><text x="659.9" y="356.31">53.25</text><text x="700.2" y="356.31">53.25</text><text x="740.4" y="356.31">53.25</text><text x="780.7" y="356.31">53.25</text><text x="821.0" y="356.31">53.25</text><text x="861.2" y="356.31">53.25</text><text x="901.5" y="356.31">53.25</text><text x="941.7" y="356.31">53.25</text><text x="982.0" y="356.31">53.00</text><text x="1022.2" y="356.31">52.75</text><text x="1062.5" y="356.31">52.25</text><text x="1102.8" y="356.31">51.75</text><text x="1143.0" y="356.31">51.00</text><text x="1183.3" y="356.31">50.00</text><text x="1223.5" y="356.31">49.00</text><text x="1263.8" y="356.31">48.00</text><text x="1304.1" y="356.31">47.00</text><text x="1344.3" y="356.31">45.75</text><text x="1384.6" y="356.31">44.75</text><text x="1424.8" y="356.31">42.50</text><text x="1465.1" y="356.31">41.25</text><text x="1505.3" y="356.31">40.25</text><text x="1545.6" y="356.31">40.50</text><text x="1585.9" y="356.31">40.50</text>
<text x="619.7" y="367.98">53.25</text><text x="659.9" y="367.98">53.25</text><text x="700.2" y="367.98">53.25</text><text x="740.4" y="367.98">53.25</text><text x="780.7" y="367.98">53.25</text><text x="821.0" y="367.98">53.25</text><text x="861.2" y="367.98">53.25</text><text x="901.5" y="367.98">53.25</text><text x="941.7" y="367.98">53.25</text><text x="982.0" y="367.98">53.00</text><text x="1022.2" y="367.98">52.75</text><text x="1062.5" y="367.98">52.50</text><text x="1102.8" y="367.98">52.00</text><text x="1143.0" y="367.98">51.25</text><text x="1183.3" y="367.98">50.50</text><text x="1223.5" y="367.98">49.75</text><text x="1263.8" y="367.98">49.00</text><text x="1304.1" y="367.98">48.50</text><text x="1344.3" y="367.98">47.00</text><text x="1384.6" y="367.98">45.50</text><text x="1424.8" y="367.98">42.50</text><text x="1465.1" y="367.98">40.75</text><text x="1505.3" y="367.98">39.25</text><text x="1545.6" y="367.98">39.00</text><text x="1585.9" y="367.98">39.00</text>
<text x="619.7" y="379.64">53.25</text><text x="659.9" y="379.64">53.25</text><text x="700.2" y="379.64">53.25</text><text x="740.4" y="379.64">53.25</text><text x="780.7" y="379.64">53.25</text><text x="821.0" y="379.64">53.25</text><text x="861.2" y="379.64">53.25</text><text x="901.5" y="379.64">53.25</text><text x="941.7" y="379.64">53.25</text><text x="982.0" y="379.64">53.00</text><text x="1022.2" y="379.64">53.00</text><text x="1062.5" y="379.64">52.50</text><text x="1102.8" y="379.64">52.00</text><text x="1143.0" y="379.64">51.50</text><text x="1183.3" y="379.64">51.00</text><text x="1223.5" y="379.64">50.50</text><text x="1263.8" y="379.64">50.00</text><text x="1304.1" y="379.64">49.50</text><text x="1344.3" y="379.64">48.00</text><text x="1384.6" y="379.64">46.25</text><text x="1424.8" y="379.64">43.00</text><text x="1465.1" y="379.64">41.25</text><text x="1505.3" y="379.64">40.00</text><text x="1545.6" y="379.64">39.50</text><text x="1585.9" y="379.64">39.00</text>
<text x="619.7" y="391.31">53.25</text><text x="659.9" y="391.31">53.25</text><text x="700.2" y="391.31">53.25</text><text x="740.4" y="391.31">53.25</text><text x="780.7" y="391.31">53.25</text><text x="821.0" y="391.31">53.25</text><text x="861.2" y="391.31">53.25</text><text x="901.5" y="391.31">53.25</text><text x="941.7" y="391.31">53.25</text><text x="982.0" y="391.31">53.00</text><text x="1022.2" y="391.31">53.00</text><text x="1062.5" y="391.31">52.50</text><text x="1102.8" y="391.31">52.00</text><text x="1143.0" y="391.31">51.50</text><text x="1183.3" y="391.31">51.00</text><text x="1223.5" y="391.31">50.50</text><text x="1263.8" y="391.31">50.00</text><text x="1304.1" y="391.31">49.50</text><text x="1344.3" y="391.31">48.00</text><text x="1384.6" y="391.31">46.25</text><text x="1424.8" y="391.31">43.00</text><text x="1465.1" y="391.31">41.25</text><text x="1505.3" y="391.31">40.00</text><text x="1545.6" y="391.31">39.50</text><text x="1585.9" y="391.31">39.00</text>
<text x="619.7" y="402.98">53.25</text><text x="659.9" y="402.98">53.25</text><text x="700.2" y="402.98">53.25</text><text x="740.4" y="402.98">53.25</text><text x="780.7" y="402.98">53.25</text><text x="821.0" y="402.98">53.25</text><text x="861.2" y="402.98">53.25</text><text x="901.5" y="402.98">53.25</text><text x="941.7" y="402.98">53.25</text><text x="982.0" y="402.98">53.00</text><text x="1022.2" y="402.98">53.00</text><text x="1062.5" y="402.98">52.50</text><text x="1102.8" y="402.98">52.00</text><text x="1143.0" y="402.98">51.50</text><text x="1183.3" y="402.98">51.00</text><text x="1223.5" y="402.98">50.50</text><text x="1263.8" y="402.98">50.00</text><text x="1304.1" y="402.98">49.50</text><text x="1344.3" y="402.98">48.00</text><text x="1384.6" y="402.98">46.25</text><text x="1424.8" y="402.98">43.00</text><text x="1465.1" y="402.98">41.25</text><text x="1505.3" y="402.98">40.00</text><text x="1545.6" y="402.98">39.50</text><text x="1585.9" y="402.98">39.00</text>
<text x="619.7" y="414.64">53.25</text><text x="659.9" y="414.64">53.25</text><text x="700.2" y="414.64">53.25</text><text x="740.4" y="414.64">53.25</text><text x="780.7" y="414.64">53.25</text><text x="821.0" y="414.64">53.25</text><text x="861.2" y="414.64">53.25</text><text x="901.5" y="414.64">53.25</text><text x="941.7" y="414.64">53.25</text><text x="982.0" y="414.64">53.00</text><text x="1022.2" y="414.64">53.00</text><text x="1062.5" y="414.64">52.50</text><text x="1102.8" y="414.64">52.00</text><text x="1143.0" y="414.64">51.50</text><text x="1183.3" y="414.64">51.00</text><text x="1223.5" y="414.64">50.50</text><text x="1263.8" y="414.64">50.00</text><text x="1304.1" y="414.64">49.50</text><text x="1344.3" y="414.64">48.00</text><text x="1384.6" y="414.64">46.25</text><text x="1424.8" y="414.64">43.00</text><text x="1465.1" y="414.64">41.25</text><text x="1505.3" y="414.64">40.00</text><text x="1545.6" y="414.64">39.50</text><text x="1585.9" y="414.64">39.00</text>
<text x="619.7" y="426.31">53.25</text><text x="659.9" y="426.31">53.25</text><text x="700.2" y="426.31">53.25</text><text x="740.4" y="426.31">53.25</text><text x="780.7" y="426.31">53.25</text><text x="821.0" y="426.31">53.25</text><text x="861.2" y="426.31">53.25</text><text x="901.5" y="426.31">53.25</text><text x="941.7" y="426.31">53.25</text><text x="982.0" y="426.31">53.00</text><text x="1022.2" y="426.31">53.00</text><text x="1062.5" y="426.31">52.50</text><text x="1102.8" y="426.31">52.00</text><text x="1143.0" y="426.31">51.50</text><text x="1183.3" y="426.31">51.00</text><text x="1223.5" y="426.31">50.50</text><text x="1263.8" y="426.31">50.00</text><text x="1304.1" y="426.31">49.50</text><text x="1344.3" y="426.31">48.00</text><text x="1384.6" y="426.31">46.25</text><text x="1424.8" y="426.31">43.00</text><text x="1465.1" y="426.31">41.25</text><text x="1505.3" y="426.31">40.00</text><text x="1545.6" y="426.31">39.50</text><text x="1585.9" y="426.31">39.00</text>
<text x="619.7" y="437.98">53.25</text><text x="659.9" y="437.98">53.25</text><text x="700.2" y="437.98">53.25</text><text x="740.4" y="437.98">53.25</text><text x="780.7" y="437.98">53.25</text><text x="821.0" y="437.98">53.25</text><text x="861.2" y="437.98">53.25</text><text x="901.5" y="437.98">53.25</text><text x="941.7" y="437.98">53.25</text><text x="982.0" y="437.98">53.00</text><text x="1022.2" y="437.98">53.00</text><text x="1062.5" y="437.98">52.50</text><text x="1102.8" y="437.98">52.00</text><text x="1143.0" y="437.98">51.50</text><text x="1183.3" y="437.98">51.00</text><text x="1223.5" y="437.98">50.50</text><text x="1263.8" y="437.98">50.00</text><text x="1304.1" y="437.98">49.50</text><text x="1344.3" y="437.98">48.00</text><text x="1384.6" y="437.98">46.25</text><text x="1424.8" y="437.98">43.00</text><text x="1465.1" y="437.98">41.25</text><text x="1505.3" y="437.98">40.00</text><text x="1545.6" y="437.98">39.50</text><text x="1585.9" y="437.98">39.00</text>
<text x="619.7" y="449.64">53.25</text><text x="659.9" y="449.64">53.25</text><text x="700.2" y="449.64">53.25</text><text x="740.4" y="449.64">53.25</text><text x="780.7" y="449.64">53.25</text><text x="821.0" y="449.64">53.25</text><text x="861.2" y="449.64">53.25</text><text x="901.5" y="449.64">53.25</text><text x="941.7" y="449.64">53.25</text><text x="982.0" y="449.64">53.00</text><text x="1022.2" y="449.64">53.00</text><text x="1062.5" y="449.64">52.50</text><text x="1102.8" y="449.64">52.00</text><text x="1143.0" y="449.64">51.50</text><text x="1183.3" y="449.64">51.00</text><text x="1223.5" y="449.64">50.50</text><text x="1263.8" y="449.64">50.00</text><text x="1304.1" y="449.64">49.50</text><text x="1344.3" y="449.64">48.00</text><text x="1384.6" y="449.64">46.25</text><text x="1424.8" y="449.64">43.00</text><text x="1465.1" y="449.64">41.25</text><text x="1505.3" y="449.64">40.00</text><text x="1545.6" y="449.64">39.50</text><text x="1585.9" y="449.64">39.00</text>
<text x="619.7" y="461.31">53.25</text><text x="659.9" y="461.31">53.25</text><text x="700.2" y="461.31">53.25</text><text x="740.4" y="461.31">53.25</text><text x="780.7" y="461.31">53.25</text><text x="821.0" y="461.31">53.25</text><text x="861.2" y="461.31">53.25</text><text x="901.5" y="461.31">53.25</text><text x="941.7" y="461.31">53.25</text><text x="982.0" y="461.31">53.00</text><text x="1022.2" y="461.31">53.00</text><text x="1062.5" y="461.31">52.50</text><text x="1102.8" y="461.31">52.00</text><text x="1143.0" y="461.31">51.50</text><text x="1183.3" y="461.31">51.00</text><text x="1223.5" y="461.31">50.50</text><text x="1263.8" y="461.31">50.00</text><text x="1304.1" y="461.31">49.50</text><text x="1344.3" y="461.31">48.00</text><text x="1384.6" y="461.31">46.25</text><text x="1424.8" y="461.31">43.00</text><text x="1465.1" y="461.31">41.25</text><text x="1505.3" y="461.31">40.00</text><text x="1545.6" y="461.31">39.00</text><text x="1585.9" y="461.31">38.25</text>
<text x="619.7" y="472.98">53.25</text><text x="659.9" y="472.98">53.25</text><text x="700.2" y="472.98">53.25</text><text x="740.4" y="472.98">53.25</text><text x="780.7" y="472.98">53.25</text><text x="821.0" y="472.98">53.25</text><text x="861.2" y="472.98">53.25</text><text x="901.5" y="472.98">53.25</text><text x="941.7" y="472.98">53.25</text><text x="982.0" y="472.98">53.00</text><text x="1022.2" y="472.98">53.00</text><text x="1062.5" y="472.98">52.50</text><text x="1102.8" y="472.98">52.00</text><text x="1143.0" y="472.98">51.50</text><text x="1183.3" y="472.98">51.00</text><text x="1223.5" y="472.98">50.50</text><text x="1263.8" y="472.98">50.00</text><text x="1304.1" y="472.98">49.50</text><text x="1344.3" y="472.98">48.00</text><text x="1384.6" y="472.98">46.25</text><text x="1424.8" y="472.98">43.00</text><text x="1465.1" y="472.98">40.50</text><text x="1505.3" y="472.98">38.50</text><text x="1545.6" y="472.98">37.50</text><text x="1585.9" y="472.98">37.00</text>
<text x="619.7" y="484.64">53.25</text><text x="659.9" y="484.64">53.25</text><text x="700.2" y="484.64">53.25</text><text x="740.4" y="484.64">53.25</text><text x="780.7" y="484.64">53.25</text><text x="821.0" y="484.64">53.25</text><text x="861.2" y="484.64">53.25</text><text x="901.5" y="484.64">53.25</text><text x="941.7" y="484.64">53.25</text><text x="982.0" y="484.64">53.00</text><text x="1022.2" y="484.64">53.00</text><text x="1062.5" y="484.64">52.50</text><text x="1102.8" y="484.64">52.00</text><text x="1143.0" y="484.64">51.50</text><text x="1183.3" y="484.64">51.00</text><text x="1223.5" y="484.64">50.50</text><text x="1263.8" y="484.64">50.00</text><text x="1304.1" y="484.64">49.50</text><text x="1344.3" y="484.64">48.00</text><text x="1384.6" y="484.64">46.25</text><text x="1424.8" y="484.64">43.00</text><text x="1465.1" y="484.64">40.50</text><text x="1505.3" y="484.64">38.50</text><text x="1545.6" y="484.64">37.25</text><text x="1585.9" y="484.64">36.50</text>
<text x="619.7" y="496.31">53.25</text><text x="659.9" y="496.31">53.25</text><text x="700.2" y="496.31">53.25</text><text x="740.4" y="496.31">53.25</text><text x="780.7" y="496.31">53.25</text><text x="821.0" y="496.31">53.25</text><text x="861.2" y="496.31">53.25</text><text x="901.5" y="496.31">53.25</text><text x="941.7" y="496.31">53.25</text><text x="982.0" y="496.31">53.00</text><text x="1022.2" y="496.31">53.00</text><text x="1062.5" y="496.31">52.50</text><text x="1102.8" y="496.31">52.00</text><text x="1143.0" y="496.31">51.50</text><text x="1183.3" y="496.31">51.00</text><text x="1223.5" y="496.31">50.50</text><text x="1263.8" y="496.31">50.00</text><text x="1304.1" y="496.31">49.50</text><text x="1344.3" y="496.31">48.00</text><text x="1384.6" y="496.31">46.25</text><text x="1424.8" y="496.31">43.00</text><text x="1465.1" y="496.31">40.50</text><text x="1505.3" y="496.31">38.50</text><text x="1545.6" y="496.31">38.00</text><text x="1585.9" y="496.31">38.00</text>
<text x="619.7" y="507.98">53.25</text><text x="659.9" y="507.98">53.25</text><text x="700.2" y="507.98">53.25</text><text x="740.4" y="507.98">53.25</text><text x="780.7" y="507.98">53.25</text><text x="821.0" y="507.98">53.25</text><text x="861.2" y="507.98">53.25</text><text x="901.5" y="507.98">53.25</text><text x="941.7" y="507.98">53.25</text><text x="982.0" y="507.98">53.00</text><text x="1022.2" y="507.98">53.00</text><text x="1062.5" y="507.98">52.50</text><text x="1102.8" y="507.98">52.00</text><text x="1143.0" y="507.98">51.50</text><text x="1183.3" y="507.98">51.00</text><text x="1223.5" y="507.98">50.50</text><text x="1263.8" y="507.98">50.00</text><text x="1304.1" y="507.98">49.50</text><text x="1344.3" y="507.98">48.00</text><text x="1384.6" y="507.98">46.25</text><text x="1424.8" y="507.98">43.00</text><text x="1465.1" y="507.98">40.50</text><text x="1505.3" y="507.98">38.50</text><text x="1545.6" y="507.98">38.50</text><text x="1585.9" y="507.98">38.50</text>
</g></svg>
<div style="left:481px;top:535px;width:955px;height:19.5px;background:#f0f0f0"></div>
<svg style="left:1427px;top:546px" width="7" height="7" viewBox="0 0 7 7"><path d="M5.5 0.5v1M5.5 3v1M3 3v1M5.5 5.5v1M3 5.5v1M0.5 5.5v1" stroke="#b0b0b0" stroke-width="1.2"/></svg>
<div style="left:310.5px;top:0;width:1134.5px;height:719px;overflow:hidden"><div style="left:21.5px;top:256.3px;width:671.6px;height:457.9px;border-radius:7px;box-shadow:0 8px 36px rgba(0,0,0,0.27),0 0 0 0.7px rgba(40,40,40,0.45)"></div></div>
<div id="gw" style="left:332px;top:256.3px;width:671.6px;height:457.9px;background:#fff;border-radius:7px;overflow:hidden">
<div style="left:0;top:0;width:100%;height:23.4px;background:linear-gradient(#e4f0f5,#eef6f9)"></div>
<div style="left:0;top:37.6px;width:100%;height:19.9px;background:#f0f0f0"></div>
<div style="left:0;top:440px;width:100%;height:18px;background:#f0f0f0;border-top:1px solid #e0e0e0"></div>
<div style="left:99.8px;top:442px;width:1px;height:14px;background:#d4d4d4"></div>
<div style="left:201.3px;top:442px;width:1px;height:14px;background:#d4d4d4"></div>
<div style="left:302.8px;top:442px;width:1px;height:14px;background:#d4d4d4"></div>
</div>
<svg style="left:339px;top:262.8px" width="13" height="10" viewBox="0 0 13 10"><rect x="0" y="1.5" width="13" height="7" fill="#000"/><rect x="1" y="0" width="1.3" height="1.5" fill="#000"/><rect x="1" y="8.5" width="1.3" height="1.5" fill="#000"/><rect x="3.5" y="0" width="1.3" height="1.5" fill="#000"/><rect x="3.5" y="8.5" width="1.3" height="1.5" fill="#000"/><rect x="6" y="0" width="1.3" height="1.5" fill="#000"/><rect x="6" y="8.5" width="1.3" height="1.5" fill="#000"/><rect x="8.5" y="0" width="1.3" height="1.5" fill="#000"/><rect x="8.5" y="8.5" width="1.3" height="1.5" fill="#000"/><rect x="11" y="0" width="1.3" height="1.5" fill="#000"/><rect x="11" y="8.5" width="1.3" height="1.5" fill="#000"/></svg>
<div style="left:354.5px;top:261px;font-size:10px;letter-spacing:-0.36px;line-height:13px;color:#111">Main Spark Advance Neutral</div>
<svg style="left:911px;top:261.3px" width="84" height="12" viewBox="0 0 84 12"><path d="M1 6.2H8.8" stroke="#222" stroke-width="0.9"/><rect x="36.2" y="2.6" width="7.3" height="7" fill="none" stroke="#333" stroke-width="1.1" rx="1.2"/><path d="M71.5 2.3L79.3 10M79.3 2.3L71.5 10" stroke="#222" stroke-width="0.9"/></svg>
<div style="left:337.5px;top:281px;font-size:10px;letter-spacing:-0.3px;line-height:13px;color:#1a1a3a">Graph</div>
<div style="left:373px;top:281px;font-size:10px;letter-spacing:-0.3px;line-height:13px;color:#1a1a3a">View</div>
<div style="left:335px;top:296.5px;width:1px;height:15px;background:#b0b0b0"></div>
<svg style="left:341.5px;top:299.5px" width="10.5" height="10.5" viewBox="0 0 10 10"><path d="M1 0.5L9 9.5M9 0.5L1 9.5" stroke="#f00" stroke-width="1.6" fill="none"/></svg>
<div style="left:363px;top:296.5px;width:1px;height:15px;background:#b0b0b0"></div>
<div style="left:367.5px;top:296.5px;width:18px;height:16px;background:#cce4f7;border:1px solid #99c9ef;border-radius:1.5px"></div>
<svg style="left:370px;top:298px" width="13" height="13" viewBox="0 0 13 13"><path d="M6.5 0.3L12.7 6.5L6.5 12.7L0.3 6.5z" fill="#000"/><circle cx="6.5" cy="6.5" r="2.6" fill="#fff"/><path d="M6.5 3.2V9.8M3.2 6.5H9.8" stroke="#d00" stroke-width="1.1"/></svg>
<svg style="left:387px;top:298px" width="14" height="13" viewBox="0 0 14 13"><path d="M1 11L4 4L7 9L10 2L13 5" stroke="#2222dd" stroke-width="1.4" fill="none"/><path d="M1 12L5 7L8 10L13 2" stroke="#e02020" stroke-width="1.1" fill="none"/></svg>
<div style="left:403.5px;top:296.5px;width:18px;height:16px;background:#cce4f7;border:1px solid #99c9ef;border-radius:1.5px"></div>
<svg style="left:406px;top:298px" width="14" height="13" viewBox="0 0 14 13"><path d="M0.7 0V12.3H14" stroke="#000" stroke-width="1.3" fill="none"/><path d="M2 9L5 5L8 8L11 3L13 6" stroke="#2222dd" stroke-width="1.3" fill="none"/><path d="M2 11L6 7L9 10L13 8" stroke="#e02020" stroke-width="1.1" fill="none"/></svg>
<svg style="left:424px;top:299px" width="14" height="12" viewBox="0 0 14 12"><path d="M0.5 11H10L13.5 7.5M0.5 11L5 4H10L13.5 7.5M3 7.5H12M5 4L6.5 1.5H10.5L10 4" stroke="#000" stroke-width="1.1" fill="none"/></svg>
<div style="left:439.5px;top:296.5px;width:18px;height:16px;background:#cce4f7;border:1px solid #99c9ef;border-radius:1.5px"></div>
<svg style="left:442px;top:299px" width="14" height="12" viewBox="0 0 14 12"><path d="M0 1.5H10" stroke="#e02020" stroke-width="1.6"/><path d="M0 4H10" stroke="#e0e020" stroke-width="1.6"/><path d="M0 6.5H10" stroke="#20c020" stroke-width="1.6"/><path d="M0 9H10" stroke="#2020e0" stroke-width="1.6"/><path d="M0 11H10" stroke="#9020c0" stroke-width="1.2"/><path d="M12 0V12M10 6H12" stroke="#000" stroke-width="1.3"/></svg>
<svg style="left:0;top:0" width="1445" height="719" viewBox="0 0 1445 719" font-family="'Liberation Sans',sans-serif">
<path d="M513.0 607.7L656.3 529.4M521.5 611.2L664.8 532.9M529.3 614.5L672.6 536.2M536.6 617.5L679.9 539.2M543.7 620.4L687.0 542.1M550.9 623.4L694.2 545.1M558.1 626.4L701.4 548.1M565.3 629.4L708.6 551.1M573.2 632.6L716.5 554.3M580.4 635.6L723.7 557.3M587.6 638.6L730.9 560.3M594.8 641.6L738.1 563.3M602.0 644.6L745.3 566.3M609.2 647.5L752.5 569.2M617.0 650.8L760.3 572.5M624.2 653.8L767.5 575.5M627.5 655.1L770.8 576.8M631.4 656.7L774.7 578.4M638.6 659.7L781.9 581.4M645.8 662.7L789.1 584.4M653.6 666.0L796.9 587.7M660.8 668.9L804.1 590.6M668.0 671.9L811.3 593.6M675.9 675.2L819.2 596.9M679.8 676.8L823.1 598.5M513.0 607.7L679.8 676.8M515.6 606.3L682.4 675.4M516.6 605.7L683.4 674.8M517.6 605.2L684.4 674.3M519.7 604.1L686.5 673.2M521.7 602.9L688.5 672.0M524.3 601.5L691.1 670.6M527.3 599.9L694.1 669.0M529.4 598.8L696.2 667.9M531.4 597.6L698.2 666.7M534.5 596.0L701.3 665.1M536.5 594.8L703.3 663.9M541.7 592.0L708.5 661.1M544.7 590.4L711.5 659.5M547.8 588.7L714.6 657.8M551.9 586.4L718.7 655.5M556.0 584.2L722.8 653.3M560.1 582.0L726.9 651.1M564.2 579.7L731.0 648.8M568.3 577.5L735.1 646.6M572.4 575.3L739.2 644.4M576.5 573.0L743.3 642.1M580.6 570.8L747.4 639.9M584.6 568.6L751.4 637.7M589.8 565.8L756.6 634.9M594.9 563.0L761.7 632.1M600.0 560.2L766.8 629.3M605.1 557.4L771.9 626.5M610.2 554.6L777.0 623.7M615.4 551.8L782.2 620.9M620.5 549.0L787.3 618.1M625.6 546.2L792.4 615.3M630.7 543.4L797.5 612.5M635.8 540.6L802.6 609.7M640.9 537.8L807.7 606.9M646.1 535.0L812.9 604.1M651.2 532.2L818.0 601.3M656.3 529.4L823.1 598.5" stroke="#8a8a8a" stroke-width="0.5" fill="none" stroke-dasharray="1.6 2.2"/>
<path d="M513.0 569.1L656.3 490.8L823.1 559.9M513.0 530.6L656.3 452.3L823.1 521.4M513.0 492.0L656.3 413.7L823.1 482.8M513.0 453.5L656.3 375.2L823.1 444.3" stroke="#666" stroke-width="0.7" fill="none" stroke-dasharray="3 3"/>
<path d="M513.0 607.7L513.0 414.9L656.3 336.6L823.1 405.7L823.1 598.5M513.0 607.7L679.8 676.8L823.1 598.5M513.0 607.7L656.3 529.4L823.1 598.5" stroke="#777" stroke-width="0.8" fill="none"/>
<g stroke="#000" stroke-width="0.75" stroke-linejoin="round">
<path d="M651.2 339.4L659.7 342.9L664.8 340.1L656.3 336.6z" fill="#ff0000"/>
<path d="M659.7 342.9L667.5 346.2L672.6 343.4L664.8 340.1z" fill="#ff0000"/>
<path d="M667.5 346.2L674.7 349.2L679.9 346.4L672.6 343.4z" fill="#ff0000"/>
<path d="M674.7 349.2L681.9 352.1L687 349.3L679.9 346.4z" fill="#ff0000"/>
<path d="M681.9 352.1L689.1 355.1L694.2 352.3L687 349.3z" fill="#ff0000"/>
<path d="M689.1 355.1L696.3 358.1L701.4 355.3L694.2 352.3z" fill="#ff0000"/>
<path d="M696.3 358.1L703.5 361.1L708.6 358.3L701.4 355.3z" fill="#ff0000"/>
<path d="M703.5 361.1L711.4 364.3L716.5 361.5L708.6 358.3z" fill="#ff0000"/>
<path d="M711.4 364.3L718.6 368.6L723.7 365.8L716.5 361.5z" fill="#ff0000"/>
<path d="M718.6 368.6L725.8 371.6L730.9 368.8L723.7 365.8z" fill="#ff0000"/>
<path d="M725.8 371.6L732.9 377.2L738.1 374.4L730.9 368.8z" fill="#ff0000"/>
<path d="M732.9 377.2L740.1 382.8L745.3 380L738.1 374.4z" fill="#ff0700"/>
<path d="M740.1 382.8L747.3 388.4L752.5 385.6L745.3 380z" fill="#ff1400"/>
<path d="M747.3 388.4L755.2 394.2L760.3 391.4L752.5 385.6z" fill="#ff2200"/>
<path d="M755.2 394.2L762.4 399.8L767.5 397L760.3 391.4z" fill="#ff3000"/>
<path d="M762.4 399.8L765.7 403.8L770.8 401L767.5 397z" fill="#ff3f00"/>
<path d="M765.7 403.8L769.6 408L774.7 405.2L770.8 401z" fill="#ff4d00"/>
<path d="M769.6 408L776.8 418.8L781.9 416L774.7 405.2z" fill="#ff6700"/>
<path d="M776.8 418.8L784 430.9L789.1 428.1L781.9 416z" fill="#ff9f00"/>
<path d="M784 430.9L791.8 451.1L796.9 448.3L789.1 428.1z" fill="#ffef00"/>
<path d="M791.8 451.1L799 467.1L804.1 464.3L796.9 448.3z" fill="#cdfc00"/>
<path d="M799 467.1L806.2 480.5L811.3 477.7L804.1 464.3z" fill="#8cf200"/>
<path d="M806.2 480.5L814.1 486.3L819.2 480.9L811.3 477.7z" fill="#64ed00"/>
<path d="M814.1 486.3L818 488L823.1 482.6L819.2 480.9z" fill="#5fec00"/>
<path d="M646.1 342.2L654.6 345.7L659.7 342.9L651.2 339.4z" fill="#ff0000"/>
<path d="M654.6 345.7L662.4 349L667.5 346.2L659.7 342.9z" fill="#ff0000"/>
<path d="M662.4 349L669.6 351.9L674.7 349.2L667.5 346.2z" fill="#ff0000"/>
<path d="M669.6 351.9L676.8 354.9L681.9 352.1L674.7 349.2z" fill="#ff0000"/>
<path d="M676.8 354.9L684 357.9L689.1 355.1L681.9 352.1z" fill="#ff0000"/>
<path d="M684 357.9L691.2 360.9L696.3 358.1L689.1 355.1z" fill="#ff0000"/>
<path d="M691.2 360.9L698.4 363.9L703.5 361.1L696.3 358.1z" fill="#ff0000"/>
<path d="M698.4 363.9L706.2 367.1L711.4 364.3L703.5 361.1z" fill="#ff0000"/>
<path d="M706.2 367.1L713.4 371.4L718.6 368.6L711.4 364.3z" fill="#ff0000"/>
<path d="M713.4 371.4L720.6 374.4L725.8 371.6L718.6 368.6z" fill="#ff0000"/>
<path d="M720.6 374.4L727.8 380L732.9 377.2L725.8 371.6z" fill="#ff0000"/>
<path d="M727.8 380L735 385.6L740.1 382.8L732.9 377.2z" fill="#ff0700"/>
<path d="M735 385.6L742.2 391.1L747.3 388.4L740.1 382.8z" fill="#ff1400"/>
<path d="M742.2 391.1L750.1 397L755.2 394.2L747.3 388.4z" fill="#ff2200"/>
<path d="M750.1 397L757.3 402.6L762.4 399.8L755.2 394.2z" fill="#ff3000"/>
<path d="M757.3 402.6L760.5 406.6L765.7 403.8L762.4 399.8z" fill="#ff3f00"/>
<path d="M760.5 406.6L764.5 410.8L769.6 408L765.7 403.8z" fill="#ff4d00"/>
<path d="M764.5 410.8L771.6 421.6L776.8 418.8L769.6 408z" fill="#ff6700"/>
<path d="M771.6 421.6L778.9 433.7L784 430.9L776.8 418.8z" fill="#ff9f00"/>
<path d="M778.9 433.7L786.7 453.9L791.8 451.1L784 430.9z" fill="#ffef00"/>
<path d="M786.7 453.9L793.9 469.9L799 467.1L791.8 451.1z" fill="#cdfc00"/>
<path d="M793.9 469.9L801.1 483.3L806.2 480.5L799 467.1z" fill="#8cf200"/>
<path d="M801.1 483.3L808.9 493L814.1 486.3L806.2 480.5z" fill="#5cec00"/>
<path d="M808.9 493L812.9 498.6L818 488L814.1 486.3z" fill="#52eb00"/>
<path d="M640.9 345L649.5 348.5L654.6 345.7L646.1 342.2z" fill="#ff0000"/>
<path d="M649.5 348.5L657.3 351.8L662.4 349L654.6 345.7z" fill="#ff0000"/>
<path d="M657.3 351.8L664.5 354.7L669.6 351.9L662.4 349z" fill="#ff0000"/>
<path d="M664.5 354.7L671.7 357.7L676.8 354.9L669.6 351.9z" fill="#ff0000"/>
<path d="M671.7 357.7L678.9 360.7L684 357.9L676.8 354.9z" fill="#ff0000"/>
<path d="M678.9 360.7L686.1 363.7L691.2 360.9L684 357.9z" fill="#ff0000"/>
<path d="M686.1 363.7L693.3 366.7L698.4 363.9L691.2 360.9z" fill="#ff0000"/>
<path d="M693.3 366.7L701.1 369.9L706.2 367.1L698.4 363.9z" fill="#ff0000"/>
<path d="M701.1 369.9L708.3 374.2L713.4 371.4L706.2 367.1z" fill="#ff0000"/>
<path d="M708.3 374.2L715.5 377.2L720.6 374.4L713.4 371.4z" fill="#ff0000"/>
<path d="M715.5 377.2L722.7 382.8L727.8 380L720.6 374.4z" fill="#ff0000"/>
<path d="M722.7 382.8L729.9 388.4L735 385.6L727.8 380z" fill="#ff0700"/>
<path d="M729.9 388.4L737.1 393.9L742.2 391.1L735 385.6z" fill="#ff1400"/>
<path d="M737.1 393.9L744.9 399.8L750.1 397L742.2 391.1z" fill="#ff2200"/>
<path d="M744.9 399.8L752.2 405.4L757.3 402.6L750.1 397z" fill="#ff3000"/>
<path d="M752.2 405.4L755.4 409.3L760.5 406.6L757.3 402.6z" fill="#ff3f00"/>
<path d="M755.4 409.3L759.3 413.6L764.5 410.8L760.5 406.6z" fill="#ff4d00"/>
<path d="M759.3 413.6L766.5 424.4L771.6 421.6L764.5 410.8z" fill="#ff6700"/>
<path d="M766.5 424.4L773.7 436.5L778.9 433.7L771.6 421.6z" fill="#ff9f00"/>
<path d="M773.7 436.5L781.6 456.7L786.7 453.9L778.9 433.7z" fill="#ffef00"/>
<path d="M781.6 456.7L788.8 472.7L793.9 469.9L786.7 453.9z" fill="#cdfc00"/>
<path d="M788.8 472.7L796 486.1L801.1 483.3L793.9 469.9z" fill="#8cf200"/>
<path d="M796 486.1L803.8 494.5L808.9 493L801.1 483.3z" fill="#5aeb00"/>
<path d="M803.8 494.5L807.7 498.8L812.9 498.6L808.9 493z" fill="#4dea00"/>
<path d="M635.8 347.8L644.3 351.3L649.5 348.5L640.9 345z" fill="#ff0000"/>
<path d="M644.3 351.3L652.2 354.6L657.3 351.8L649.5 348.5z" fill="#ff0000"/>
<path d="M652.2 354.6L659.4 357.5L664.5 354.7L657.3 351.8z" fill="#ff0000"/>
<path d="M659.4 357.5L666.6 360.5L671.7 357.7L664.5 354.7z" fill="#ff0000"/>
<path d="M666.6 360.5L673.8 363.5L678.9 360.7L671.7 357.7z" fill="#ff0000"/>
<path d="M673.8 363.5L681 366.5L686.1 363.7L678.9 360.7z" fill="#ff0000"/>
<path d="M681 366.5L688.2 369.5L693.3 366.7L686.1 363.7z" fill="#ff0000"/>
<path d="M688.2 369.5L696 372.7L701.1 369.9L693.3 366.7z" fill="#ff0000"/>
<path d="M696 372.7L703.2 377L708.3 374.2L701.1 369.9z" fill="#ff0000"/>
<path d="M703.2 377L710.4 380L715.5 377.2L708.3 374.2z" fill="#ff0000"/>
<path d="M710.4 380L717.6 385.6L722.7 382.8L715.5 377.2z" fill="#ff0000"/>
<path d="M717.6 385.6L724.8 391.2L729.9 388.4L722.7 382.8z" fill="#ff0700"/>
<path d="M724.8 391.2L732 396.7L737.1 393.9L729.9 388.4z" fill="#ff1400"/>
<path d="M732 396.7L739.8 402.6L744.9 399.8L737.1 393.9z" fill="#ff2200"/>
<path d="M739.8 402.6L747 408.2L752.2 405.4L744.9 399.8z" fill="#ff3000"/>
<path d="M747 408.2L750.3 412.1L755.4 409.3L752.2 405.4z" fill="#ff3f00"/>
<path d="M750.3 412.1L754.2 416.4L759.3 413.6L755.4 409.3z" fill="#ff4d00"/>
<path d="M754.2 416.4L761.4 427.2L766.5 424.4L759.3 413.6z" fill="#ff6700"/>
<path d="M761.4 427.2L768.6 439.3L773.7 436.5L766.5 424.4z" fill="#ff9f00"/>
<path d="M768.6 439.3L776.5 459.5L781.6 456.7L773.7 436.5z" fill="#ffef00"/>
<path d="M776.5 459.5L783.7 471.6L788.8 472.7L781.6 456.7z" fill="#d1fc00"/>
<path d="M783.7 471.6L790.9 481.1L796 486.1L788.8 472.7z" fill="#9cf400"/>
<path d="M790.9 481.1L798.7 489.5L803.8 494.5L796 486.1z" fill="#71ee00"/>
<path d="M798.7 489.5L802.6 495L807.7 498.8L803.8 494.5z" fill="#5aeb00"/>
<path d="M630.7 350.6L639.2 354.1L644.3 351.3L635.8 347.8z" fill="#ff0000"/>
<path d="M639.2 354.1L647.1 357.4L652.2 354.6L644.3 351.3z" fill="#ff0000"/>
<path d="M647.1 357.4L654.3 360.3L659.4 357.5L652.2 354.6z" fill="#ff0000"/>
<path d="M654.3 360.3L661.5 363.3L666.6 360.5L659.4 357.5z" fill="#ff0000"/>
<path d="M661.5 363.3L668.7 366.3L673.8 363.5L666.6 360.5z" fill="#ff0000"/>
<path d="M668.7 366.3L675.8 369.3L681 366.5L673.8 363.5z" fill="#ff0000"/>
<path d="M675.8 369.3L683 372.3L688.2 369.5L681 366.5z" fill="#ff0000"/>
<path d="M683 372.3L690.9 375.5L696 372.7L688.2 369.5z" fill="#ff0000"/>
<path d="M690.9 375.5L698.1 379.8L703.2 377L696 372.7z" fill="#ff0000"/>
<path d="M698.1 379.8L705.3 382.8L710.4 380L703.2 377z" fill="#ff0000"/>
<path d="M705.3 382.8L712.5 388.4L717.6 385.6L710.4 380z" fill="#ff0000"/>
<path d="M712.5 388.4L719.7 393.9L724.8 391.2L717.6 385.6z" fill="#ff0700"/>
<path d="M719.7 393.9L726.9 399.5L732 396.7L724.8 391.2z" fill="#ff1400"/>
<path d="M726.9 399.5L734.7 405.4L739.8 402.6L732 396.7z" fill="#ff2200"/>
<path d="M734.7 405.4L741.9 411L747 408.2L739.8 402.6z" fill="#ff3000"/>
<path d="M741.9 411L745.2 414.9L750.3 412.1L747 408.2z" fill="#ff3f00"/>
<path d="M745.2 414.9L749.1 419.2L754.2 416.4L750.3 412.1z" fill="#ff4d00"/>
<path d="M749.1 419.2L756.3 430L761.4 427.2L754.2 416.4z" fill="#ff6700"/>
<path d="M756.3 430L763.5 442.1L768.6 439.3L761.4 427.2z" fill="#ff9f00"/>
<path d="M763.5 442.1L771.3 462.3L776.5 459.5L768.6 439.3z" fill="#ffef00"/>
<path d="M771.3 462.3L778.5 474.4L783.7 471.6L776.5 459.5z" fill="#d6fd00"/>
<path d="M778.5 474.4L785.7 483.8L790.9 481.1L783.7 471.6z" fill="#acf700"/>
<path d="M785.7 483.8L793.6 489.7L798.7 489.5L790.9 481.1z" fill="#90f300"/>
<path d="M793.6 489.7L797.5 493.9L802.6 495L798.7 489.5z" fill="#78ef00"/>
<path d="M625.6 353.4L634.1 356.9L639.2 354.1L630.7 350.6z" fill="#ff0000"/>
<path d="M634.1 356.9L641.9 360.2L647.1 357.4L639.2 354.1z" fill="#ff0000"/>
<path d="M641.9 360.2L649.1 363.1L654.3 360.3L647.1 357.4z" fill="#ff0000"/>
<path d="M649.1 363.1L656.3 366.1L661.5 363.3L654.3 360.3z" fill="#ff0000"/>
<path d="M656.3 366.1L663.5 369.1L668.7 366.3L661.5 363.3z" fill="#ff0000"/>
<path d="M663.5 369.1L670.7 372.1L675.8 369.3L668.7 366.3z" fill="#ff0000"/>
<path d="M670.7 372.1L677.9 375.1L683 372.3L675.8 369.3z" fill="#ff0000"/>
<path d="M677.9 375.1L685.8 378.3L690.9 375.5L683 372.3z" fill="#ff0000"/>
<path d="M685.8 378.3L693 382.6L698.1 379.8L690.9 375.5z" fill="#ff0000"/>
<path d="M693 382.6L700.2 385.6L705.3 382.8L698.1 379.8z" fill="#ff0000"/>
<path d="M700.2 385.6L707.4 391.2L712.5 388.4L705.3 382.8z" fill="#ff0000"/>
<path d="M707.4 391.2L714.5 396.7L719.7 393.9L712.5 388.4z" fill="#ff0700"/>
<path d="M714.5 396.7L721.8 402.3L726.9 399.5L719.7 393.9z" fill="#ff1400"/>
<path d="M721.8 402.3L729.6 408.2L734.7 405.4L726.9 399.5z" fill="#ff2200"/>
<path d="M729.6 408.2L736.8 413.8L741.9 411L734.7 405.4z" fill="#ff3000"/>
<path d="M736.8 413.8L740.1 417.7L745.2 414.9L741.9 411z" fill="#ff3f00"/>
<path d="M740.1 417.7L744 422L749.1 419.2L745.2 414.9z" fill="#ff4d00"/>
<path d="M744 422L751.2 432.8L756.3 430L749.1 419.2z" fill="#ff6700"/>
<path d="M751.2 432.8L758.4 444.9L763.5 442.1L756.3 430z" fill="#ff9f00"/>
<path d="M758.4 444.9L766.2 465L771.3 462.3L763.5 442.1z" fill="#ffef00"/>
<path d="M766.2 465L773.4 477.2L778.5 474.4L771.3 462.3z" fill="#d6fd00"/>
<path d="M773.4 477.2L780.6 486.6L785.7 483.8L778.5 474.4z" fill="#acf700"/>
<path d="M780.6 486.6L788.5 492.5L793.6 489.7L785.7 483.8z" fill="#93f300"/>
<path d="M788.5 492.5L792.4 496.7L797.5 493.9L793.6 489.7z" fill="#83f100"/>
<path d="M620.5 356.2L629 359.7L634.1 356.9L625.6 353.4z" fill="#ff0000"/>
<path d="M629 359.7L636.8 362.9L641.9 360.2L634.1 356.9z" fill="#ff0000"/>
<path d="M636.8 362.9L644 365.9L649.1 363.1L641.9 360.2z" fill="#ff0000"/>
<path d="M644 365.9L651.2 368.9L656.3 366.1L649.1 363.1z" fill="#ff0000"/>
<path d="M651.2 368.9L658.4 371.9L663.5 369.1L656.3 366.1z" fill="#ff0000"/>
<path d="M658.4 371.9L665.6 374.9L670.7 372.1L663.5 369.1z" fill="#ff0000"/>
<path d="M665.6 374.9L672.8 377.9L677.9 375.1L670.7 372.1z" fill="#ff0000"/>
<path d="M672.8 377.9L680.7 381.1L685.8 378.3L677.9 375.1z" fill="#ff0000"/>
<path d="M680.7 381.1L687.8 385.4L693 382.6L685.8 378.3z" fill="#ff0000"/>
<path d="M687.8 385.4L695.1 388.4L700.2 385.6L693 382.6z" fill="#ff0000"/>
<path d="M695.1 388.4L702.2 394L707.4 391.2L700.2 385.6z" fill="#ff0000"/>
<path d="M702.2 394L709.4 399.5L714.5 396.7L707.4 391.2z" fill="#ff0700"/>
<path d="M709.4 399.5L716.6 405.1L721.8 402.3L714.5 396.7z" fill="#ff1400"/>
<path d="M716.6 405.1L724.5 411L729.6 408.2L721.8 402.3z" fill="#ff2200"/>
<path d="M724.5 411L731.7 416.6L736.8 413.8L729.6 408.2z" fill="#ff3000"/>
<path d="M731.7 416.6L734.9 420.5L740.1 417.7L736.8 413.8z" fill="#ff3f00"/>
<path d="M734.9 420.5L738.9 424.8L744 422L740.1 417.7z" fill="#ff4d00"/>
<path d="M738.9 424.8L746.1 435.6L751.2 432.8L744 422z" fill="#ff6700"/>
<path d="M746.1 435.6L753.3 447.7L758.4 444.9L751.2 432.8z" fill="#ff9f00"/>
<path d="M753.3 447.7L761.1 467.8L766.2 465L758.4 444.9z" fill="#ffef00"/>
<path d="M761.1 467.8L768.3 479.9L773.4 477.2L766.2 465z" fill="#d6fd00"/>
<path d="M768.3 479.9L775.5 489.4L780.6 486.6L773.4 477.2z" fill="#acf700"/>
<path d="M775.5 489.4L783.4 495.3L788.5 492.5L780.6 486.6z" fill="#93f300"/>
<path d="M783.4 495.3L787.3 499.5L792.4 496.7L788.5 492.5z" fill="#83f100"/>
<path d="M615.4 359L623.9 362.5L629 359.7L620.5 356.2z" fill="#ff0000"/>
<path d="M623.9 362.5L631.7 365.7L636.8 362.9L629 359.7z" fill="#ff0000"/>
<path d="M631.7 365.7L638.9 368.7L644 365.9L636.8 362.9z" fill="#ff0000"/>
<path d="M638.9 368.7L646.1 371.7L651.2 368.9L644 365.9z" fill="#ff0000"/>
<path d="M646.1 371.7L653.3 374.7L658.4 371.9L651.2 368.9z" fill="#ff0000"/>
<path d="M653.3 374.7L660.5 377.7L665.6 374.9L658.4 371.9z" fill="#ff0000"/>
<path d="M660.5 377.7L667.7 380.6L672.8 377.9L665.6 374.9z" fill="#ff0000"/>
<path d="M667.7 380.6L675.5 383.9L680.7 381.1L672.8 377.9z" fill="#ff0000"/>
<path d="M675.5 383.9L682.7 388.2L687.8 385.4L680.7 381.1z" fill="#ff0000"/>
<path d="M682.7 388.2L689.9 391.2L695.1 388.4L687.8 385.4z" fill="#ff0000"/>
<path d="M689.9 391.2L697.1 396.8L702.2 394L695.1 388.4z" fill="#ff0000"/>
<path d="M697.1 396.8L704.3 402.3L709.4 399.5L702.2 394z" fill="#ff0700"/>
<path d="M704.3 402.3L711.5 407.9L716.6 405.1L709.4 399.5z" fill="#ff1400"/>
<path d="M711.5 407.9L719.4 413.8L724.5 411L716.6 405.1z" fill="#ff2200"/>
<path d="M719.4 413.8L726.6 419.4L731.7 416.6L724.5 411z" fill="#ff3000"/>
<path d="M726.6 419.4L729.8 423.3L734.9 420.5L731.7 416.6z" fill="#ff3f00"/>
<path d="M729.8 423.3L733.8 427.6L738.9 424.8L734.9 420.5z" fill="#ff4d00"/>
<path d="M733.8 427.6L740.9 438.4L746.1 435.6L738.9 424.8z" fill="#ff6700"/>
<path d="M740.9 438.4L748.1 450.5L753.3 447.7L746.1 435.6z" fill="#ff9f00"/>
<path d="M748.1 450.5L756 470.6L761.1 467.8L753.3 447.7z" fill="#ffef00"/>
<path d="M756 470.6L763.2 482.7L768.3 479.9L761.1 467.8z" fill="#d6fd00"/>
<path d="M763.2 482.7L770.4 492.2L775.5 489.4L768.3 479.9z" fill="#acf700"/>
<path d="M770.4 492.2L778.2 498.1L783.4 495.3L775.5 489.4z" fill="#93f300"/>
<path d="M778.2 498.1L782.2 502.3L787.3 499.5L783.4 495.3z" fill="#83f100"/>
<path d="M610.2 361.8L618.7 365.3L623.9 362.5L615.4 359z" fill="#ff0000"/>
<path d="M618.7 365.3L626.6 368.5L631.7 365.7L623.9 362.5z" fill="#ff0000"/>
<path d="M626.6 368.5L633.8 371.5L638.9 368.7L631.7 365.7z" fill="#ff0000"/>
<path d="M633.8 371.5L641 374.5L646.1 371.7L638.9 368.7z" fill="#ff0000"/>
<path d="M641 374.5L648.2 377.5L653.3 374.7L646.1 371.7z" fill="#ff0000"/>
<path d="M648.2 377.5L655.4 380.5L660.5 377.7L653.3 374.7z" fill="#ff0000"/>
<path d="M655.4 380.5L662.6 383.4L667.7 380.6L660.5 377.7z" fill="#ff0000"/>
<path d="M662.6 383.4L670.4 386.7L675.5 383.9L667.7 380.6z" fill="#ff0000"/>
<path d="M670.4 386.7L677.6 391L682.7 388.2L675.5 383.9z" fill="#ff0000"/>
<path d="M677.6 391L684.8 394L689.9 391.2L682.7 388.2z" fill="#ff0000"/>
<path d="M684.8 394L692 399.5L697.1 396.8L689.9 391.2z" fill="#ff0000"/>
<path d="M692 399.5L699.2 405.1L704.3 402.3L697.1 396.8z" fill="#ff0700"/>
<path d="M699.2 405.1L706.4 410.7L711.5 407.9L704.3 402.3z" fill="#ff1400"/>
<path d="M706.4 410.7L714.2 416.6L719.4 413.8L711.5 407.9z" fill="#ff2200"/>
<path d="M714.2 416.6L721.4 422.2L726.6 419.4L719.4 413.8z" fill="#ff3000"/>
<path d="M721.4 422.2L724.7 426.1L729.8 423.3L726.6 419.4z" fill="#ff3f00"/>
<path d="M724.7 426.1L728.6 430.4L733.8 427.6L729.8 423.3z" fill="#ff4d00"/>
<path d="M728.6 430.4L735.8 441.2L740.9 438.4L733.8 427.6z" fill="#ff6700"/>
<path d="M735.8 441.2L743 453.3L748.1 450.5L740.9 438.4z" fill="#ff9f00"/>
<path d="M743 453.3L750.9 473.4L756 470.6L748.1 450.5z" fill="#ffef00"/>
<path d="M750.9 473.4L758.1 485.5L763.2 482.7L756 470.6z" fill="#d6fd00"/>
<path d="M758.1 485.5L765.3 495L770.4 492.2L763.2 482.7z" fill="#acf700"/>
<path d="M765.3 495L773.1 500.9L778.2 498.1L770.4 492.2z" fill="#93f300"/>
<path d="M773.1 500.9L777 505.1L782.2 502.3L778.2 498.1z" fill="#83f100"/>
<path d="M605.1 364.6L613.6 368.1L618.7 365.3L610.2 361.8z" fill="#ff0000"/>
<path d="M613.6 368.1L621.5 371.3L626.6 368.5L618.7 365.3z" fill="#ff0000"/>
<path d="M621.5 371.3L628.7 374.3L633.8 371.5L626.6 368.5z" fill="#ff0000"/>
<path d="M628.7 374.3L635.9 377.3L641 374.5L633.8 371.5z" fill="#ff0000"/>
<path d="M635.9 377.3L643.1 380.3L648.2 377.5L641 374.5z" fill="#ff0000"/>
<path d="M643.1 380.3L650.3 383.3L655.4 380.5L648.2 377.5z" fill="#ff0000"/>
<path d="M650.3 383.3L657.4 386.2L662.6 383.4L655.4 380.5z" fill="#ff0000"/>
<path d="M657.4 386.2L665.3 389.5L670.4 386.7L662.6 383.4z" fill="#ff0000"/>
<path d="M665.3 389.5L672.5 393.8L677.6 391L670.4 386.7z" fill="#ff0000"/>
<path d="M672.5 393.8L679.7 396.8L684.8 394L677.6 391z" fill="#ff0000"/>
<path d="M679.7 396.8L686.9 402.3L692 399.5L684.8 394z" fill="#ff0000"/>
<path d="M686.9 402.3L694.1 407.9L699.2 405.1L692 399.5z" fill="#ff0700"/>
<path d="M694.1 407.9L701.3 413.5L706.4 410.7L699.2 405.1z" fill="#ff1400"/>
<path d="M701.3 413.5L709.1 419.4L714.2 416.6L706.4 410.7z" fill="#ff2200"/>
<path d="M709.1 419.4L716.3 425L721.4 422.2L714.2 416.6z" fill="#ff3000"/>
<path d="M716.3 425L719.6 428.9L724.7 426.1L721.4 422.2z" fill="#ff3f00"/>
<path d="M719.6 428.9L723.5 433.2L728.6 430.4L724.7 426.1z" fill="#ff4d00"/>
<path d="M723.5 433.2L730.7 443.9L735.8 441.2L728.6 430.4z" fill="#ff6700"/>
<path d="M730.7 443.9L737.9 456.1L743 453.3L735.8 441.2z" fill="#ff9f00"/>
<path d="M737.9 456.1L745.8 476.2L750.9 473.4L743 453.3z" fill="#ffef00"/>
<path d="M745.8 476.2L753 488.3L758.1 485.5L750.9 473.4z" fill="#d6fd00"/>
<path d="M753 488.3L760.1 497.8L765.3 495L758.1 485.5z" fill="#acf700"/>
<path d="M760.1 497.8L768 503.7L773.1 500.9L765.3 495z" fill="#93f300"/>
<path d="M768 503.7L771.9 507.9L777 505.1L773.1 500.9z" fill="#83f100"/>
<path d="M600 367.4L608.5 370.9L613.6 368.1L605.1 364.6z" fill="#ff0000"/>
<path d="M608.5 370.9L616.3 374.1L621.5 371.3L613.6 368.1z" fill="#ff0000"/>
<path d="M616.3 374.1L623.6 377.1L628.7 374.3L621.5 371.3z" fill="#ff0000"/>
<path d="M623.6 377.1L630.7 380.1L635.9 377.3L628.7 374.3z" fill="#ff0000"/>
<path d="M630.7 380.1L638 383.1L643.1 380.3L635.9 377.3z" fill="#ff0000"/>
<path d="M638 383.1L645.1 386.1L650.3 383.3L643.1 380.3z" fill="#ff0000"/>
<path d="M645.1 386.1L652.3 389L657.4 386.2L650.3 383.3z" fill="#ff0000"/>
<path d="M652.3 389L660.2 392.3L665.3 389.5L657.4 386.2z" fill="#ff0000"/>
<path d="M660.2 392.3L667.4 396.6L672.5 393.8L665.3 389.5z" fill="#ff0000"/>
<path d="M667.4 396.6L674.6 399.6L679.7 396.8L672.5 393.8z" fill="#ff0000"/>
<path d="M674.6 399.6L681.8 405.1L686.9 402.3L679.7 396.8z" fill="#ff0000"/>
<path d="M681.8 405.1L689 410.7L694.1 407.9L686.9 402.3z" fill="#ff0700"/>
<path d="M689 410.7L696.2 416.3L701.3 413.5L694.1 407.9z" fill="#ff1400"/>
<path d="M696.2 416.3L704 422.2L709.1 419.4L701.3 413.5z" fill="#ff2200"/>
<path d="M704 422.2L711.2 427.8L716.3 425L709.1 419.4z" fill="#ff3000"/>
<path d="M711.2 427.8L714.5 431.7L719.6 428.9L716.3 425z" fill="#ff3f00"/>
<path d="M714.5 431.7L718.4 435.9L723.5 433.2L719.6 428.9z" fill="#ff4d00"/>
<path d="M718.4 435.9L725.6 446.7L730.7 443.9L723.5 433.2z" fill="#ff6700"/>
<path d="M725.6 446.7L732.8 458.8L737.9 456.1L730.7 443.9z" fill="#ff9f00"/>
<path d="M732.8 458.8L740.6 479L745.8 476.2L737.9 456.1z" fill="#ffef00"/>
<path d="M740.6 479L747.8 491.1L753 488.3L745.8 476.2z" fill="#d6fd00"/>
<path d="M747.8 491.1L755 500.6L760.1 497.8L753 488.3z" fill="#acf700"/>
<path d="M755 500.6L762.9 506.5L768 503.7L760.1 497.8z" fill="#93f300"/>
<path d="M762.9 506.5L766.8 510.7L771.9 507.9L768 503.7z" fill="#83f100"/>
<path d="M594.9 370.2L603.4 373.7L608.5 370.9L600 367.4z" fill="#ff0000"/>
<path d="M603.4 373.7L611.2 376.9L616.3 374.1L608.5 370.9z" fill="#ff0000"/>
<path d="M611.2 376.9L618.4 379.9L623.6 377.1L616.3 374.1z" fill="#ff0000"/>
<path d="M618.4 379.9L625.6 382.9L630.7 380.1L623.6 377.1z" fill="#ff0000"/>
<path d="M625.6 382.9L632.8 385.9L638 383.1L630.7 380.1z" fill="#ff0000"/>
<path d="M632.8 385.9L640 388.9L645.1 386.1L638 383.1z" fill="#ff0000"/>
<path d="M640 388.9L647.2 391.8L652.3 389L645.1 386.1z" fill="#ff0000"/>
<path d="M647.2 391.8L655.1 395.1L660.2 392.3L652.3 389z" fill="#ff0000"/>
<path d="M655.1 395.1L662.3 399.4L667.4 396.6L660.2 392.3z" fill="#ff0000"/>
<path d="M662.3 399.4L669.5 403.7L674.6 399.6L667.4 396.6z" fill="#ff0000"/>
<path d="M669.5 403.7L676.7 407.9L681.8 405.1L674.6 399.6z" fill="#ff0000"/>
<path d="M676.7 407.9L683.8 413.5L689 410.7L681.8 405.1z" fill="#ff0700"/>
<path d="M683.8 413.5L691 420.4L696.2 416.3L689 410.7z" fill="#ff1600"/>
<path d="M691 420.4L698.9 427.6L704 422.2L696.2 416.3z" fill="#ff2700"/>
<path d="M698.9 427.6L706.1 434.5L711.2 427.8L704 422.2z" fill="#ff3900"/>
<path d="M706.1 434.5L709.4 439.7L714.5 431.7L711.2 427.8z" fill="#ff4b00"/>
<path d="M709.4 439.7L713.3 444L718.4 435.9L714.5 431.7z" fill="#ff5a00"/>
<path d="M713.3 444L720.5 454.8L725.6 446.7L718.4 435.9z" fill="#ff7700"/>
<path d="M720.5 454.8L727.7 465.6L732.8 458.8L725.6 446.7z" fill="#ffad00"/>
<path d="M727.7 465.6L735.5 484.4L740.6 479L732.8 458.8z" fill="#fcf400"/>
<path d="M735.5 484.4L742.7 496.5L747.8 491.1L740.6 479z" fill="#d0fc00"/>
<path d="M742.7 496.5L749.9 507.3L755 500.6L747.8 491.1z" fill="#a3f600"/>
<path d="M749.9 507.3L757.8 511.9L762.9 506.5L755 500.6z" fill="#8af200"/>
<path d="M757.8 511.9L761.7 513.5L766.8 510.7L762.9 506.5z" fill="#7ef000"/>
<path d="M589.8 373L598.3 376.5L603.4 373.7L594.9 370.2z" fill="#ff0000"/>
<path d="M598.3 376.5L606.1 379.7L611.2 376.9L603.4 373.7z" fill="#ff0000"/>
<path d="M606.1 379.7L613.3 382.7L618.4 379.9L611.2 376.9z" fill="#ff0000"/>
<path d="M613.3 382.7L620.5 385.7L625.6 382.9L618.4 379.9z" fill="#ff0000"/>
<path d="M620.5 385.7L627.7 388.7L632.8 385.9L625.6 382.9z" fill="#ff0000"/>
<path d="M627.7 388.7L634.9 391.7L640 388.9L632.8 385.9z" fill="#ff0000"/>
<path d="M634.9 391.7L642.1 394.6L647.2 391.8L640 388.9z" fill="#ff0000"/>
<path d="M642.1 394.6L649.9 397.9L655.1 395.1L647.2 391.8z" fill="#ff0000"/>
<path d="M649.9 397.9L657.1 402.2L662.3 399.4L655.1 395.1z" fill="#ff0000"/>
<path d="M657.1 402.2L664.3 406.5L669.5 403.7L662.3 399.4z" fill="#ff0000"/>
<path d="M664.3 406.5L671.5 412L676.7 407.9L669.5 403.7z" fill="#ff0000"/>
<path d="M671.5 412L678.7 417.6L683.8 413.5L676.7 407.9z" fill="#ff0a00"/>
<path d="M678.7 417.6L685.9 424.5L691 420.4L683.8 413.5z" fill="#ff1b00"/>
<path d="M685.9 424.5L693.8 433L698.9 427.6L691 420.4z" fill="#ff3200"/>
<path d="M693.8 433L701 441.2L706.1 434.5L698.9 427.6z" fill="#ff4b00"/>
<path d="M701 441.2L704.2 447.7L709.4 439.7L706.1 434.5z" fill="#ff6200"/>
<path d="M704.2 447.7L708.2 454.6L713.3 444L709.4 439.7z" fill="#ff7b00"/>
<path d="M708.2 454.6L715.4 464.1L720.5 454.8L713.3 444z" fill="#ffa100"/>
<path d="M715.4 464.1L722.6 472.3L727.7 465.6L720.5 454.8z" fill="#ffcb00"/>
<path d="M722.6 472.3L730.4 487.2L735.5 484.4L727.7 465.6z" fill="#f8fb00"/>
<path d="M730.4 487.2L737.6 496.7L742.7 496.5L735.5 484.4z" fill="#cdfc00"/>
<path d="M737.6 496.7L744.8 504.9L749.9 507.3L742.7 496.5z" fill="#a5f600"/>
<path d="M744.8 504.9L752.6 506.9L757.8 511.9L749.9 507.3z" fill="#93f300"/>
<path d="M752.6 506.9L756.6 508.5L761.7 513.5L757.8 511.9z" fill="#93f300"/>
<path d="M584.6 375.8L593.2 379.3L598.3 376.5L589.8 373z" fill="#ff0000"/>
<path d="M593.2 379.3L601 382.5L606.1 379.7L598.3 376.5z" fill="#ff0000"/>
<path d="M601 382.5L608.2 385.5L613.3 382.7L606.1 379.7z" fill="#ff0000"/>
<path d="M608.2 385.5L615.4 388.5L620.5 385.7L613.3 382.7z" fill="#ff0000"/>
<path d="M615.4 388.5L622.6 391.5L627.7 388.7L620.5 385.7z" fill="#ff0000"/>
<path d="M622.6 391.5L629.8 394.4L634.9 391.7L627.7 388.7z" fill="#ff0000"/>
<path d="M629.8 394.4L637 397.4L642.1 394.6L634.9 391.7z" fill="#ff0000"/>
<path d="M637 397.4L644.8 400.7L649.9 397.9L642.1 394.6z" fill="#ff0000"/>
<path d="M644.8 400.7L652 405L657.1 402.2L649.9 397.9z" fill="#ff0000"/>
<path d="M652 405L659.2 409.3L664.3 406.5L657.1 402.2z" fill="#ff0000"/>
<path d="M659.2 409.3L666.4 414.8L671.5 412L664.3 406.5z" fill="#ff0000"/>
<path d="M666.4 414.8L673.6 421.7L678.7 417.6L671.5 412z" fill="#ff0f00"/>
<path d="M673.6 421.7L680.8 429.9L685.9 424.5L678.7 417.6z" fill="#ff2300"/>
<path d="M680.8 429.9L688.6 439.7L693.8 433L685.9 424.5z" fill="#ff4100"/>
<path d="M688.6 439.7L695.9 450.5L701 441.2L693.8 433z" fill="#ff6100"/>
<path d="M695.9 450.5L699.1 458.3L704.2 447.7L701 441.2z" fill="#ff8700"/>
<path d="M699.1 458.3L703 466.5L708.2 454.6L704.2 447.7z" fill="#ffad00"/>
<path d="M703 466.5L710.2 473.4L715.4 464.1L708.2 454.6z" fill="#ffcf00"/>
<path d="M710.2 473.4L717.4 480.3L722.6 472.3L715.4 464.1z" fill="#ffed00"/>
<path d="M717.4 480.3L725.3 492.6L730.4 487.2L722.6 472.3z" fill="#efff00"/>
<path d="M725.3 492.6L732.5 498.2L737.6 496.7L730.4 487.2z" fill="#cefc00"/>
<path d="M732.5 498.2L739.7 503.8L744.8 504.9L737.6 496.7z" fill="#b7f900"/>
<path d="M739.7 503.8L747.5 504.5L752.6 506.9L744.8 504.9z" fill="#b2f800"/>
<path d="M747.5 504.5L751.4 503.5L756.6 508.5L752.6 506.9z" fill="#bbf900"/>
<path d="M580.6 378L589.1 381.5L593.2 379.3L584.6 375.8z" fill="#ff0000"/>
<path d="M589.1 381.5L596.9 384.8L601 382.5L593.2 379.3z" fill="#ff0000"/>
<path d="M596.9 384.8L604.1 387.7L608.2 385.5L601 382.5z" fill="#ff0000"/>
<path d="M604.1 387.7L611.3 390.7L615.4 388.5L608.2 385.5z" fill="#ff0000"/>
<path d="M611.3 390.7L618.5 393.7L622.6 391.5L615.4 388.5z" fill="#ff0000"/>
<path d="M618.5 393.7L625.7 396.7L629.8 394.4L622.6 391.5z" fill="#ff0000"/>
<path d="M625.7 396.7L632.9 399.7L637 397.4L629.8 394.4z" fill="#ff0000"/>
<path d="M632.9 399.7L640.7 402.9L644.8 400.7L637 397.4z" fill="#ff0000"/>
<path d="M640.7 402.9L647.9 407.2L652 405L644.8 400.7z" fill="#ff0000"/>
<path d="M647.9 407.2L655.1 411.5L659.2 409.3L652 405z" fill="#ff0000"/>
<path d="M655.1 411.5L662.3 417.1L666.4 414.8L659.2 409.3z" fill="#ff0000"/>
<path d="M662.3 417.1L669.5 424L673.6 421.7L666.4 414.8z" fill="#ff1100"/>
<path d="M669.5 424L676.7 432.2L680.8 429.9L673.6 421.7z" fill="#ff2900"/>
<path d="M676.7 432.2L684.6 443.2L688.6 439.7L680.8 429.9z" fill="#ff4b00"/>
<path d="M684.6 443.2L691.8 454L695.9 450.5L688.6 439.7z" fill="#ff7200"/>
<path d="M691.8 454L695 463.2L699.1 458.3L695.9 450.5z" fill="#ffa500"/>
<path d="M695 463.2L699 472.6L703 466.5L699.1 458.3z" fill="#ffd100"/>
<path d="M699 472.6L706.1 482.1L710.2 473.4L703 466.5z" fill="#fdf300"/>
<path d="M706.1 482.1L713.3 491.6L717.4 480.3L710.2 473.4z" fill="#f2ff00"/>
<path d="M713.3 491.6L721.2 509.2L725.3 492.6L717.4 480.3z" fill="#cdfc00"/>
<path d="M721.2 509.2L728.4 505.7L732.5 498.2L725.3 492.6z" fill="#b2f800"/>
<path d="M728.4 505.7L735.6 503.4L739.7 503.8L732.5 498.2z" fill="#bbf900"/>
<path d="M735.6 503.4L743.4 502.8L747.5 504.5L739.7 503.8z" fill="#c8fb00"/>
<path d="M743.4 502.8L747.4 501.8L751.4 503.5L747.5 504.5z" fill="#d6fd00"/>
<path d="M576.5 380.2L585 383.7L589.1 381.5L580.6 378z" fill="#ff0000"/>
<path d="M585 383.7L592.8 387L596.9 384.8L589.1 381.5z" fill="#ff0000"/>
<path d="M592.8 387L600 390L604.1 387.7L596.9 384.8z" fill="#ff0000"/>
<path d="M600 390L607.2 393L611.3 390.7L604.1 387.7z" fill="#ff0000"/>
<path d="M607.2 393L614.4 395.9L618.5 393.7L611.3 390.7z" fill="#ff0000"/>
<path d="M614.4 395.9L621.6 398.9L625.7 396.7L618.5 393.7z" fill="#ff0000"/>
<path d="M621.6 398.9L628.8 401.9L632.9 399.7L625.7 396.7z" fill="#ff0000"/>
<path d="M628.8 401.9L636.6 405.2L640.7 402.9L632.9 399.7z" fill="#ff0000"/>
<path d="M636.6 405.2L643.8 409.4L647.9 407.2L640.7 402.9z" fill="#ff0000"/>
<path d="M643.8 409.4L651 413.7L655.1 411.5L647.9 407.2z" fill="#ff0000"/>
<path d="M651 413.7L658.2 419.3L662.3 417.1L655.1 411.5z" fill="#ff0000"/>
<path d="M658.2 419.3L665.4 426.2L669.5 424L662.3 417.1z" fill="#ff1100"/>
<path d="M665.4 426.2L672.6 434.4L676.7 432.2L669.5 424z" fill="#ff2900"/>
<path d="M672.6 434.4L680.5 445.5L684.6 443.2L676.7 432.2z" fill="#ff4d00"/>
<path d="M680.5 445.5L687.7 458.9L691.8 454L684.6 443.2z" fill="#ff7b00"/>
<path d="M687.7 458.9L690.9 468L695 463.2L691.8 454z" fill="#ffb300"/>
<path d="M690.9 468L694.9 478.8L699 472.6L695 463.2z" fill="#ffe500"/>
<path d="M694.9 478.8L702 488.3L706.1 482.1L699 472.6z" fill="#f5ff00"/>
<path d="M702 488.3L709.3 497.8L713.3 491.6L706.1 482.1z" fill="#d8fd00"/>
<path d="M709.3 497.8L717.1 514L721.2 509.2L713.3 491.6z" fill="#a3f600"/>
<path d="M717.1 514L724.3 509.2L728.4 505.7L721.2 509.2z" fill="#91f300"/>
<path d="M724.3 509.2L731.5 503.1L735.6 503.4L728.4 505.7z" fill="#b9f900"/>
<path d="M731.5 503.1L739.3 497.2L743.4 502.8L735.6 503.4z" fill="#dbfd00"/>
<path d="M739.3 497.2L743.3 491L747.4 501.8L743.4 502.8z" fill="#f5ff00"/>
<path d="M572.4 383.8L580.9 387.3L585 383.7L576.5 380.2z" fill="#ff0000"/>
<path d="M580.9 387.3L588.7 390.5L592.8 387L585 383.7z" fill="#ff0000"/>
<path d="M588.7 390.5L595.9 393.5L600 390L592.8 387z" fill="#ff0000"/>
<path d="M595.9 393.5L603.1 396.5L607.2 393L600 390z" fill="#ff0000"/>
<path d="M603.1 396.5L610.3 399.5L614.4 395.9L607.2 393z" fill="#ff0000"/>
<path d="M610.3 399.5L617.5 402.5L621.6 398.9L614.4 395.9z" fill="#ff0000"/>
<path d="M617.5 402.5L624.7 405.4L628.8 401.9L621.6 398.9z" fill="#ff0000"/>
<path d="M624.7 405.4L632.5 408.7L636.6 405.2L628.8 401.9z" fill="#ff0000"/>
<path d="M632.5 408.7L639.7 413L643.8 409.4L636.6 405.2z" fill="#ff0000"/>
<path d="M639.7 413L646.9 417.3L651 413.7L643.8 409.4z" fill="#ff0000"/>
<path d="M646.9 417.3L654.1 422.8L658.2 419.3L651 413.7z" fill="#ff0300"/>
<path d="M654.1 422.8L661.3 429.7L665.4 426.2L658.2 419.3z" fill="#ff1400"/>
<path d="M661.3 429.7L668.5 437.9L672.6 434.4L665.4 426.2z" fill="#ff2c00"/>
<path d="M668.5 437.9L676.4 450.3L680.5 445.5L672.6 434.4z" fill="#ff5200"/>
<path d="M676.4 450.3L683.6 462.4L687.7 458.9L680.5 445.5z" fill="#ff8700"/>
<path d="M683.6 462.4L686.8 472.9L690.9 468L687.7 458.9z" fill="#ffc100"/>
<path d="M686.8 472.9L690.8 484.9L694.9 478.8L690.9 468z" fill="#fcf400"/>
<path d="M690.8 484.9L698 491.8L702 488.3L694.9 478.8z" fill="#e7fe00"/>
<path d="M698 491.8L705.2 498.7L709.3 497.8L702 488.3z" fill="#d0fc00"/>
<path d="M705.2 498.7L713 511.1L717.1 514L709.3 497.8z" fill="#a3f600"/>
<path d="M713 511.1L720.2 504.9L724.3 509.2L717.1 514z" fill="#9cf400"/>
<path d="M720.2 504.9L727.4 500.1L731.5 503.1L724.3 509.2z" fill="#cbfc00"/>
<path d="M727.4 500.1L735.2 494.2L739.3 497.2L731.5 503.1z" fill="#f2ff00"/>
<path d="M735.2 494.2L739.2 489.3L743.3 491L739.3 497.2z" fill="#ffe500"/>
<path d="M568.3 389.9L576.8 393.4L580.9 387.3L572.4 383.8z" fill="#ff0000"/>
<path d="M576.8 393.4L584.6 396.7L588.7 390.5L580.9 387.3z" fill="#ff0000"/>
<path d="M584.6 396.7L591.8 399.7L595.9 393.5L588.7 390.5z" fill="#ff0000"/>
<path d="M591.8 399.7L599 402.6L603.1 396.5L595.9 393.5z" fill="#ff0000"/>
<path d="M599 402.6L606.2 405.6L610.3 399.5L603.1 396.5z" fill="#ff0000"/>
<path d="M606.2 405.6L613.4 408.6L617.5 402.5L610.3 399.5z" fill="#ff0000"/>
<path d="M613.4 408.6L620.6 411.6L624.7 405.4L617.5 402.5z" fill="#ff0000"/>
<path d="M620.6 411.6L628.5 414.8L632.5 408.7L624.7 405.4z" fill="#ff0000"/>
<path d="M628.5 414.8L635.6 419.1L639.7 413L632.5 408.7z" fill="#ff0000"/>
<path d="M635.6 419.1L642.8 423.4L646.9 417.3L639.7 413z" fill="#ff0700"/>
<path d="M642.8 423.4L650 429L654.1 422.8L646.9 417.3z" fill="#ff1100"/>
<path d="M650 429L657.2 434.6L661.3 429.7L654.1 422.8z" fill="#ff2000"/>
<path d="M657.2 434.6L664.4 441.5L668.5 437.9L661.3 429.7z" fill="#ff3600"/>
<path d="M664.4 441.5L672.3 453.8L676.4 450.3L668.5 437.9z" fill="#ff5a00"/>
<path d="M672.3 453.8L679.5 467.2L683.6 462.4L676.4 450.3z" fill="#ff9400"/>
<path d="M679.5 467.2L682.7 477.7L686.8 472.9L683.6 462.4z" fill="#ffcf00"/>
<path d="M682.7 477.7L686.7 489.8L690.8 484.9L686.8 472.9z" fill="#f7fc00"/>
<path d="M686.7 489.8L693.9 496.6L698 491.8L690.8 484.9z" fill="#dbfd00"/>
<path d="M693.9 496.6L701.1 503.5L705.2 498.7L698 491.8z" fill="#c9fb00"/>
<path d="M701.1 503.5L708.9 513.3L713 511.1L705.2 498.7z" fill="#a9f600"/>
<path d="M708.9 513.3L716.1 507.2L720.2 504.9L713 511.1z" fill="#acf700"/>
<path d="M716.1 507.2L723.3 502.3L727.4 500.1L720.2 504.9z" fill="#d8fd00"/>
<path d="M723.3 502.3L731.2 496.5L735.2 494.2L727.4 500.1z" fill="#f8fa00"/>
<path d="M731.2 496.5L735.1 491.6L739.2 489.3L735.2 494.2z" fill="#ffd700"/>
<path d="M564.2 401.3L572.7 404.8L576.8 393.4L568.3 389.9z" fill="#ff1e00"/>
<path d="M572.7 404.8L580.5 408L584.6 396.7L576.8 393.4z" fill="#ff1e00"/>
<path d="M580.5 408L587.7 411L591.8 399.7L584.6 396.7z" fill="#ff1e00"/>
<path d="M587.7 411L594.9 412.7L599 402.6L591.8 399.7z" fill="#ff1d00"/>
<path d="M594.9 412.7L602.1 415.7L606.2 405.6L599 402.6z" fill="#ff1b00"/>
<path d="M602.1 415.7L609.3 418.7L613.4 408.6L606.2 405.6z" fill="#ff1b00"/>
<path d="M609.3 418.7L616.5 421.6L620.6 411.6L613.4 408.6z" fill="#ff1b00"/>
<path d="M616.5 421.6L624.4 424.9L628.5 414.8L620.6 411.6z" fill="#ff1b00"/>
<path d="M624.4 424.9L631.5 427.9L635.6 419.1L628.5 414.8z" fill="#ff1d00"/>
<path d="M631.5 427.9L638.8 432.2L642.8 423.4L635.6 419.1z" fill="#ff2200"/>
<path d="M638.8 432.2L645.9 436.4L650 429L642.8 423.4z" fill="#ff2b00"/>
<path d="M645.9 436.4L653.1 440.7L657.2 434.6L650 429z" fill="#ff3600"/>
<path d="M653.1 440.7L660.3 447.6L664.4 441.5L657.2 434.6z" fill="#ff4600"/>
<path d="M660.3 447.6L668.2 460L672.3 453.8L664.4 441.5z" fill="#ff6700"/>
<path d="M668.2 460L675.4 473.4L679.5 467.2L672.3 453.8z" fill="#ffa700"/>
<path d="M675.4 473.4L678.7 485.2L682.7 477.7L679.5 467.2z" fill="#ffe500"/>
<path d="M678.7 485.2L682.6 495.9L686.7 489.8L682.7 477.7z" fill="#ebfe00"/>
<path d="M682.6 495.9L689.8 501.5L693.9 496.6L686.7 489.8z" fill="#cefc00"/>
<path d="M689.8 501.5L697 507.1L701.1 503.5L693.9 496.6z" fill="#bdfa00"/>
<path d="M697 507.1L704.8 515.5L708.9 513.3L701.1 503.5z" fill="#a3f600"/>
<path d="M704.8 515.5L712 509.4L716.1 507.2L708.9 513.3z" fill="#acf700"/>
<path d="M712 509.4L719.2 504.6L723.3 502.3L716.1 507.2z" fill="#d8fd00"/>
<path d="M719.2 504.6L727.1 500L731.2 496.5L723.3 502.3z" fill="#f8fb00"/>
<path d="M727.1 500L731 496.4L735.1 491.6L731.2 496.5z" fill="#ffdd00"/>
<path d="M560.1 421.7L568.6 425.3L572.7 404.8L564.2 401.3z" fill="#ff6700"/>
<path d="M568.6 425.3L576.4 428.5L580.5 408L572.7 404.8z" fill="#ff6700"/>
<path d="M576.4 428.5L583.6 431.5L587.7 411L580.5 408z" fill="#ff6700"/>
<path d="M583.6 431.5L590.8 431.9L594.9 412.7L587.7 411z" fill="#ff6200"/>
<path d="M590.8 431.9L598 434.9L602.1 415.7L594.9 412.7z" fill="#ff5d00"/>
<path d="M598 434.9L605.2 437.8L609.3 418.7L602.1 415.7z" fill="#ff5d00"/>
<path d="M605.2 437.8L612.4 440.8L616.5 421.6L609.3 418.7z" fill="#ff5d00"/>
<path d="M612.4 440.8L620.3 444.1L624.4 424.9L616.5 421.6z" fill="#ff5d00"/>
<path d="M620.3 444.1L627.5 447L631.5 427.9L624.4 424.9z" fill="#ff5d00"/>
<path d="M627.5 447L634.7 450L638.8 432.2L631.5 427.9z" fill="#ff5f00"/>
<path d="M634.7 450L641.8 453L645.9 436.4L638.8 432.2z" fill="#ff6200"/>
<path d="M641.8 453L649 456L653.1 440.7L645.9 436.4z" fill="#ff6600"/>
<path d="M649 456L656.2 461.6L660.3 447.6L653.1 440.7z" fill="#ff7000"/>
<path d="M656.2 461.6L664.1 472.6L668.2 460L660.3 447.6z" fill="#ff9800"/>
<path d="M664.1 472.6L671.3 484.7L675.4 473.4L668.2 460z" fill="#ffd100"/>
<path d="M671.3 484.7L674.6 495.2L678.7 485.2L675.4 473.4z" fill="#f7fc00"/>
<path d="M674.6 495.2L678.5 507.3L682.6 495.9L678.7 485.2z" fill="#cefc00"/>
<path d="M678.5 507.3L685.7 510.2L689.8 501.5L682.6 495.9z" fill="#b0f800"/>
<path d="M685.7 510.2L692.9 513.2L697 507.1L689.8 501.5z" fill="#a9f600"/>
<path d="M692.9 513.2L700.7 517.8L704.8 515.5L697 507.1z" fill="#9cf400"/>
<path d="M700.7 517.8L707.9 511.6L712 509.4L704.8 515.5z" fill="#acf700"/>
<path d="M707.9 511.6L715.1 505.5L719.2 504.6L712 509.4z" fill="#dafd00"/>
<path d="M715.1 505.5L723 508.8L727.1 500L719.2 504.6z" fill="#f5ff00"/>
<path d="M723 508.8L726.9 510.4L731 496.4L727.1 500z" fill="#fbf600"/>
<path d="M556 447.4L564.5 451L568.6 425.3L560.1 421.7z" fill="#ffeb00"/>
<path d="M564.5 451L572.3 454.2L576.4 428.5L568.6 425.3z" fill="#ffeb00"/>
<path d="M572.3 454.2L579.5 457.2L583.6 431.5L576.4 428.5z" fill="#ffeb00"/>
<path d="M579.5 457.2L586.7 456.3L590.8 431.9L583.6 431.5z" fill="#ffe100"/>
<path d="M586.7 456.3L593.9 459.2L598 434.9L590.8 431.9z" fill="#ffd700"/>
<path d="M593.9 459.2L601.1 462.2L605.2 437.8L598 434.9z" fill="#ffd700"/>
<path d="M601.1 462.2L608.3 465.2L612.4 440.8L605.2 437.8z" fill="#ffd700"/>
<path d="M608.3 465.2L616.2 468.4L620.3 444.1L612.4 440.8z" fill="#ffd700"/>
<path d="M616.2 468.4L623.4 471.4L627.5 447L620.3 444.1z" fill="#ffd700"/>
<path d="M623.4 471.4L630.6 475.7L634.7 450L627.5 447z" fill="#ffd900"/>
<path d="M630.6 475.7L637.8 480L641.8 453L634.7 450z" fill="#ffdd00"/>
<path d="M637.8 480L644.9 484.3L649 456L641.8 453z" fill="#ffe100"/>
<path d="M644.9 484.3L652.2 492.5L656.2 461.6L649 456z" fill="#ffef00"/>
<path d="M652.2 492.5L660 500.9L664.1 472.6L656.2 461.6z" fill="#f6fd00"/>
<path d="M660 500.9L667.2 510.4L671.3 484.7L664.1 472.6z" fill="#d8fd00"/>
<path d="M667.2 510.4L670.5 517L674.6 495.2L671.3 484.7z" fill="#b2f800"/>
<path d="M670.5 517L674.4 525.1L678.5 507.3L674.6 495.2z" fill="#85f100"/>
<path d="M674.4 525.1L681.6 525.5L685.7 510.2L678.5 507.3z" fill="#6cee00"/>
<path d="M681.6 525.5L688.8 525.9L692.9 513.2L685.7 510.2z" fill="#76ef00"/>
<path d="M688.8 525.9L696.6 523.9L700.7 517.8L692.9 513.2z" fill="#81f000"/>
<path d="M696.6 523.9L703.8 516.5L707.9 511.6L700.7 517.8z" fill="#a3f600"/>
<path d="M703.8 516.5L711 510.3L715.1 505.5L707.9 511.6z" fill="#d6fd00"/>
<path d="M711 510.3L718.9 516.2L723 508.8L715.1 505.5z" fill="#e7fe00"/>
<path d="M718.9 516.2L722.8 520.4L726.9 510.4L723 508.8z" fill="#e1fe00"/>
<path d="M551.9 474.4L560.4 477.9L564.5 451L556 447.4z" fill="#9ef500"/>
<path d="M560.4 477.9L568.2 481.2L572.3 454.2L564.5 451z" fill="#9ef500"/>
<path d="M568.2 481.2L575.4 484.2L579.5 457.2L572.3 454.2z" fill="#9ef500"/>
<path d="M575.4 484.2L582.6 483.2L586.7 456.3L579.5 457.2z" fill="#a9f600"/>
<path d="M582.6 483.2L589.8 484.9L593.9 459.2L586.7 456.3z" fill="#b6f800"/>
<path d="M589.8 484.9L597 487.9L601.1 462.2L593.9 459.2z" fill="#b7f900"/>
<path d="M597 487.9L604.2 490.9L608.3 465.2L601.1 462.2z" fill="#b7f900"/>
<path d="M604.2 490.9L612.1 494.1L616.2 468.4L608.3 465.2z" fill="#b7f900"/>
<path d="M612.1 494.1L619.3 497.1L623.4 471.4L616.2 468.4z" fill="#b7f900"/>
<path d="M619.3 497.1L626.5 500.1L630.6 475.7L623.4 471.4z" fill="#b6f800"/>
<path d="M626.5 500.1L633.7 503.1L637.8 480L630.6 475.7z" fill="#b2f800"/>
<path d="M633.7 503.1L640.9 506.1L644.9 484.3L637.8 480z" fill="#aef700"/>
<path d="M640.9 506.1L648.1 510.3L652.2 492.5L644.9 484.3z" fill="#a3f600"/>
<path d="M648.1 510.3L655.9 517.5L660 500.9L652.2 492.5z" fill="#8ef200"/>
<path d="M655.9 517.5L663.1 525.7L667.2 510.4L660 500.9z" fill="#6aee00"/>
<path d="M663.1 525.7L666.4 532.3L670.5 517L667.2 510.4z" fill="#53eb00"/>
<path d="M666.4 532.3L670.3 540.4L674.4 525.1L670.5 517z" fill="#42e900"/>
<path d="M670.3 540.4L677.5 539.5L681.6 525.5L674.4 525.1z" fill="#3de800"/>
<path d="M677.5 539.5L684.7 538.5L688.8 525.9L681.6 525.5z" fill="#47e900"/>
<path d="M684.7 538.5L692.5 535.3L696.6 523.9L688.8 525.9z" fill="#54eb00"/>
<path d="M692.5 535.3L699.7 537L703.8 516.5L696.6 523.9z" fill="#6fee00"/>
<path d="M699.7 537L706.9 537.3L711 510.3L703.8 516.5z" fill="#95f300"/>
<path d="M706.9 537.3L714.8 538L718.9 516.2L711 510.3z" fill="#a5f600"/>
<path d="M714.8 538L718.7 537L722.8 520.4L718.9 516.2z" fill="#a5f600"/>
<path d="M547.8 496.2L556.3 499.7L560.4 477.9L551.9 474.4z" fill="#3ae802"/>
<path d="M556.3 499.7L564.1 503L568.2 481.2L560.4 477.9z" fill="#3ae802"/>
<path d="M564.1 503L571.4 505.9L575.4 484.2L568.2 481.2z" fill="#3ae802"/>
<path d="M571.4 505.9L578.5 503.7L582.6 483.2L575.4 484.2z" fill="#41e900"/>
<path d="M578.5 503.7L585.7 501.5L589.8 484.9L582.6 483.2z" fill="#4dea00"/>
<path d="M585.7 501.5L592.9 501.9L597 487.9L589.8 484.9z" fill="#53eb00"/>
<path d="M592.9 501.9L600.1 503.5L604.2 490.9L597 487.9z" fill="#56eb00"/>
<path d="M600.1 503.5L608 506.8L612.1 494.1L604.2 490.9z" fill="#57eb00"/>
<path d="M608 506.8L615.2 509.8L619.3 497.1L612.1 494.1z" fill="#57eb00"/>
<path d="M615.2 509.8L622.4 512.8L626.5 500.1L619.3 497.1z" fill="#57eb00"/>
<path d="M622.4 512.8L629.6 515.7L633.7 503.1L626.5 500.1z" fill="#57eb00"/>
<path d="M629.6 515.7L636.8 518.7L640.9 506.1L633.7 503.1z" fill="#57eb00"/>
<path d="M636.8 518.7L644 523L648.1 510.3L640.9 506.1z" fill="#55eb00"/>
<path d="M644 523L651.8 528.9L655.9 517.5L648.1 510.3z" fill="#4eea00"/>
<path d="M651.8 528.9L659 535.7L663.1 525.7L655.9 517.5z" fill="#43e900"/>
<path d="M659 535.7L662.3 542.3L666.4 532.3L663.1 525.7z" fill="#32e708"/>
<path d="M662.3 542.3L666.2 551.8L670.3 540.4L666.4 532.3z" fill="#1ae519"/>
<path d="M666.2 551.8L673.4 548.2L677.5 539.5L670.3 540.4z" fill="#16e41c"/>
<path d="M673.4 548.2L680.6 544.7L684.7 538.5L677.5 539.5z" fill="#2ae60d"/>
<path d="M680.6 544.7L688.4 537.5L692.5 535.3L684.7 538.5z" fill="#43e900"/>
<path d="M688.4 537.5L695.6 535.3L699.7 537L692.5 535.3z" fill="#54eb00"/>
<path d="M695.6 535.3L702.8 534.4L706.9 537.3L699.7 537z" fill="#5eec00"/>
<path d="M702.8 534.4L710.7 532.4L714.8 538L706.9 537.3z" fill="#76ef00"/>
<path d="M710.7 532.4L714.6 531.4L718.7 537L714.8 538z" fill="#8cf200"/>
<path d="M544.7 520L553.2 523.5L556.3 499.7L547.8 496.2z" fill="#06e557"/>
<path d="M553.2 523.5L561.1 526.8L564.1 503L556.3 499.7z" fill="#06e557"/>
<path d="M561.1 526.8L568.3 529.8L571.4 505.9L564.1 503z" fill="#06e557"/>
<path d="M568.3 529.8L575.5 514.5L578.5 503.7L571.4 505.9z" fill="#0de539"/>
<path d="M575.5 514.5L582.7 511L585.7 501.5L578.5 503.7z" fill="#22e514"/>
<path d="M582.7 511L589.9 511.4L592.9 501.9L585.7 501.5z" fill="#32e708"/>
<path d="M589.9 511.4L597.1 513L600.1 503.5L592.9 501.9z" fill="#3ae802"/>
<path d="M597.1 513L604.9 515L608 506.8L600.1 503.5z" fill="#3de800"/>
<path d="M604.9 515L612.1 518L615.2 509.8L608 506.8z" fill="#3ee800"/>
<path d="M612.1 518L619.3 520.9L622.4 512.8L615.2 509.8z" fill="#3ee800"/>
<path d="M619.3 520.9L626.5 523.9L629.6 515.7L622.4 512.8z" fill="#3ee800"/>
<path d="M626.5 523.9L633.7 526.9L636.8 518.7L629.6 515.7z" fill="#3ee800"/>
<path d="M633.7 526.9L640.9 531.2L644 523L636.8 518.7z" fill="#3ce800"/>
<path d="M640.9 531.2L648.7 537L651.8 528.9L644 523z" fill="#34e706"/>
<path d="M648.7 537L655.9 543.9L659 535.7L651.8 528.9z" fill="#28e60f"/>
<path d="M655.9 543.9L659.2 550.5L662.3 542.3L659 535.7z" fill="#16e41c"/>
<path d="M659.2 550.5L663.1 559.9L666.2 551.8L662.3 542.3z" fill="#0ce53c"/>
<path d="M663.1 559.9L670.3 556.4L673.4 548.2L666.2 551.8z" fill="#0ce53f"/>
<path d="M670.3 556.4L677.5 552.9L680.6 544.7L673.4 548.2z" fill="#14e41e"/>
<path d="M677.5 552.9L685.4 544.4L688.4 537.5L680.6 544.7z" fill="#36e705"/>
<path d="M685.4 544.4L692.6 543.5L695.6 535.3L688.4 537.5z" fill="#4eea00"/>
<path d="M692.6 543.5L699.8 542.6L702.8 534.4L695.6 535.3z" fill="#5bec00"/>
<path d="M699.8 542.6L707.6 543.2L710.7 532.4L702.8 534.4z" fill="#71ee00"/>
<path d="M707.6 543.2L711.5 543.5L714.6 531.4L710.7 532.4z" fill="#85f100"/>
<path d="M541.7 542.5L550.2 546.1L553.2 523.5L544.7 520z" fill="#00eab9"/>
<path d="M550.2 546.1L558 549.3L561.1 526.8L553.2 523.5z" fill="#00eab9"/>
<path d="M558 549.3L565.2 552.3L568.3 529.8L561.1 526.8z" fill="#00eab9"/>
<path d="M565.2 552.3L572.4 526.6L575.5 514.5L568.3 529.8z" fill="#00e885"/>
<path d="M572.4 526.6L579.6 521.8L582.7 511L575.5 514.5z" fill="#0de53a"/>
<path d="M579.6 521.8L586.8 519.5L589.9 511.4L582.7 511z" fill="#14e41e"/>
<path d="M586.8 519.5L594 519.9L597.1 513L589.9 511.4z" fill="#1fe516"/>
<path d="M594 519.9L601.8 521.9L604.9 515L597.1 513z" fill="#26e611"/>
<path d="M601.8 521.9L609 524.9L612.1 518L604.9 515z" fill="#28e60f"/>
<path d="M609 524.9L616.2 527.8L619.3 520.9L612.1 518z" fill="#28e60f"/>
<path d="M616.2 527.8L623.4 530.8L626.5 523.9L619.3 520.9z" fill="#28e60f"/>
<path d="M623.4 530.8L630.6 533.8L633.7 526.9L626.5 523.9z" fill="#28e60f"/>
<path d="M630.6 533.8L637.8 538.1L640.9 531.2L633.7 526.9z" fill="#26e611"/>
<path d="M637.8 538.1L645.7 543.9L648.7 537L640.9 531.2z" fill="#1ee516"/>
<path d="M645.7 543.9L652.9 550.8L655.9 543.9L648.7 537z" fill="#13e421"/>
<path d="M652.9 550.8L656.1 557.4L659.2 550.5L655.9 543.9z" fill="#0de539"/>
<path d="M656.1 557.4L660.1 566.8L663.1 559.9L659.2 550.5z" fill="#05e65a"/>
<path d="M660.1 566.8L667.2 562L670.3 556.4L663.1 559.9z" fill="#05e65c"/>
<path d="M667.2 562L674.4 558.5L677.5 552.9L670.3 556.4z" fill="#0de539"/>
<path d="M674.4 558.5L682.3 547.4L685.4 544.4L677.5 552.9z" fill="#26e611"/>
<path d="M682.3 547.4L689.5 549.1L692.6 543.5L685.4 544.4z" fill="#42e900"/>
<path d="M689.5 549.1L696.7 552L699.8 542.6L692.6 543.5z" fill="#49e900"/>
<path d="M696.7 552L704.5 554L707.6 543.2L699.8 542.6z" fill="#4eea00"/>
<path d="M704.5 554L708.5 555.6L711.5 543.5L707.6 543.2z" fill="#52eb00"/>
<path d="M536.5 574L545 577.5L550.2 546.1L541.7 542.5z" fill="#00c1ff"/>
<path d="M545 577.5L552.9 580.8L558 549.3L550.2 546.1z" fill="#00c1ff"/>
<path d="M552.9 580.8L560.1 583.8L565.2 552.3L558 549.3z" fill="#00c1ff"/>
<path d="M560.1 583.8L567.3 558.1L572.4 526.6L565.2 552.3z" fill="#00e0de"/>
<path d="M567.3 558.1L574.5 533.7L579.6 521.8L572.4 526.6z" fill="#00e781"/>
<path d="M574.5 533.7L581.7 530.2L586.8 519.5L579.6 521.8z" fill="#0ae548"/>
<path d="M581.7 530.2L588.9 530.5L594 519.9L586.8 519.5z" fill="#0fe432"/>
<path d="M588.9 530.5L596.7 532.5L601.8 521.9L594 519.9z" fill="#12e428"/>
<path d="M596.7 532.5L603.9 534.2L609 524.9L601.8 521.9z" fill="#13e423"/>
<path d="M603.9 534.2L611.1 537.1L616.2 527.8L609 524.9z" fill="#13e421"/>
<path d="M611.1 537.1L618.3 540.1L623.4 530.8L616.2 527.8z" fill="#13e421"/>
<path d="M618.3 540.1L625.5 543.1L630.6 533.8L623.4 530.8z" fill="#13e421"/>
<path d="M625.5 543.1L632.7 548.7L637.8 538.1L630.6 533.8z" fill="#12e426"/>
<path d="M632.7 548.7L640.5 555.9L645.7 543.9L637.8 538.1z" fill="#0fe534"/>
<path d="M640.5 555.9L647.7 564L652.9 550.8L645.7 543.9z" fill="#0ae548"/>
<path d="M647.7 564L651 571.9L656.1 557.4L652.9 550.8z" fill="#03e662"/>
<path d="M651 571.9L654.9 580.1L660.1 566.8L656.1 557.4z" fill="#00e781"/>
<path d="M654.9 580.1L662.1 580.4L667.2 562L660.1 566.8z" fill="#00e885"/>
<path d="M662.1 580.4L669.3 580.8L674.4 558.5L667.2 562z" fill="#00e66f"/>
<path d="M669.3 580.8L677.2 574.9L682.3 547.4L674.4 558.5z" fill="#0ae546"/>
<path d="M677.2 574.9L684.4 570.1L689.5 549.1L682.3 547.4z" fill="#15e41d"/>
<path d="M684.4 570.1L691.6 565.3L696.7 552L689.5 549.1z" fill="#26e611"/>
<path d="M691.6 565.3L699.4 568.5L704.5 554L696.7 552z" fill="#2ee70a"/>
<path d="M699.4 568.5L703.3 570.1L708.5 555.6L704.5 554z" fill="#30e709"/>
<path d="M534.5 581.6L543 585.1L545 577.5L536.5 574z" fill="#0076f8"/>
<path d="M543 585.1L550.8 588.4L552.9 580.8L545 577.5z" fill="#0076f8"/>
<path d="M550.8 588.4L558 591.4L560.1 583.8L552.9 580.8z" fill="#0076f8"/>
<path d="M558 591.4L565.2 568.3L567.3 558.1L560.1 583.8z" fill="#00b1ff"/>
<path d="M565.2 568.3L572.4 541.3L574.5 533.7L567.3 558.1z" fill="#00e9bb"/>
<path d="M572.4 541.3L579.6 535.2L581.7 530.2L574.5 533.7z" fill="#01e66b"/>
<path d="M579.6 535.2L586.8 534.3L588.9 530.5L581.7 530.2z" fill="#08e54e"/>
<path d="M586.8 534.3L594.7 536.2L596.7 532.5L588.9 530.5z" fill="#0be543"/>
<path d="M594.7 536.2L601.9 537.9L603.9 534.2L596.7 532.5z" fill="#0ce53c"/>
<path d="M601.9 537.9L609.1 540.9L611.1 537.1L603.9 534.2z" fill="#0de539"/>
<path d="M609.1 540.9L616.3 543.8L618.3 540.1L611.1 537.1z" fill="#0de539"/>
<path d="M616.3 543.8L623.4 546.8L625.5 543.1L618.3 540.1z" fill="#0de539"/>
<path d="M623.4 546.8L630.7 552.4L632.7 548.7L625.5 543.1z" fill="#0ce53f"/>
<path d="M630.7 552.4L638.5 560.9L640.5 555.9L632.7 548.7z" fill="#07e552"/>
<path d="M638.5 560.9L645.7 569.1L647.7 564L640.5 555.9z" fill="#01e66b"/>
<path d="M645.7 569.1L649 575.6L651 571.9L647.7 564z" fill="#00e884"/>
<path d="M649 575.6L652.9 581.2L654.9 580.1L651 571.9z" fill="#00e99d"/>
<path d="M652.9 581.2L660.1 578.9L662.1 580.4L654.9 580.1z" fill="#00eaa0"/>
<path d="M660.1 578.9L667.3 576.7L669.3 580.8L662.1 580.4z" fill="#00e88e"/>
<path d="M667.3 576.7L675.1 568.2L677.2 574.9L669.3 580.8z" fill="#00e66e"/>
<path d="M675.1 568.2L682.3 568.6L684.4 570.1L677.2 574.9z" fill="#0ae546"/>
<path d="M682.3 568.6L689.5 570.3L691.6 565.3L684.4 570.1z" fill="#10e42d"/>
<path d="M689.5 570.3L697.4 573.5L699.4 568.5L691.6 565.3z" fill="#13e421"/>
<path d="M697.4 573.5L701.3 575.2L703.3 570.1L699.4 568.5z" fill="#13e421"/>
<path d="M531.4 589.8L539.9 593.3L543 585.1L534.5 581.6z" fill="#0059f1"/>
<path d="M539.9 593.3L547.8 596.6L550.8 588.4L543 585.1z" fill="#0059f1"/>
<path d="M547.8 596.6L555 599.6L558 591.4L550.8 588.4z" fill="#0059f1"/>
<path d="M555 599.6L562.2 576.5L565.2 568.3L558 591.4z" fill="#0093fe"/>
<path d="M562.2 576.5L569.4 556L572.4 541.3L565.2 568.3z" fill="#00e1db"/>
<path d="M569.4 556L576.6 548.6L579.6 535.2L572.4 541.3z" fill="#00e992"/>
<path d="M576.6 548.6L583.7 543.8L586.8 534.3L579.6 535.2z" fill="#00e66f"/>
<path d="M583.7 543.8L591.6 543.1L594.7 536.2L586.8 534.3z" fill="#05e65a"/>
<path d="M591.6 543.1L598.8 544.8L601.9 537.9L594.7 536.2z" fill="#08e550"/>
<path d="M598.8 544.8L606 547.8L609.1 540.9L601.9 537.9z" fill="#08e54d"/>
<path d="M606 547.8L613.2 550.7L616.3 543.8L609.1 540.9z" fill="#08e54d"/>
<path d="M613.2 550.7L620.4 553.7L623.4 546.8L616.3 543.8z" fill="#08e54d"/>
<path d="M620.4 553.7L627.6 558L630.7 552.4L623.4 546.8z" fill="#07e552"/>
<path d="M627.6 558L635.4 562.6L638.5 560.9L630.7 552.4z" fill="#04e65f"/>
<path d="M635.4 562.6L642.6 568.1L645.7 569.1L638.5 560.9z" fill="#00e671"/>
<path d="M642.6 568.1L645.9 572.1L649 575.6L645.7 569.1z" fill="#00e782"/>
<path d="M645.9 572.1L649.8 576.3L652.9 581.2L649 575.6z" fill="#00e992"/>
<path d="M649.8 576.3L657 574.1L660.1 578.9L652.9 581.2z" fill="#00e88e"/>
<path d="M657 574.1L664.2 571.9L667.3 576.7L660.1 578.9z" fill="#00e777"/>
<path d="M664.2 571.9L672.1 563.4L675.1 568.2L667.3 576.7z" fill="#08e54d"/>
<path d="M672.1 563.4L679.3 562.5L682.3 568.6L675.1 568.2z" fill="#12e426"/>
<path d="M679.3 562.5L686.4 561.5L689.5 570.3L682.3 568.6z" fill="#19e41a"/>
<path d="M686.4 561.5L694.3 562.2L697.4 573.5L689.5 570.3z" fill="#20e515"/>
<path d="M694.3 562.2L698.2 562.5L701.3 575.2L697.4 573.5z" fill="#24e612"/>
<path d="M529.4 593.5L537.9 597.1L539.9 593.3L531.4 589.8z" fill="#0045ed"/>
<path d="M537.9 597.1L545.7 600.3L547.8 596.6L539.9 593.3z" fill="#0045ed"/>
<path d="M545.7 600.3L552.9 603.3L555 599.6L547.8 596.6z" fill="#0045ed"/>
<path d="M552.9 603.3L560.1 581.5L562.2 576.5L555 599.6z" fill="#007df9"/>
<path d="M560.1 581.5L567.3 565L569.4 556L562.2 576.5z" fill="#00d9f7"/>
<path d="M567.3 565L574.5 557.5L576.6 548.6L569.4 556z" fill="#00e8bd"/>
<path d="M574.5 557.5L581.7 552.7L583.7 543.8L576.6 548.6z" fill="#00e997"/>
<path d="M581.7 552.7L589.6 552L591.6 543.1L583.7 543.8z" fill="#00e77d"/>
<path d="M589.6 552L596.7 552.4L598.8 544.8L591.6 543.1z" fill="#00e66f"/>
<path d="M596.7 552.4L604 555.4L606 547.8L598.8 544.8z" fill="#01e66b"/>
<path d="M604 555.4L611.1 558.4L613.2 550.7L606 547.8z" fill="#01e66b"/>
<path d="M611.1 558.4L618.3 561.3L620.4 553.7L613.2 550.7z" fill="#01e66b"/>
<path d="M618.3 561.3L625.5 564.3L627.6 558L620.4 553.7z" fill="#00e66c"/>
<path d="M625.5 564.3L633.4 567.6L635.4 562.6L627.6 558z" fill="#00e66f"/>
<path d="M633.4 567.6L640.6 570.6L642.6 568.1L635.4 562.6z" fill="#00e674"/>
<path d="M640.6 570.6L643.9 571.9L645.9 572.1L642.6 568.1z" fill="#00e77a"/>
<path d="M643.9 571.9L647.8 573.5L649.8 576.3L645.9 572.1z" fill="#00e780"/>
<path d="M647.8 573.5L655 571.3L657 574.1L649.8 576.3z" fill="#00e777"/>
<path d="M655 571.3L662.2 569.1L664.2 571.9L657 574.1z" fill="#04e65d"/>
<path d="M662.2 569.1L670 560.6L672.1 563.4L664.2 571.9z" fill="#0fe432"/>
<path d="M670 560.6L677.2 561L679.3 562.5L672.1 563.4z" fill="#22e514"/>
<path d="M677.2 561L684.4 562.7L686.4 561.5L679.3 562.5z" fill="#2de60b"/>
<path d="M684.4 562.7L692.3 565.9L694.3 562.2L686.4 561.5z" fill="#34e706"/>
<path d="M692.3 565.9L696.2 567.5L698.2 562.5L694.3 562.2z" fill="#38e803"/>
<path d="M527.3 597.3L535.8 600.8L537.9 597.1L529.4 593.5z" fill="#0039ea"/>
<path d="M535.8 600.8L543.7 604L545.7 600.3L537.9 597.1z" fill="#0039ea"/>
<path d="M543.7 604L550.9 607L552.9 603.3L545.7 600.3z" fill="#0039ea"/>
<path d="M550.9 607L558.1 585.2L560.1 581.5L552.9 603.3z" fill="#0070f6"/>
<path d="M558.1 585.2L565.3 570L567.3 565L560.1 581.5z" fill="#00ceff"/>
<path d="M565.3 570L572.5 566.5L574.5 557.5L567.3 565z" fill="#00e2d6"/>
<path d="M572.5 566.5L579.7 565.5L581.7 552.7L574.5 557.5z" fill="#00e9bc"/>
<path d="M579.7 565.5L587.5 567.5L589.6 552L581.7 552.7z" fill="#00eaab"/>
<path d="M587.5 567.5L594.7 567.9L596.7 552.4L589.6 552z" fill="#00eaa0"/>
<path d="M594.7 567.9L601.9 569.5L604 555.4L596.7 552.4z" fill="#00e998"/>
<path d="M601.9 569.5L609.1 571.2L611.1 558.4L604 555.4z" fill="#00e995"/>
<path d="M609.1 571.2L616.3 572.9L618.3 561.3L611.1 558.4z" fill="#00e992"/>
<path d="M616.3 572.9L623.5 573.3L625.5 564.3L618.3 561.3z" fill="#00e88e"/>
<path d="M623.5 573.3L631.3 573.9L633.4 567.6L625.5 564.3z" fill="#00e888"/>
<path d="M631.3 573.9L638.5 574.3L640.6 570.6L633.4 567.6z" fill="#00e782"/>
<path d="M638.5 574.3L641.8 574.3L643.9 571.9L640.6 570.6z" fill="#00e77e"/>
<path d="M641.8 574.3L645.7 574.7L647.8 573.5L643.9 571.9z" fill="#00e77b"/>
<path d="M645.7 574.7L652.9 575L655 571.3L647.8 573.5z" fill="#00e671"/>
<path d="M652.9 575L660.1 576.7L662.2 569.1L655 571.3z" fill="#04e65f"/>
<path d="M660.1 576.7L668 574.8L670 560.6L662.2 569.1z" fill="#0be541"/>
<path d="M668 574.8L675.2 569.9L677.2 561L670 560.6z" fill="#14e41e"/>
<path d="M675.2 569.9L682.4 567.7L684.4 562.7L677.2 561z" fill="#24e612"/>
<path d="M682.4 567.7L690.2 572.2L692.3 565.9L684.4 562.7z" fill="#29e60e"/>
<path d="M690.2 572.2L694.1 575.2L696.2 567.5L692.3 565.9z" fill="#27e610"/>
<path d="M524.3 601.5L532.8 605.1L535.8 600.8L527.3 597.3z" fill="#002ee7"/>
<path d="M532.8 605.1L540.6 608.3L543.7 604L535.8 600.8z" fill="#002ee7"/>
<path d="M540.6 608.3L547.8 611.3L550.9 607L543.7 604z" fill="#002ee7"/>
<path d="M547.8 611.3L555 586.9L558.1 585.2L550.9 607z" fill="#0068f4"/>
<path d="M555 586.9L562.2 576.9L565.3 570L558.1 585.2z" fill="#00c1ff"/>
<path d="M562.2 576.9L569.4 579.9L572.5 566.5L565.3 570z" fill="#00dbf0"/>
<path d="M569.4 579.9L576.6 582.8L579.7 565.5L572.5 566.5z" fill="#00dee6"/>
<path d="M576.6 582.8L584.4 586.1L587.5 567.5L579.7 565.5z" fill="#00dfe2"/>
<path d="M584.4 586.1L591.6 589.1L594.7 567.9L587.5 567.5z" fill="#00e0de"/>
<path d="M591.6 589.1L598.8 592.1L601.9 569.5L594.7 567.9z" fill="#00e1db"/>
<path d="M598.8 592.1L606 595L609.1 571.2L601.9 569.5z" fill="#00e1d8"/>
<path d="M606 595L613.2 598L616.3 572.9L609.1 571.2z" fill="#00e2d6"/>
<path d="M613.2 598L620.4 598.4L623.5 573.3L616.3 572.9z" fill="#00e4d0"/>
<path d="M620.4 598.4L628.3 599L631.3 573.9L623.5 573.3z" fill="#00e6c7"/>
<path d="M628.3 599L635.5 600.7L638.5 574.3L631.3 573.9z" fill="#00e8bf"/>
<path d="M635.5 600.7L638.7 600.8L641.8 574.3L638.5 574.3z" fill="#00eab9"/>
<path d="M638.7 600.8L642.7 601.1L645.7 574.7L641.8 574.3z" fill="#00ebb4"/>
<path d="M642.7 601.1L649.8 597.6L652.9 575L645.7 574.7z" fill="#00eaa7"/>
<path d="M649.8 597.6L657 594L660.1 576.7L652.9 575z" fill="#00e994"/>
<path d="M657 594L664.9 585.6L668 574.8L660.1 576.7z" fill="#00e778"/>
<path d="M664.9 585.6L672.1 583.3L675.2 569.9L668 574.8z" fill="#07e553"/>
<path d="M672.1 583.3L679.3 583.7L682.4 567.7L675.2 569.9z" fill="#0de539"/>
<path d="M679.3 583.7L687.1 589.6L690.2 572.2L682.4 567.7z" fill="#0fe534"/>
<path d="M687.1 589.6L691.1 592.5L694.1 575.2L690.2 572.2z" fill="#0ce53c"/>
<path d="M521.7 602.9L530.2 606.5L532.8 605.1L524.3 601.5z" fill="#0028e6"/>
<path d="M530.2 606.5L538 609.7L540.6 608.3L532.8 605.1z" fill="#0028e6"/>
<path d="M538 609.7L545.3 612.7L547.8 611.3L540.6 608.3z" fill="#0028e6"/>
<path d="M545.3 612.7L552.4 588.3L555 586.9L547.8 611.3z" fill="#0065f4"/>
<path d="M552.4 588.3L559.6 578.3L562.2 576.9L555 586.9z" fill="#00bcff"/>
<path d="M559.6 578.3L566.8 581.3L569.4 579.9L562.2 576.9z" fill="#00d7ff"/>
<path d="M566.8 581.3L574 584.2L576.6 582.8L569.4 579.9z" fill="#00d7ff"/>
<path d="M574 584.2L581.9 587.5L584.4 586.1L576.6 582.8z" fill="#00d7ff"/>
<path d="M581.9 587.5L589.1 590.5L591.6 589.1L584.4 586.1z" fill="#00d7ff"/>
<path d="M589.1 590.5L596.3 593.5L598.8 592.1L591.6 589.1z" fill="#00d7ff"/>
<path d="M596.3 593.5L603.5 596.4L606 595L598.8 592.1z" fill="#00d7ff"/>
<path d="M603.5 596.4L610.7 599.4L613.2 598L606 595z" fill="#00d7ff"/>
<path d="M610.7 599.4L617.9 599.8L620.4 598.4L613.2 598z" fill="#00d8fa"/>
<path d="M617.9 599.8L625.7 600.4L628.3 599L620.4 598.4z" fill="#00dbf1"/>
<path d="M625.7 600.4L632.9 602.1L635.5 600.7L628.3 599z" fill="#00ddea"/>
<path d="M632.9 602.1L636.2 600.9L638.7 600.8L635.5 600.7z" fill="#00dee4"/>
<path d="M636.2 600.9L640.1 601.2L642.7 601.1L638.7 600.8z" fill="#00e0de"/>
<path d="M640.1 601.2L647.3 601.6L649.8 597.6L642.7 601.1z" fill="#00e3d4"/>
<path d="M647.3 601.6L654.5 600.6L657 594L649.8 597.6z" fill="#00e7c2"/>
<path d="M654.5 600.6L662.3 597.4L664.9 585.6L657 594z" fill="#00eaa5"/>
<path d="M662.3 597.4L669.5 600.4L672.1 583.3L664.9 585.6z" fill="#00e88b"/>
<path d="M669.5 600.4L676.7 603.3L679.3 583.7L672.1 583.3z" fill="#00e782"/>
<path d="M676.7 603.3L684.6 606.6L687.1 589.6L679.3 583.7z" fill="#00e782"/>
<path d="M684.6 606.6L688.5 608.2L691.1 592.5L687.1 589.6z" fill="#00e887"/>
<path d="M519.7 604.1L528.2 607.6L530.2 606.5L521.7 602.9z" fill="#0028e6"/>
<path d="M528.2 607.6L536 610.8L538 609.7L530.2 606.5z" fill="#0028e6"/>
<path d="M536 610.8L543.2 613.8L545.3 612.7L538 609.7z" fill="#0028e6"/>
<path d="M543.2 613.8L550.4 589.4L552.4 588.3L545.3 612.7z" fill="#0065f4"/>
<path d="M550.4 589.4L557.6 579.4L559.6 578.3L552.4 588.3z" fill="#00bcff"/>
<path d="M557.6 579.4L564.8 582.4L566.8 581.3L559.6 578.3z" fill="#00d7ff"/>
<path d="M564.8 582.4L572 585.4L574 584.2L566.8 581.3z" fill="#00d7ff"/>
<path d="M572 585.4L579.8 588.6L581.9 587.5L574 584.2z" fill="#00d7ff"/>
<path d="M579.8 588.6L587 591.6L589.1 590.5L581.9 587.5z" fill="#00d7ff"/>
<path d="M587 591.6L594.2 594.6L596.3 593.5L589.1 590.5z" fill="#00d7ff"/>
<path d="M594.2 594.6L601.4 597.6L603.5 596.4L596.3 593.5z" fill="#00d7ff"/>
<path d="M601.4 597.6L608.6 600.5L610.7 599.4L603.5 596.4z" fill="#00d7ff"/>
<path d="M608.6 600.5L615.8 600.9L617.9 599.8L610.7 599.4z" fill="#00d8fa"/>
<path d="M615.8 600.9L623.7 601.6L625.7 600.4L617.9 599.8z" fill="#00dbf1"/>
<path d="M623.7 601.6L630.9 603.2L632.9 602.1L625.7 600.4z" fill="#00ddea"/>
<path d="M630.9 603.2L634.1 602L636.2 600.9L632.9 602.1z" fill="#00dee3"/>
<path d="M634.1 602L638 602.3L640.1 601.2L636.2 600.9z" fill="#00e0dc"/>
<path d="M638 602.3L645.2 602.7L647.3 601.6L640.1 601.2z" fill="#00e2d5"/>
<path d="M645.2 602.7L652.4 601.8L654.5 600.6L647.3 601.6z" fill="#00e5c9"/>
<path d="M652.4 601.8L660.3 598.5L662.3 597.4L654.5 600.6z" fill="#00eab6"/>
<path d="M660.3 598.5L667.5 601.5L669.5 600.4L662.3 597.4z" fill="#00eaa8"/>
<path d="M667.5 601.5L674.7 604.5L676.7 603.3L669.5 600.4z" fill="#00eaa8"/>
<path d="M674.7 604.5L682.5 607.7L684.6 606.6L676.7 603.3z" fill="#00eaa8"/>
<path d="M682.5 607.7L686.5 609.3L688.5 608.2L684.6 606.6z" fill="#00eaa8"/>
<path d="M517.6 605.2L526.1 608.7L528.2 607.6L519.7 604.1z" fill="#0028e6"/>
<path d="M526.1 608.7L534 612L536 610.8L528.2 607.6z" fill="#0028e6"/>
<path d="M534 612L541.2 614.9L543.2 613.8L536 610.8z" fill="#0028e6"/>
<path d="M541.2 614.9L548.3 590.6L550.4 589.4L543.2 613.8z" fill="#0065f4"/>
<path d="M548.3 590.6L555.6 580.5L557.6 579.4L550.4 589.4z" fill="#00bcff"/>
<path d="M555.6 580.5L562.7 583.5L564.8 582.4L557.6 579.4z" fill="#00d7ff"/>
<path d="M562.7 583.5L569.9 586.5L572 585.4L564.8 582.4z" fill="#00d7ff"/>
<path d="M569.9 586.5L577.8 589.7L579.8 588.6L572 585.4z" fill="#00d7ff"/>
<path d="M577.8 589.7L585 592.7L587 591.6L579.8 588.6z" fill="#00d7ff"/>
<path d="M585 592.7L592.2 595.7L594.2 594.6L587 591.6z" fill="#00d7ff"/>
<path d="M592.2 595.7L599.4 598.7L601.4 597.6L594.2 594.6z" fill="#00d7ff"/>
<path d="M599.4 598.7L606.6 601.7L608.6 600.5L601.4 597.6z" fill="#00d7ff"/>
<path d="M606.6 601.7L613.8 602L615.8 600.9L608.6 600.5z" fill="#00d8fa"/>
<path d="M613.8 602L621.6 602.7L623.7 601.6L615.8 600.9z" fill="#00dbf1"/>
<path d="M621.6 602.7L628.8 604.4L630.9 603.2L623.7 601.6z" fill="#00ddea"/>
<path d="M628.8 604.4L632.1 603.1L634.1 602L630.9 603.2z" fill="#00dee3"/>
<path d="M632.1 603.1L636 603.4L638 602.3L634.1 602z" fill="#00e0dc"/>
<path d="M636 603.4L643.2 603.8L645.2 602.7L638 602.3z" fill="#00e2d5"/>
<path d="M643.2 603.8L650.4 602.9L652.4 601.8L645.2 602.7z" fill="#00e5c9"/>
<path d="M650.4 602.9L658.2 599.6L660.3 598.5L652.4 601.8z" fill="#00eab6"/>
<path d="M658.2 599.6L665.4 602.6L667.5 601.5L660.3 598.5z" fill="#00eaa8"/>
<path d="M665.4 602.6L672.6 605.6L674.7 604.5L667.5 601.5z" fill="#00eaa8"/>
<path d="M672.6 605.6L680.5 608.8L682.5 607.7L674.7 604.5z" fill="#00eaa8"/>
<path d="M680.5 608.8L684.4 610.5L686.5 609.3L682.5 607.7z" fill="#00eaa8"/>
<path d="M516.6 605.7L525.1 609.3L526.1 608.7L517.6 605.2z" fill="#0028e6"/>
<path d="M525.1 609.3L532.9 612.5L534 612L526.1 608.7z" fill="#0028e6"/>
<path d="M532.9 612.5L540.1 615.5L541.2 614.9L534 612z" fill="#0028e6"/>
<path d="M540.1 615.5L547.3 591.1L548.3 590.6L541.2 614.9z" fill="#0065f4"/>
<path d="M547.3 591.1L554.5 581.1L555.6 580.5L548.3 590.6z" fill="#00bcff"/>
<path d="M554.5 581.1L561.7 584.1L562.7 583.5L555.6 580.5z" fill="#00d7ff"/>
<path d="M561.7 584.1L568.9 587L569.9 586.5L562.7 583.5z" fill="#00d7ff"/>
<path d="M568.9 587L576.8 590.3L577.8 589.7L569.9 586.5z" fill="#00d7ff"/>
<path d="M576.8 590.3L584 593.3L585 592.7L577.8 589.7z" fill="#00d7ff"/>
<path d="M584 593.3L591.2 596.3L592.2 595.7L585 592.7z" fill="#00d7ff"/>
<path d="M591.2 596.3L598.3 599.2L599.4 598.7L592.2 595.7z" fill="#00d7ff"/>
<path d="M598.3 599.2L605.5 602.2L606.6 601.7L599.4 598.7z" fill="#00d7ff"/>
<path d="M605.5 602.2L612.7 602.6L613.8 602L606.6 601.7z" fill="#00d8fa"/>
<path d="M612.7 602.6L620.6 603.2L621.6 602.7L613.8 602z" fill="#00dbf1"/>
<path d="M620.6 603.2L627.8 604.9L628.8 604.4L621.6 602.7z" fill="#00ddea"/>
<path d="M627.8 604.9L631.1 603.7L632.1 603.1L628.8 604.4z" fill="#00dee3"/>
<path d="M631.1 603.7L635 604L636 603.4L632.1 603.1z" fill="#00e0dc"/>
<path d="M635 604L642.2 604.4L643.2 603.8L636 603.4z" fill="#00e2d5"/>
<path d="M642.2 604.4L649.4 603.4L650.4 602.9L643.2 603.8z" fill="#00e5c9"/>
<path d="M649.4 603.4L657.2 600.2L658.2 599.6L650.4 602.9z" fill="#00eab6"/>
<path d="M657.2 600.2L664.4 603.2L665.4 602.6L658.2 599.6z" fill="#00eaa8"/>
<path d="M664.4 603.2L671.6 606.1L672.6 605.6L665.4 602.6z" fill="#00eaa8"/>
<path d="M671.6 606.1L679.5 609.4L680.5 608.8L672.6 605.6z" fill="#00eaa8"/>
<path d="M679.5 609.4L683.4 611L684.4 610.5L680.5 608.8z" fill="#00eaa8"/>
<path d="M515.6 606.3L524.1 609.8L525.1 609.3L516.6 605.7z" fill="#0028e6"/>
<path d="M524.1 609.8L531.9 613.1L532.9 612.5L525.1 609.3z" fill="#0028e6"/>
<path d="M531.9 613.1L539.1 616.1L540.1 615.5L532.9 612.5z" fill="#0028e6"/>
<path d="M539.1 616.1L546.3 591.7L547.3 591.1L540.1 615.5z" fill="#0065f4"/>
<path d="M546.3 591.7L553.5 581.6L554.5 581.1L547.3 591.1z" fill="#00bcff"/>
<path d="M553.5 581.6L560.7 584.6L561.7 584.1L554.5 581.1z" fill="#00d7ff"/>
<path d="M560.7 584.6L567.9 587.6L568.9 587L561.7 584.1z" fill="#00d7ff"/>
<path d="M567.9 587.6L575.7 590.8L576.8 590.3L568.9 587z" fill="#00d7ff"/>
<path d="M575.7 590.8L582.9 593.8L584 593.3L576.8 590.3z" fill="#00d7ff"/>
<path d="M582.9 593.8L590.1 596.8L591.2 596.3L584 593.3z" fill="#00d7ff"/>
<path d="M590.1 596.8L597.3 599.8L598.3 599.2L591.2 596.3z" fill="#00d7ff"/>
<path d="M597.3 599.8L604.5 602.8L605.5 602.2L598.3 599.2z" fill="#00d7ff"/>
<path d="M604.5 602.8L611.7 603.1L612.7 602.6L605.5 602.2z" fill="#00d8fa"/>
<path d="M611.7 603.1L619.6 603.8L620.6 603.2L612.7 602.6z" fill="#00dbf1"/>
<path d="M619.6 603.8L626.8 605.5L627.8 604.9L620.6 603.2z" fill="#00ddea"/>
<path d="M626.8 605.5L630 604.2L631.1 603.7L627.8 604.9z" fill="#00dee3"/>
<path d="M630 604.2L634 604.5L635 604L631.1 603.7z" fill="#00e0dc"/>
<path d="M634 604.5L641.1 604.9L642.2 604.4L635 604z" fill="#00e2d5"/>
<path d="M641.1 604.9L648.3 604L649.4 603.4L642.2 604.4z" fill="#00e5c9"/>
<path d="M648.3 604L656.2 600.7L657.2 600.2L649.4 603.4z" fill="#00eab6"/>
<path d="M656.2 600.7L663.4 603.7L664.4 603.2L657.2 600.2z" fill="#00eaa8"/>
<path d="M663.4 603.7L670.6 606.7L671.6 606.1L664.4 603.2z" fill="#00eaa8"/>
<path d="M670.6 606.7L678.4 609.9L679.5 609.4L671.6 606.1z" fill="#00eaa8"/>
<path d="M678.4 609.9L682.4 611.6L683.4 611L679.5 609.4z" fill="#00eaa8"/>
<path d="M513 525.6L521.5 529.2L524.1 609.8L515.6 606.3z" fill="#00d8fd"/>
<path d="M521.5 529.2L529.3 532.4L531.9 613.1L524.1 609.8z" fill="#00d8fd"/>
<path d="M529.3 532.4L536.6 535.4L539.1 616.1L531.9 613.1z" fill="#00d8fd"/>
<path d="M536.6 535.4L543.7 538.4L546.3 591.7L539.1 616.1z" fill="#00dee4"/>
<path d="M543.7 538.4L550.9 541.3L553.5 581.6L546.3 591.7z" fill="#00e8c0"/>
<path d="M550.9 541.3L558.1 544.3L560.7 584.6L553.5 581.6z" fill="#00ebb4"/>
<path d="M558.1 544.3L565.3 547.3L567.9 587.6L560.7 584.6z" fill="#00ebb4"/>
<path d="M565.3 547.3L573.2 550.6L575.7 590.8L567.9 587.6z" fill="#00ebb4"/>
<path d="M573.2 550.6L580.4 553.5L582.9 593.8L575.7 590.8z" fill="#00ebb4"/>
<path d="M580.4 553.5L587.6 556.5L590.1 596.8L582.9 593.8z" fill="#00ebb4"/>
<path d="M587.6 556.5L594.8 559.5L597.3 599.8L590.1 596.8z" fill="#00ebb4"/>
<path d="M594.8 559.5L602 562.5L604.5 602.8L597.3 599.8z" fill="#00ebb4"/>
<path d="M602 562.5L609.2 565.5L611.7 603.1L604.5 602.8z" fill="#00ebb1"/>
<path d="M609.2 565.5L617 568.7L619.6 603.8L611.7 603.1z" fill="#00eaab"/>
<path d="M617 568.7L624.2 571.7L626.8 605.5L619.6 603.8z" fill="#00eaa7"/>
<path d="M624.2 571.7L627.5 573.1L630 604.2L626.8 605.5z" fill="#00eaa2"/>
<path d="M627.5 573.1L631.4 574.7L634 604.5L630 604.2z" fill="#00e99e"/>
<path d="M631.4 574.7L638.6 579L641.1 604.9L634 604.5z" fill="#00e99b"/>
<path d="M638.6 579L645.8 583.2L648.3 604L641.1 604.9z" fill="#00e997"/>
<path d="M645.8 583.2L653.6 589.1L656.2 600.7L648.3 604z" fill="#00e890"/>
<path d="M653.6 589.1L660.8 594.7L663.4 603.7L656.2 600.7z" fill="#00e88e"/>
<path d="M660.8 594.7L668 600.3L670.6 606.7L663.4 603.7z" fill="#00e994"/>
<path d="M668 600.3L675.9 607.4L678.4 609.9L670.6 606.7z" fill="#00e99b"/>
<path d="M675.9 607.4L679.8 613L682.4 611.6L678.4 609.9z" fill="#00eaa4"/>
</g>
<g font-size="7.4" fill="#1a1aff" text-anchor="end">
<text x="509.7" y="573.8">23.65</text>
<text x="509.7" y="535.3">31.05</text>
<text x="509.7" y="496.7">38.45</text>
<text x="509.7" y="458.2">45.85</text>
<text x="509.7" y="419.6">53.25</text>
</g><g font-size="7.4" fill="#1a1aff">
<text x="825.5" y="562.8">23.65</text>
<text x="825.5" y="524.3">31.05</text>
<text x="825.5" y="485.7">38.45</text>
<text x="825.5" y="447.2">45.85</text>
<text x="825.5" y="408.6">53.25</text>
</g><g font-size="7.4" fill="#222" text-anchor="end">
<text x="509.6" y="612.8">0.00</text>
<text x="526.3" y="619.9">9.80</text>
<text x="547.9" y="628.8">22.75</text>
<text x="570.2" y="638.0">36.08</text>
<text x="591.8" y="647.0">49.02</text>
<text x="614.0" y="656.2">62.35</text>
<text x="635.6" y="665.1">75.29</text>
<text x="657.8" y="674.3">88.63</text>
</g><g font-size="7.0" fill="#ff1a1a">
<text x="682.3" y="681.5">1000</text>
<text x="700.1" y="671.5">2800</text>
<text x="720.5" y="660.4">4800</text>
<text x="735.7" y="650.8">6400</text>
<text x="757.9" y="639.7">8500</text>
<text x="777.9" y="628.2">10500</text>
<text x="798.4" y="616.6">12500</text>
<text x="818.0" y="605.9">14500</text>
</g>
<text x="544.5" y="672.3" font-size="7.8" font-weight="bold" fill="#555">% Throttle</text>
<text x="766.5" y="664" font-size="7.8" font-weight="bold" fill="#ff1a1a">RPM</text>
<text transform="translate(466,520.5) rotate(-90)" font-size="8.3" font-weight="bold" fill="#1010ff">deg</text>
<text transform="translate(865.3,490.5) rotate(90)" font-size="8.3" font-weight="bold" fill="#1010ff">deg</text>
<text x="668" y="337.5" font-size="11.6" font-weight="bold" fill="#000" text-anchor="middle">Main Spark Advance Neutral</text>
<text x="668" y="320.5" font-size="7.2" fill="#c8c8c8" text-anchor="middle">TunerPro - Version 5.00</text>
</svg>
<div id="wm" style="left:0;top:0;width:1445px;height:719px;opacity:0.33;pointer-events:none">
<svg style="left:0;top:0" width="1445" height="719" viewBox="0 0 1445 719">
<path d="M394.2 228.0C394.4 225.8 395.3 219.2 395.3 215.0C395.3 210.8 395.7 210.2 394.3 202.9C392.9 195.7 390.8 180.8 387.2 171.5C383.6 162.2 379.2 153.7 372.8 147.3C366.4 140.9 358.9 136.3 348.6 132.9C338.3 129.5 323.1 126.7 311.0 126.7C298.9 126.7 286.1 129.5 276.3 132.9C266.5 136.3 258.9 142.3 252.2 147.4C245.5 152.5 238.7 160.8 236.0 163.5" fill="none" stroke="#000" stroke-width="6.6"/>
<path d="M230.6 178.0C230.2 180.0 228.8 185.8 228.3 190.0C227.8 194.2 227.6 198.7 227.6 203.0C227.6 207.3 228.0 211.8 228.5 216.0C229.0 220.2 230.4 226.0 230.8 228.0" fill="none" stroke="#000" stroke-width="5"/>
<path fill-rule="evenodd" d="M241.4 157.6L253.0 155.6L270.9 180.8L285.6 169.8L304.0 220.7L283.4 189.0L281.2 181.8L268.0 188.2L249.6 164.0L231.5 167.3zM228.0 175.8L249.0 169.5L266.9 194.6L281.3 183.6L283.4 189.0L265.0 203.8L246.0 177.4L232.8 181.6zM244.1 235C260 229 288 236 301.2 249.7C285 265 255 270 244.1 235zM380.5 235C364.6 229 336.6 236 323.4 249.7C339.6 265 369.6 270 380.5 235zM310.8 268.5L296.0 289.0L306.3 306.0L310.8 297.0zM313.8 268.5L328.6 289.0L318.3 306.0L313.8 297.0zM278.4 313.5L287.2 321.6L289.8 318.1L296.4 326.5L299.5 323.1L305.9 330.8L312.3 327.3L318.7 330.8L325.1 323.1L328.2 326.5L334.8 318.1L337.4 321.6L346.2 313.5L336.3 331.2L333.2 326.9L327.9 336.6L324.5 332.3L318.7 341.2L312.3 337.2L312.3 337.2L305.9 341.2L300.1 332.3L296.7 336.6L291.4 326.9L288.3 331.2zM197.8 365.1L201.7 376.4L213.7 376.6L204.2 383.9L207.6 395.3L197.8 388.5L188.0 395.3L191.4 383.9L181.9 376.6L193.9 376.4zM426.8 365.1L430.7 376.4L442.7 376.6L433.2 383.9L436.6 395.3L426.8 388.5L417.0 395.3L420.4 383.9L410.9 376.6L422.9 376.4z"/>
<path fill-rule="evenodd" d="M213.2 275.1Q188.9 296.8 178.5 327.6L187.2 333.4Q201.0 304.8 222.0 280.9zM224.8 284.3L261.2 309.9L257.8 316.0L245.4 315.6L228.0 342.4L232.3 353.6L228.4 359.5L191.1 335.2zM213.2 319.0a8.4 8.4 0 1 0 16.8 0a8.4 8.4 0 1 0 -16.8 0z"/>
<path fill-rule="evenodd" d="M411.4 275.1Q435.7 296.8 446.1 327.6L437.4 333.4Q423.6 304.8 402.6 280.9zM399.8 284.3L363.4 309.9L366.8 316.0L379.2 315.6L396.6 342.4L392.3 353.6L396.2 359.5L433.5 335.2zM394.6 319.0a8.4 8.4 0 1 0 16.8 0a8.4 8.4 0 1 0 -16.8 0z"/>
<path d="M244.1 326.0L343.0 385.6L330.3 404.8L236.8 337.0z"/><path d="M380.5 326.0L281.6 385.6L294.3 404.8L387.8 337.0z"/>
<path fill-rule="evenodd" d="M326.4 403.2a22.5 22.5 0 1 0 45 0a22.5 22.5 0 1 0 -45 0zM339.8 403.2a9.1 9.1 0 1 0 18.2 0a9.1 9.1 0 1 0 -18.2 0z"/>
<path fill-rule="evenodd" d="M253.2 403.2a22.5 22.5 0 1 0 45 0a22.5 22.5 0 1 0 -45 0zM266.6 403.2a9.1 9.1 0 1 0 18.2 0a9.1 9.1 0 1 0 -18.2 0z"/>
<filter id="wf" x="-5%" y="-5%" width="110%" height="110%"><feMorphology operator="erode" radius="0 1.8"/><feMorphology operator="dilate" radius="1.3 0"/></filter><g filter="url(#wf)" font-family="'DejaVu Sans Mono','Liberation Mono',monospace" font-weight="bold" font-size="100"><text transform="translate(73.9,525.5) scale(0.719,1.264)">O</text><text transform="translate(132.6,526.8) scale(0.738,1.221)">L</text><text transform="translate(192.7,526.8) scale(0.768,1.104)">D</text><text transform="translate(257.4,525.8) scale(0.769,0.986)">S</text><text transform="translate(322.7,526.8) scale(0.725,1.026)">K</text><text transform="translate(386.0,525.7) scale(0.794,1.075)">U</text><text transform="translate(447.0,526.8) scale(0.732,1.200)">L</text><text transform="translate(504.9,526.8) scale(0.743,1.330)">L</text></g>
<text x="143.6 204.9 271.2 338 386.7 452.4" y="580.7" font-family="'Liberation Sans',sans-serif" font-weight="bold" font-size="38.6" stroke="#000" stroke-width="1.3">TUNING</text>
</svg></div>
</body></html>
